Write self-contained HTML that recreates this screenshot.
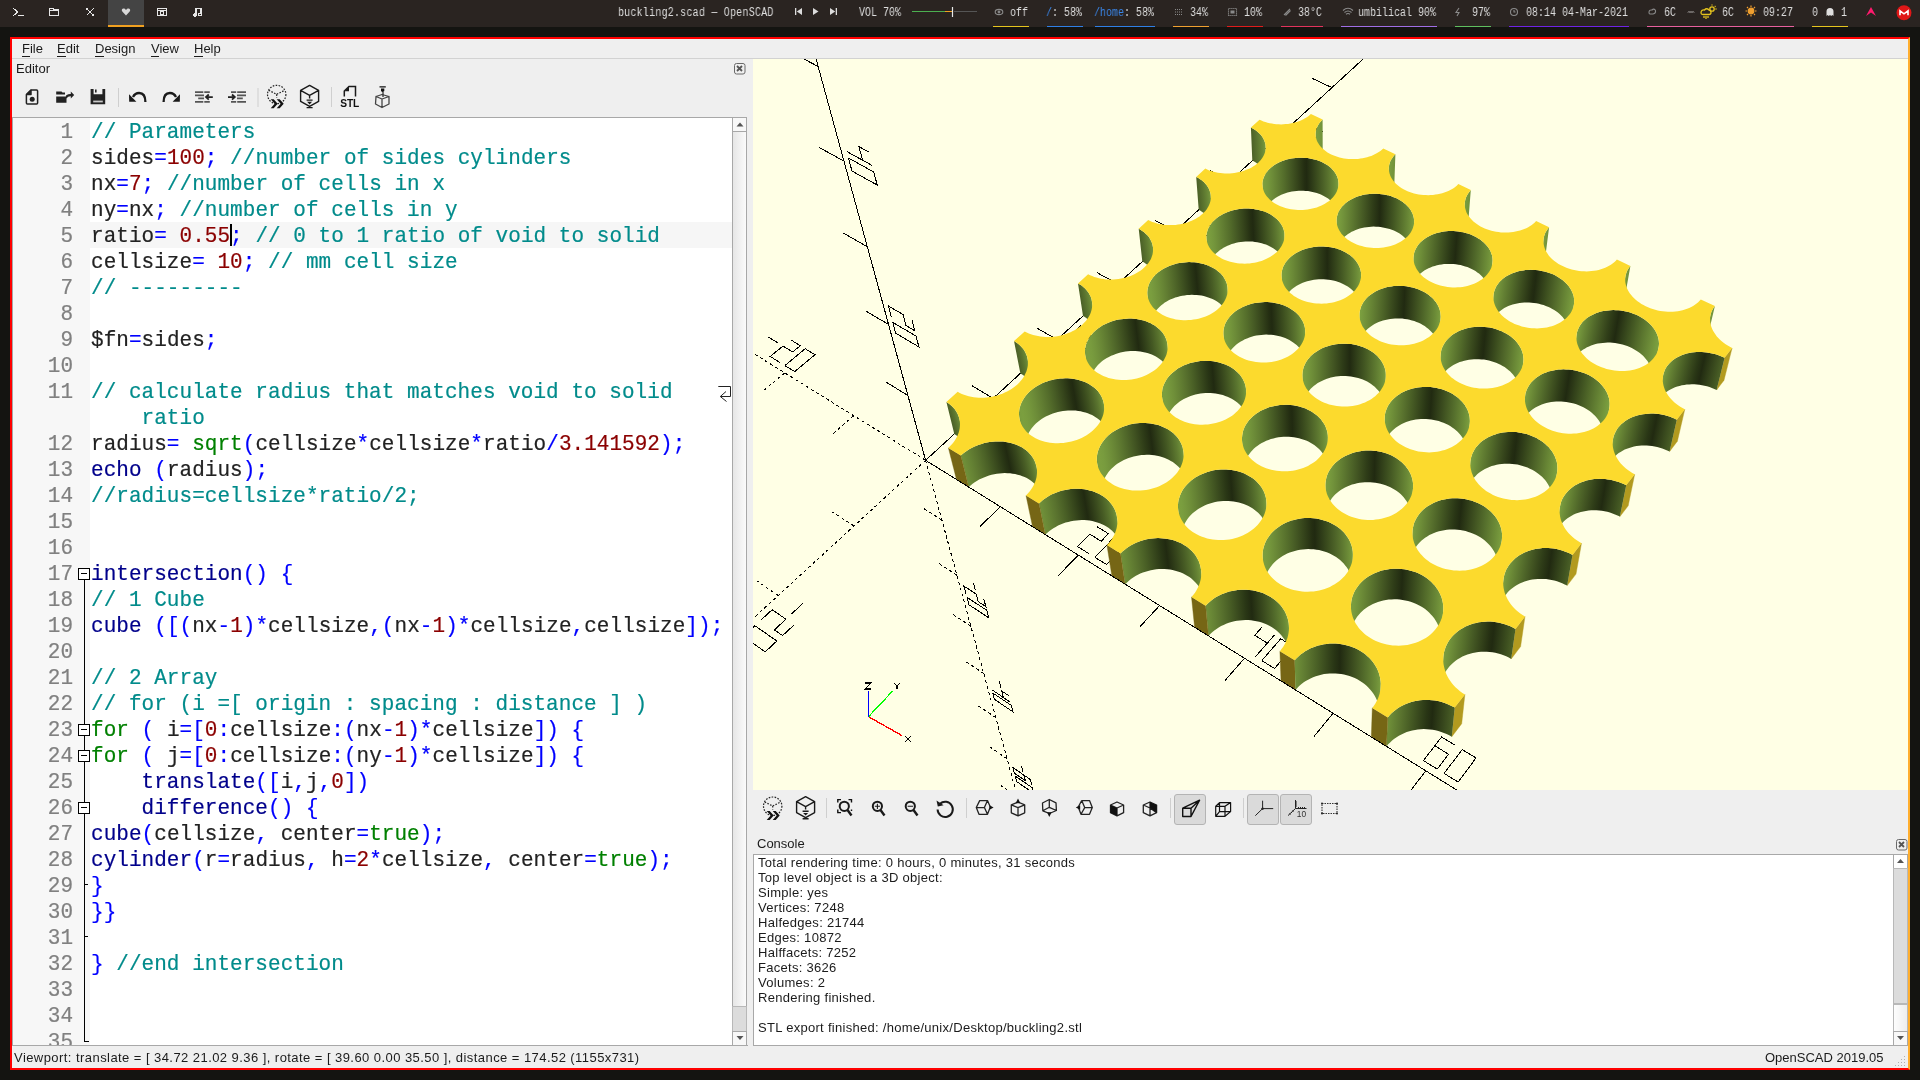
<!DOCTYPE html><html><head><meta charset="utf-8"><style>
*{margin:0;padding:0;box-sizing:border-box}
html,body{width:1920px;height:1080px;overflow:hidden;background:#141411;position:relative}
.a{position:absolute}
.t{will-change:transform;position:absolute;white-space:pre;font-family:"Liberation Sans",sans-serif;font-size:13px;line-height:16px;color:#1b1b1b}
.m{font-family:"Liberation Mono",monospace}
.bar{font-family:"Liberation Mono",monospace;font-size:12.5px;line-height:16px;color:#dedede;transform:scaleX(.8);transform-origin:0 0}
.code{will-change:transform;position:absolute;left:91px;white-space:pre;font-family:"Liberation Mono",monospace;font-size:21px;line-height:26px;height:26px;letter-spacing:.04px;color:#222;transform:scaleY(1.07);transform-origin:0 19px;-webkit-text-stroke:.2px currentColor}
.ln{will-change:transform;position:absolute;left:12px;width:61px;text-align:right;white-space:pre;font-family:"Liberation Mono",monospace;font-size:21px;line-height:26px;height:26px;color:#808080;transform:scaleY(1.07);transform-origin:0 19px;-webkit-text-stroke:.2px currentColor}
.C{color:#008b8b}.N{color:#8b0000}.O{color:#0000ff}.K{color:#00008b}.G{color:#008000}
u{text-decoration:none;border-bottom:1px solid #1b1b1b}
.con{letter-spacing:.29px}
.st{letter-spacing:.44px}
</style></head><body>

<div class="a" style="left:0;top:0;width:1920px;height:27px;background:#2a2421"></div>
<div class="a" style="left:108px;top:0;width:36px;height:27px;background:#444"></div>
<div class="a" style="left:108px;top:25.4px;width:36px;height:1.6px;background:#f0a020"></div>
<div class="t bar" style="left:618px;top:5px;letter-spacing:.28px">buckling2.scad — OpenSCAD</div>
<div class="t bar" style="left:859px;top:5px;">VOL 70%</div>
<div class="t bar" style="left:1010px;top:5px;">off</div>
<div class="a" style="left:993px;top:25.6px;width:36px;height:1.4px;background:#e5c41e"></div>
<div class="t bar" style="left:1046px;top:5px;"><span style="color:#3a86e8">/</span>: 58%</div>
<div class="a" style="left:1047px;top:25.6px;width:36px;height:1.4px;background:#2f7fe6"></div>
<div class="t bar" style="left:1094px;top:5px;"><span style="color:#3a86e8">/home</span>: 58%</div>
<div class="a" style="left:1095px;top:25.6px;width:60px;height:1.4px;background:#2f7fe6"></div>
<div class="t bar" style="left:1190px;top:5px;">34%</div>
<div class="a" style="left:1173px;top:25.6px;width:36px;height:1.4px;background:#f0a030"></div>
<div class="t bar" style="left:1244px;top:5px;">10%</div>
<div class="a" style="left:1227px;top:25.6px;width:36px;height:1.4px;background:#e01b1b"></div>
<div class="t bar" style="left:1298px;top:5px;">38°C</div>
<div class="a" style="left:1281px;top:25.6px;width:42px;height:1.4px;background:#e2335c"></div>
<div class="t bar" style="left:1358px;top:5px;">umbilical 90%</div>
<div class="a" style="left:1341px;top:25.6px;width:96px;height:1.4px;background:#a06ee6"></div>
<div class="t bar" style="left:1472px;top:5px;">97%</div>
<div class="a" style="left:1455px;top:25.6px;width:36px;height:1.4px;background:#5fbf5f"></div>
<div class="t bar" style="left:1526px;top:5px;">08:14 04-Mar-2021</div>
<div class="a" style="left:1509px;top:25.6px;width:120px;height:1.4px;background:#6f23e6"></div>
<div class="t bar" style="left:1664px;top:5px;">6C</div>
<div class="a" style="left:1647px;top:25.6px;width:147px;height:1.4px;background:#e8609e"></div>
<div class="t bar" style="left:1722px;top:5px;">6C</div>
<div class="t bar" style="left:1763px;top:5px;">09:27</div>
<div class="t bar" style="left:1812px;top:5px;">0</div>
<div class="a" style="left:1812px;top:25.6px;width:36px;height:1.4px;background:#e5c41e"></div>
<div class="t bar" style="left:1841px;top:5px;">1</div>
<div class="a" style="left:10px;top:37px;width:1900px;height:1033px;background:#efefef;border:2px solid #ff0000;border-right-color:#ffae2e"></div>
<div class="t " style="left:22px;top:41px;"><u>F</u>ile</div>
<div class="t " style="left:57px;top:41px;"><u>E</u>dit</div>
<div class="t " style="left:95px;top:41px;"><u>D</u>esign</div>
<div class="t " style="left:151px;top:41px;"><u>V</u>iew</div>
<div class="t " style="left:194px;top:41px;"><u>H</u>elp</div>
<div class="a" style="left:12px;top:58px;width:1896px;height:1px;background:#d2d2d2"></div>
<div class="t " style="left:16px;top:61px;">Editor</div>
<div class="a" style="left:12px;top:117px;width:735px;height:929px;background:#fff;border:1px solid #a8a8a8"></div>
<div class="a" style="left:13px;top:118px;width:77px;height:927px;background:#f7f7f7"></div>
<div class="a" style="left:90px;top:222px;width:642px;height:26px;background:#f6f6f6"></div>
<div class="a" style="left:732px;top:117px;width:15px;height:929px;background:linear-gradient(90deg,#e6e6e6,#fbfbfb);border:1px solid #a8a8a8"></div>
<div class="a" style="left:732px;top:117px;width:15px;height:15px;background:#f8f8f8;border:1px solid #a8a8a8"></div>
<div class="a" style="left:732px;top:1006px;width:15px;height:26px;background:#dcdcdc;border:1px solid #b8b8b8"></div>
<div class="a" style="left:732px;top:1031px;width:15px;height:15px;background:#f8f8f8;border:1px solid #a8a8a8"></div>
<div class="ln" style="top:120.0px">1</div>
<div class="code" style="top:120.0px"><span class="C">// Parameters</span></div>
<div class="ln" style="top:146.0px">2</div>
<div class="code" style="top:146.0px">sides<span class="O">=</span><span class="N">100</span><span class="O">;</span><span class="C"> //number of sides cylinders</span></div>
<div class="ln" style="top:172.0px">3</div>
<div class="code" style="top:172.0px">nx<span class="O">=</span><span class="N">7</span><span class="O">;</span><span class="C"> //number of cells in x</span></div>
<div class="ln" style="top:198.0px">4</div>
<div class="code" style="top:198.0px">ny<span class="O">=</span>nx<span class="O">;</span><span class="C"> //number of cells in y</span></div>
<div class="ln" style="top:224.0px">5</div>
<div class="code" style="top:224.0px">ratio<span class="O">=</span> <span class="N">0.55</span><span class="O">;</span><span class="C"> // 0 to 1 ratio of void to solid</span></div>
<div class="ln" style="top:250.0px">6</div>
<div class="code" style="top:250.0px">cellsize<span class="O">=</span> <span class="N">10</span><span class="O">;</span><span class="C"> // mm cell size</span></div>
<div class="ln" style="top:276.0px">7</div>
<div class="code" style="top:276.0px"><span class="C">// ---------</span></div>
<div class="ln" style="top:302.0px">8</div>
<div class="ln" style="top:328.0px">9</div>
<div class="code" style="top:328.0px">$fn<span class="O">=</span>sides<span class="O">;</span></div>
<div class="ln" style="top:354.0px">10</div>
<div class="ln" style="top:380.0px">11</div>
<div class="code" style="top:380.0px"><span class="C">// calculate radius that matches void to solid</span></div>
<div class="ln" style="top:432.0px">12</div>
<div class="code" style="top:432.0px">radius<span class="O">=</span> <span class="G">sqrt</span><span class="O">(</span>cellsize<span class="O">*</span>cellsize<span class="O">*</span>ratio<span class="O">/</span><span class="N">3.141592</span><span class="O">);</span></div>
<div class="ln" style="top:458.0px">13</div>
<div class="code" style="top:458.0px"><span class="K">echo</span> <span class="O">(</span>radius<span class="O">);</span></div>
<div class="ln" style="top:484.0px">14</div>
<div class="code" style="top:484.0px"><span class="C">//radius=cellsize*ratio/2;</span></div>
<div class="ln" style="top:510.0px">15</div>
<div class="ln" style="top:536.0px">16</div>
<div class="ln" style="top:562.0px">17</div>
<div class="code" style="top:562.0px"><span class="K">intersection</span><span class="O">()</span> <span class="O">{</span></div>
<div class="ln" style="top:588.0px">18</div>
<div class="code" style="top:588.0px"><span class="C">// 1 Cube</span></div>
<div class="ln" style="top:614.0px">19</div>
<div class="code" style="top:614.0px"><span class="K">cube</span> <span class="O">([(</span>nx<span class="O">-</span><span class="N">1</span><span class="O">)*</span>cellsize<span class="O">,(</span>nx<span class="O">-</span><span class="N">1</span><span class="O">)*</span>cellsize<span class="O">,</span>cellsize<span class="O">]);</span></div>
<div class="ln" style="top:640.0px">20</div>
<div class="ln" style="top:666.0px">21</div>
<div class="code" style="top:666.0px"><span class="C">// 2 Array</span></div>
<div class="ln" style="top:692.0px">22</div>
<div class="code" style="top:692.0px"><span class="C">// for (i =[ origin : spacing : distance ] )</span></div>
<div class="ln" style="top:718.0px">23</div>
<div class="code" style="top:718.0px"><span class="G">for</span> <span class="O">(</span> i<span class="O">=[</span><span class="N">0</span><span class="O">:</span>cellsize<span class="O">:(</span>nx<span class="O">-</span><span class="N">1</span><span class="O">)*</span>cellsize<span class="O">])</span> <span class="O">{</span></div>
<div class="ln" style="top:744.0px">24</div>
<div class="code" style="top:744.0px"><span class="G">for</span> <span class="O">(</span> j<span class="O">=[</span><span class="N">0</span><span class="O">:</span>cellsize<span class="O">:(</span>ny<span class="O">-</span><span class="N">1</span><span class="O">)*</span>cellsize<span class="O">])</span> <span class="O">{</span></div>
<div class="ln" style="top:770.0px">25</div>
<div class="code" style="top:770.0px"><span class="K">    translate</span><span class="O">([</span>i<span class="O">,</span>j<span class="O">,</span><span class="N">0</span><span class="O">])</span></div>
<div class="ln" style="top:796.0px">26</div>
<div class="code" style="top:796.0px"><span class="K">    difference</span><span class="O">()</span> <span class="O">{</span></div>
<div class="ln" style="top:822.0px">27</div>
<div class="code" style="top:822.0px"><span class="K">cube</span><span class="O">(</span>cellsize<span class="O">,</span> center<span class="O">=</span><span class="G">true</span><span class="O">);</span></div>
<div class="ln" style="top:848.0px">28</div>
<div class="code" style="top:848.0px"><span class="K">cylinder</span><span class="O">(</span>r<span class="O">=</span>radius<span class="O">,</span> h<span class="O">=</span><span class="N">2</span><span class="O">*</span>cellsize<span class="O">,</span> center<span class="O">=</span><span class="G">true</span><span class="O">);</span></div>
<div class="ln" style="top:874.0px">29</div>
<div class="code" style="top:874.0px"><span class="O">}</span></div>
<div class="ln" style="top:900.0px">30</div>
<div class="code" style="top:900.0px"><span class="O">}}</span></div>
<div class="ln" style="top:926.0px">31</div>
<div class="ln" style="top:952.0px">32</div>
<div class="code" style="top:952.0px"><span class="O">}</span><span class="C"> //end intersection</span></div>
<div class="ln" style="top:978.0px">33</div>
<div class="ln" style="top:1004.0px">34</div>
<div class="ln" style="top:1030.0px">35</div>
<div class="code C" style="top:406.0px">    ratio</div>
<div class="a" style="left:230px;top:224px;width:2px;height:22px;background:#000"></div>
<div class="a" style="left:12px;top:1045px;width:736px;height:1px;background:#a8a8a8"></div>
<div class="a" style="left:12px;top:1046px;width:1896px;height:22px;background:#efefef"></div>
<svg width="1155" height="731" viewBox="0 0 1155 731" style="position:absolute;left:753px;top:59px;background:#ffffe5"><rect width="1155" height="731" fill="#ffffe5"/><g fill="none" stroke="#000" stroke-width="1" shape-rendering="crispEdges">
<path d="M172.6 401.3L2145.4 1625.9M172.6 401.3L985.3 -344.1M172.6 401.3L-933.9 -3654.0M247.4 447.8L227.2 467.2M240.2 339.3L219.2 326.9M154.8 336.4L132.8 323.0M325.3 496.1L305.4 516.5M304.2 280.6L283.4 268.8M135.5 265.4L112.6 251.9M406.6 546.6L386.9 567.8M364.9 225.0L344.3 213.8M114.3 187.7L90.4 174.1M491.4 599.3L472.1 621.4M422.5 172.1L402.1 161.5M90.9 102.1L66.1 88.4M580 654.3L561.1 677.4M477.2 121.9L457.1 111.8M65.1 7.5L39.1 -6.3M672.8 711.8L654.2 736.1M529.3 74.1L509.4 64.5M36.4 -97.8L9.2 -111.5M769.8 772.1L751.8 797.5M578.9 28.6L559.2 19.4M4.2 -215.6L-24.3 -229.1M871.5 835.2L854.1 861.8M626.3 -14.8L606.8 -23.6M-31.9 -348.2L-62 -361.4M978.3 901.5L961.5 929.4M671.5 -56.3L652.3 -64.7M-73 -498.7L-104.7 -511.4M1090.4 971.1L1074.3 1000.5M714.7 -95.9L695.7 -103.9M-120 -671.0L-153.5 -682.9M1208.3 1044.3L1193.1 1075.2M756.1 -133.9L737.3 -141.5M-174.4 -870.1L-209.8 -880.7M1332.5 1121.3L1318.2 1154.0M795.7 -170.2L777.1 -177.6M-237.9 -1102.9L-275.5 -1111.7M1463.5 1202.6L1450.3 1237.1M833.7 -205.0L815.3 -212.1M-313.1 -1378.6L-353.2 -1384.7M1601.8 1288.5L1589.8 1324.9M870.1 -238.5L852 -245.2M-403.6 -1710.4L-446.5 -1712.4M1748.1 1379.3L1737.5 1417.9M905.1 -270.6L887.2 -277.1M-514.6 -2117.2L-560.5 -2113.1M1903.1 1475.6L1894.2 1516.5M938.7 -301.4L921 -307.7M-653.9 -2627.8L-703.2 -2614.3M2067.6 1577.7L2060.5 1621.2M971.1 -331.1L953.6 -337.1M-834 -3287.8L-886.7 -3259.1M344 467.7L355.5 474.7L348.2 482.2L336.7 475.1L324.4 487.5L336 494.7M341.8 498.3L353.5 505.5L372.9 485.4L361.3 478.3L341.8 498.3M348.4 278.8L339.5 287.1L331.6 282.7L340.5 274.4L327.4 267.0L318.4 275.3M313.9 279.4L304.9 287.7L326 299.7L335 291.3L313.9 279.4M158.9 260.7L161.7 271.7L152.9 266.5L150 255.5L135.4 247.0L138.3 258.0M139.8 263.4L142.7 274.2L165.9 287.9L163.1 277.1L139.8 263.4M15.5 278.1L25.1 284.0M37.6 280.7L47.3 286.7L39.7 293.0L30 287.0L17.2 297.5L27 303.5M31.9 306.6L41.7 312.6L62 295.7L52.2 289.7L31.9 306.6M49.9 544.3L38.6 554.9M41.1 565.9L29.6 576.6L21.4 570.9L32.9 560.2L19.2 550.7L7.7 561.3M1.9 566.7L-9.8 577.4L12.2 592.9L23.8 582.0L1.9 566.7M220.3 523.6L222.3 531.3M230.8 540.0L232.8 547.5L225.3 542.7L223.3 535.1L210.9 527.1L213 534.6M214 538.4L216 545.8L235.6 558.7L233.7 551.2L214 538.4M508.8 568.3L501.8 576.4L514.3 584.1M521.4 576.0L502.5 597.7M508.8 601.6L521.5 609.5L540.3 587.5L527.7 579.8L508.8 601.6M464.3 170.5L456.6 166.5L448.5 174.0M456.3 178.0L435.7 167.3M431.6 171.1L423.5 178.6L444.1 189.4L452.3 181.8L431.6 171.1M115.7 93.0L106 87.7L109.5 101.1M119.1 106.4L93.6 92.4M95.4 99.0L99 112.1L124.2 126.0L120.8 113.0L95.4 99.0M-112.3 199.7L-103.3 205.3M-91.1 202.2L-98.8 208.0L-89.7 213.6M-82.1 207.7L-102.6 223.3M-98.1 226.2L-89 231.8L-68.4 216.1L-77.5 210.5L-98.1 226.2M-115.3 697.8L-128.1 709.7M-126.2 722.2L-134.6 715.7L-147.6 727.8M-139.2 734.3L-161.4 717.0M-168 723.1L-181.2 735.2L-159 752.8L-145.8 740.5L-168 723.1M246.2 622.1L247.9 628.7M255.8 636.7L248.8 632.0L250.5 638.5M257.4 643.2L238.9 630.8M239.8 634.0L241.5 640.4L259.9 652.8L258.3 646.4L239.8 634.0M702.3 686.4L688.6 678.0L670.4 701.6L684.2 710.1L695.5 695.2L681.8 686.8M691.1 714.4L705.1 723.0L723 699.0L709.2 690.6L691.1 714.4M561.8 79.5L569.1 72.7L549 63.1L541.7 69.8L554.2 75.8L561.5 69.1M538 73.2L530.6 80.0L550.8 89.7L558.1 82.9L538 73.2M66.8 -96.7L62.5 -113.3L34.4 -127.2L38.8 -110.7L56.3 -102.0L51.9 -118.6M41.1 -102.5L45.4 -86.3L73.1 -72.4L68.9 -88.5L41.1 -102.5M-230.9 127.0L-222.6 132.1M-202.3 134.4L-210.7 129.3L-231.4 143.7L-223 148.9L-210 139.8L-218.4 134.6M-218.7 151.5L-210.2 156.8L-189.6 142.1L-198 137.0L-218.7 151.5M-303 872.2L-317.7 885.8M-331.5 913.9L-316.6 900.0L-339 880.5L-353.9 894.2L-339.9 906.5L-325 892.7M-361.4 901.1L-376.5 915.0L-354.1 935.1L-339 920.9L-361.4 901.1M268.5 707.4L270 713.1M278.8 726.1L277.3 720.5L259.9 708.5L261.4 714.2L272.3 721.6L270.8 716.0M262.2 717.0L263.7 722.6L281 734.5L279.5 728.9L262.2 717.0M868.3 824.0L883.4 833.3L900.4 807.2L885.3 798.1L868.3 824.0M879 807.7L894.1 817.0M891 838.0L906.3 847.5L923.1 821.1L907.9 811.9L891 838.0M644.5 -24.9L637.9 -18.8L657.5 -10.0L664.1 -16.2L644.5 -24.9M656.8 -19.4L650.1 -13.3M634.5 -15.7L627.8 -9.5L647.5 -0.6L654.2 -6.9L634.5 -15.7M-35.6 -386.7L-30 -365.6L1 -352.2L-4.5 -373.3L-35.6 -386.7M-16.2 -378.4L-10.7 -357.2M-27.1 -355.2L-21.6 -334.7L9 -321.2L3.7 -341.7L-27.1 -355.2M-341.5 59.2L-333.7 63.9M-342.8 74.8L-335 79.6L-314.2 66.1L-322 61.3L-342.8 74.8M-329.8 66.3L-321.9 71.1M-331 82.1L-323.1 86.9L-302.4 73.3L-310.3 68.5L-331 82.1M-518.3 1072.2L-535.1 1087.9M-557.6 1081.7L-574.7 1097.5L-552.4 1120.3L-535.2 1104.3L-557.6 1081.7M-543.7 1095.8L-560.8 1111.7M-583.4 1105.4L-600.8 1121.5L-578.5 1144.7L-561.1 1128.4L-583.4 1105.4M288 781.8L289.4 786.9M279.8 782.1L281.1 787.1L297.5 798.7L296.2 793.7L279.8 782.1M290 789.4L291.3 794.3M281.8 789.6L283.1 794.5L299.4 806.1L298.1 801.2L281.8 789.6M1102.7 969.0L1118.3 940.2M1111.1 974.2L1128 984.6L1143.4 955.5L1126.6 945.3L1111.1 974.2M1136.4 989.8L1153.5 1000.4L1168.7 971.0L1151.8 960.7L1136.4 989.8M734.7 -107.9L753.9 -100.0M731.7 -105.2L725.6 -99.6L744.8 -91.5L750.9 -97.2L731.7 -105.2M722.6 -96.7L716.4 -91.1L735.7 -83.0L741.8 -88.7L722.6 -96.7M-130.2 -737.1L-95.2 -725.3M-126.4 -723.0L-118.9 -695.2L-84.3 -683.2L-91.5 -711.1L-126.4 -723.0M-115.2 -681.5L-108 -654.6L-73.8 -642.4L-80.8 -669.5L-115.2 -681.5M-455.6 -10.8L-448.3 -6.4M-450.5 8.2L-429.7 -4.4M-446.8 10.4L-439.5 15.0L-418.7 2.3L-426 -2.2L-446.8 10.4M-435.8 17.2L-428.4 21.8L-407.6 9.1L-415 4.5L-435.8 17.2M-767.6 1303.8L-787.2 1322.1M-830.9 1333.3L-808.9 1359.9M-841 1342.6L-861.3 1361.3L-839.4 1388.4L-819 1369.3L-841 1342.6M-871.6 1370.7L-892.3 1389.8L-870.4 1417.4L-849.7 1398.0L-871.6 1370.7M305.3 847.4L306.4 851.9M298.5 851.5L314 862.7M299.1 853.7L300.3 858.1L315.7 869.2L314.5 864.9L299.1 853.7M300.9 860.3L302 864.6L317.3 875.7L316.2 871.4L300.9 860.3M1345.3 1119.0L1359.1 1087.2M1368.3 1092.8L1386.9 1104.1L1381.8 1116.1L1363.2 1104.7L1354.6 1124.8L1373.3 1136.4M1382.7 1142.2L1401.7 1153.9L1415 1121.3L1396.2 1109.8L1382.7 1142.2M814.3 -181.2L833 -173.9M830.3 -171.3L824.7 -166.1L817.7 -168.9L823.2 -174.1L811.6 -178.7L806 -173.5M803.2 -170.9L797.5 -165.8L816.3 -158.3L821.9 -163.5L803.2 -170.9M-253.9 -1195.6L-214.2 -1187.4M-209.2 -1167.7L-199.2 -1129.2L-214 -1132.5L-224.1 -1170.9L-248.7 -1176.1L-238.4 -1137.9M-233.3 -1119.2L-223.4 -1082.4L-184.8 -1073.2L-194.4 -1110.3L-233.3 -1119.2M-551.5 -69.7L-544.8 -65.5M-547.5 -51.9L-526.8 -63.7M-523.4 -61.6L-516.5 -57.4L-524.3 -52.9L-531.1 -57.2L-544.1 -49.8L-537.3 -45.5M-533.8 -43.4L-526.9 -39.1L-506.1 -51.1L-513.1 -55.3L-533.8 -43.4M-1059.7 1575.2L-1082.9 1596.7M-1131.5 1610.0L-1110.3 1641.5M-1122.2 1652.6L-1146.4 1675.2L-1154.3 1663.1L-1130.2 1640.7L-1143.4 1620.9L-1167.4 1643.1M-1179.6 1654.3L-1204.1 1676.8L-1183.2 1709.6L-1158.6 1686.6L-1179.6 1654.3M320.5 905.6L321.6 909.6M314 908.8L328.6 919.6M329.1 921.5L330.1 925.4L324.7 921.4L323.6 917.5L314.5 910.8L315.5 914.7M316.1 916.6L317.1 920.5L331.6 931.2L330.6 927.3L316.1 916.6M1615.1 1285.9L1626.6 1250.4M1636.9 1256.7L1632.6 1270.0L1653.4 1282.7M1657.6 1269.3L1646.3 1305.3M1656.8 1311.8L1678 1324.9L1688.9 1288.4L1668 1275.7L1656.8 1311.8M887.5 -248.6L905.8 -241.9M903.2 -239.5L896.4 -242.0L891.2 -237.3M898.1 -234.7L879.8 -241.5M877.3 -239.1L872.1 -234.4L890.4 -227.5L895.6 -232.3L877.3 -239.1M-430.1 -1848.3L-384.5 -1848.2M-377 -1819.2L-394.2 -1819.4L-379.4 -1763.1M-362.4 -1762.6L-407.3 -1764.0M-400 -1736.7L-385.6 -1683.4L-341.4 -1680.9L-355.3 -1735.0L-400 -1736.7M-641.5 -124.9L-635.2 -121.0M-638.6 -108.2L-617.9 -119.2M-614.7 -117.3L-622.4 -113.1L-615.9 -109.2M-608.2 -113.3L-628.9 -102.2M-625.7 -100.2L-619.2 -96.2L-598.5 -107.4L-605 -111.4L-625.7 -100.2M-1406.7 1897.6L-1434.5 1923.4M-1489.2 1939.3L-1469.5 1977.0M-1483.9 1990.5L-1491.3 1976.1L-1520.2 2003.0M-1512.9 2017.6L-1532.3 1979.0M-1546.9 1992.4L-1576.4 2019.6L-1557.2 2059.0L-1527.6 2031.3L-1546.9 1992.4M334.2 957.7L335.1 961.3M327.8 960.1L341.7 970.5M342.2 972.2L337 968.3L337.9 971.8M343.1 975.7L329.2 965.4M329.7 967.1L330.6 970.6L344.4 980.9L343.5 977.4L329.7 967.1"/>
<path stroke-dasharray="3 3" d="M172.6 401.3L-773.6 -186.0M172.6 401.3L-2221.2 2596.9M172.6 401.3L343.7 1028.5M100.7 356.7L80.2 374.7M101 467.0L79.6 453.0M188.9 461.1L168.4 448.1M31.7 313.9L11 331.2M25.2 536.5L3.6 521.8M203.9 516.2L184.2 503.4M-34.8 272.6L-55.6 289.3M-55.4 610.4L-77 594.7M217.8 567.2L198.8 554.7M-98.7 232.9L-119.6 248.9M-141 688.9L-162.8 672.2M230.7 614.6L212.3 602.2M-160.3 194.7L-181.3 210.1M-232.3 772.7L-254.2 754.8M242.8 658.6L224.9 646.5M-219.7 157.8L-240.8 172.7M-329.8 862.1L-351.8 843.0M254 699.7L236.7 687.8M-277 122.3L-298.1 136.6M-434.2 957.8L-456.1 937.4M264.5 738.2L247.7 726.5M-332.3 87.9L-353.5 101.8M-546.1 1060.5L-568.1 1038.6M274.3 774.2L258 762.7M-385.7 54.8L-406.9 68.2M-666.6 1171.0L-688.4 1147.4M283.5 808.0L267.7 796.7M-437.4 22.7L-458.5 35.7M-796.6 1290.2L-818.2 1264.7M292.2 839.9L276.8 828.8M-487.3 -8.3L-508.4 4.2M-937.2 1419.2L-958.5 1391.6M300.4 869.9L285.4 859.0M-535.6 -38.3L-556.7 -26.1M-1089.8 1559.2L-1110.7 1529.2M308.1 898.2L293.5 887.5M-582.4 -67.3L-603.4 -55.6M-1256.1 1711.7L-1276.4 1679.0M315.4 925.0L301.2 914.5M-627.7 -95.4L-648.7 -84.0M-1437.9 1878.5L-1457.4 1842.6M322.4 950.4L308.4 940.1M-671.5 -122.6L-692.5 -111.6M-1637.5 2061.6L-1655.9 2022.1M328.9 974.5L315.3 964.3M-714.1 -149.1L-735 -138.4M-1857.8 2263.6L-1874.8 2220.0M335.2 997.3L321.9 987.3M-755.4 -174.7L-776.2 -164.3M-2101.9 2487.5L-2117.1 2439.1M341.1 1019.1L328.1 1009.3"/>
</g>
<defs><linearGradient id="g0" gradientUnits="userSpaceOnUse" x1="693.4" y1="569.5" x2="761.7" y2="576.9"><stop offset="0.005" stop-color="#7b9f3f"/><stop offset="0.019" stop-color="#799c3e"/><stop offset="0.057" stop-color="#74963c"/><stop offset="0.116" stop-color="#6c8b38"/><stop offset="0.195" stop-color="#617d32"/><stop offset="0.291" stop-color="#546d2b"/><stop offset="0.401" stop-color="#455924"/><stop offset="0.520" stop-color="#35441b"/><stop offset="0.645" stop-color="#242e12"/><stop offset="0.687" stop-color="#212a11"/><stop offset="0.771" stop-color="#2c3917"/><stop offset="0.895" stop-color="#3d4f1f"/><stop offset="0.974" stop-color="#485d25"/></linearGradient><linearGradient id="g1" gradientUnits="userSpaceOnUse" x1="754.3" y1="493.9" x2="818.5" y2="503.2"><stop offset="0.005" stop-color="#7b9e3f"/><stop offset="0.022" stop-color="#789b3e"/><stop offset="0.062" stop-color="#72933b"/><stop offset="0.125" stop-color="#698736"/><stop offset="0.208" stop-color="#5d7830"/><stop offset="0.308" stop-color="#4f6629"/><stop offset="0.422" stop-color="#405221"/><stop offset="0.546" stop-color="#2f3d18"/><stop offset="0.675" stop-color="#212a11"/><stop offset="0.805" stop-color="#32411a"/><stop offset="0.932" stop-color="#425622"/><stop offset="0.973" stop-color="#485d25"/></linearGradient><linearGradient id="g2" gradientUnits="userSpaceOnUse" x1="811.2" y1="423.8" x2="871.8" y2="434.4"><stop offset="0.004" stop-color="#7b9e3f"/><stop offset="0.016" stop-color="#789b3e"/><stop offset="0.053" stop-color="#72933b"/><stop offset="0.113" stop-color="#698736"/><stop offset="0.194" stop-color="#5d7830"/><stop offset="0.293" stop-color="#4f6629"/><stop offset="0.408" stop-color="#405221"/><stop offset="0.533" stop-color="#2f3d18"/><stop offset="0.664" stop-color="#212a11"/><stop offset="0.798" stop-color="#32411a"/><stop offset="0.930" stop-color="#425622"/><stop offset="0.972" stop-color="#485d25"/></linearGradient><linearGradient id="g3" gradientUnits="userSpaceOnUse" x1="864.7" y1="357.1" x2="922.2" y2="368.7"><stop offset="0.005" stop-color="#7a9e3f"/><stop offset="0.021" stop-color="#76983d"/><stop offset="0.062" stop-color="#6f8f39"/><stop offset="0.127" stop-color="#658234"/><stop offset="0.213" stop-color="#59722e"/><stop offset="0.317" stop-color="#4a6026"/><stop offset="0.436" stop-color="#3a4b1e"/><stop offset="0.566" stop-color="#293615"/><stop offset="0.656" stop-color="#212a11"/><stop offset="0.701" stop-color="#273214"/><stop offset="0.838" stop-color="#38481d"/><stop offset="0.972" stop-color="#485d25"/></linearGradient><linearGradient id="g4" gradientUnits="userSpaceOnUse" x1="915.0" y1="294.9" x2="969.7" y2="307.2"><stop offset="0.004" stop-color="#7a9e3f"/><stop offset="0.017" stop-color="#76983d"/><stop offset="0.055" stop-color="#6f8f39"/><stop offset="0.118" stop-color="#658234"/><stop offset="0.203" stop-color="#59722e"/><stop offset="0.306" stop-color="#4a6026"/><stop offset="0.426" stop-color="#3a4b1e"/><stop offset="0.556" stop-color="#293615"/><stop offset="0.648" stop-color="#212a11"/><stop offset="0.694" stop-color="#273214"/><stop offset="0.834" stop-color="#38481d"/><stop offset="0.971" stop-color="#485d25"/></linearGradient><linearGradient id="g5" gradientUnits="userSpaceOnUse" x1="958.7" y1="250.9" x2="960.8" y2="251.4"><stop offset="0.029" stop-color="#799c3e"/><stop offset="0.514" stop-color="#74963c"/><stop offset="0.822" stop-color="#72933b"/></linearGradient><linearGradient id="g6" gradientUnits="userSpaceOnUse" x1="873.5" y1="211.4" x2="876.5" y2="212.0"><stop offset="0.023" stop-color="#7a9e3f"/><stop offset="0.370" stop-color="#76983d"/><stop offset="0.850" stop-color="#72933b"/></linearGradient><linearGradient id="g7" gradientUnits="userSpaceOnUse" x1="791.4" y1="173.4" x2="795.4" y2="173.9"><stop offset="0.019" stop-color="#7b9e3f"/><stop offset="0.279" stop-color="#789b3e"/><stop offset="0.869" stop-color="#72933b"/></linearGradient><linearGradient id="g8" gradientUnits="userSpaceOnUse" x1="712.3" y1="136.9" x2="717.3" y2="137.3"><stop offset="0.015" stop-color="#7b9f3f"/><stop offset="0.216" stop-color="#799c3e"/><stop offset="0.676" stop-color="#74963c"/><stop offset="0.884" stop-color="#72933b"/></linearGradient><linearGradient id="g9" gradientUnits="userSpaceOnUse" x1="636.1" y1="101.6" x2="642.1" y2="101.9"><stop offset="0.012" stop-color="#7b9f3f"/><stop offset="0.169" stop-color="#7a9e3f"/><stop offset="0.538" stop-color="#76983d"/><stop offset="0.894" stop-color="#72933b"/></linearGradient><linearGradient id="g10" gradientUnits="userSpaceOnUse" x1="562.6" y1="67.7" x2="569.6" y2="67.6"><stop offset="0.009" stop-color="#7a9e3f"/><stop offset="0.132" stop-color="#7b9e3f"/><stop offset="0.434" stop-color="#789b3e"/><stop offset="0.903" stop-color="#72933b"/></linearGradient><linearGradient id="g11" gradientUnits="userSpaceOnUse" x1="498.2" y1="77.4" x2="512.2" y2="76.9"><stop offset="0.068" stop-color="#4d6328"/><stop offset="0.411" stop-color="#5b752f"/><stop offset="0.683" stop-color="#678535"/><stop offset="0.875" stop-color="#70913a"/><stop offset="0.978" stop-color="#779a3d"/><stop offset="0.992" stop-color="#789c3e"/></linearGradient><linearGradient id="g12" gradientUnits="userSpaceOnUse" x1="443.9" y1="127.4" x2="457.1" y2="126.5"><stop offset="0.072" stop-color="#4d6328"/><stop offset="0.430" stop-color="#5b752f"/><stop offset="0.708" stop-color="#678535"/><stop offset="0.897" stop-color="#70913a"/><stop offset="0.988" stop-color="#779a3d"/><stop offset="0.996" stop-color="#789c3e"/></linearGradient><linearGradient id="g13" gradientUnits="userSpaceOnUse" x1="386.7" y1="179.2" x2="398.9" y2="177.9"><stop offset="0.076" stop-color="#4d6328"/><stop offset="0.453" stop-color="#5b752f"/><stop offset="0.737" stop-color="#678535"/><stop offset="0.920" stop-color="#70913a"/><stop offset="0.994" stop-color="#779a3d"/></linearGradient><linearGradient id="g14" gradientUnits="userSpaceOnUse" x1="326.4" y1="233.7" x2="337.4" y2="232.0"><stop offset="0.081" stop-color="#4d6328"/><stop offset="0.480" stop-color="#5b752f"/><stop offset="0.772" stop-color="#678535"/><stop offset="0.945" stop-color="#70913a"/><stop offset="0.992" stop-color="#75973c"/></linearGradient><linearGradient id="g15" gradientUnits="userSpaceOnUse" x1="262.8" y1="291.1" x2="272.5" y2="289.2"><stop offset="0.087" stop-color="#4d6328"/><stop offset="0.514" stop-color="#5b752f"/><stop offset="0.812" stop-color="#678535"/><stop offset="0.970" stop-color="#70913a"/><stop offset="0.990" stop-color="#73943b"/></linearGradient><linearGradient id="g16" gradientUnits="userSpaceOnUse" x1="195.5" y1="351.8" x2="203.9" y2="349.7"><stop offset="0.096" stop-color="#4d6328"/><stop offset="0.556" stop-color="#5b752f"/><stop offset="0.857" stop-color="#678535"/><stop offset="0.989" stop-color="#70913a"/></linearGradient><linearGradient id="g17" gradientUnits="userSpaceOnUse" x1="208.4" y1="399.0" x2="278.3" y2="383.7"><stop offset="0.022" stop-color="#6f8f39"/><stop offset="0.120" stop-color="#658234"/><stop offset="0.228" stop-color="#59722e"/><stop offset="0.340" stop-color="#4a6026"/><stop offset="0.454" stop-color="#3a4b1e"/><stop offset="0.565" stop-color="#293615"/><stop offset="0.636" stop-color="#212a11"/><stop offset="0.670" stop-color="#273214"/><stop offset="0.766" stop-color="#38481d"/><stop offset="0.847" stop-color="#485d25"/><stop offset="0.913" stop-color="#56702d"/><stop offset="0.961" stop-color="#638033"/><stop offset="0.989" stop-color="#6d8d38"/><stop offset="0.995" stop-color="#73943b"/></linearGradient><linearGradient id="g18" gradientUnits="userSpaceOnUse" x1="286.2" y1="445.5" x2="359.7" y2="433.0"><stop offset="0.021" stop-color="#6f8f39"/><stop offset="0.113" stop-color="#658234"/><stop offset="0.215" stop-color="#59722e"/><stop offset="0.323" stop-color="#4a6026"/><stop offset="0.434" stop-color="#3a4b1e"/><stop offset="0.543" stop-color="#293615"/><stop offset="0.614" stop-color="#212a11"/><stop offset="0.648" stop-color="#273214"/><stop offset="0.744" stop-color="#38481d"/><stop offset="0.828" stop-color="#485d25"/><stop offset="0.897" stop-color="#56702d"/><stop offset="0.949" stop-color="#638033"/><stop offset="0.982" stop-color="#6d8d38"/><stop offset="0.995" stop-color="#75973c"/></linearGradient><linearGradient id="g19" gradientUnits="userSpaceOnUse" x1="367.4" y1="493.8" x2="445.0" y2="484.6"><stop offset="0.020" stop-color="#6f8f39"/><stop offset="0.105" stop-color="#658234"/><stop offset="0.201" stop-color="#59722e"/><stop offset="0.304" stop-color="#4a6026"/><stop offset="0.411" stop-color="#3a4b1e"/><stop offset="0.518" stop-color="#293615"/><stop offset="0.588" stop-color="#212a11"/><stop offset="0.622" stop-color="#273214"/><stop offset="0.718" stop-color="#38481d"/><stop offset="0.804" stop-color="#485d25"/><stop offset="0.877" stop-color="#56702d"/><stop offset="0.934" stop-color="#638033"/><stop offset="0.973" stop-color="#6d8d38"/><stop offset="0.993" stop-color="#75973c"/><stop offset="0.995" stop-color="#779a3d"/></linearGradient><linearGradient id="g20" gradientUnits="userSpaceOnUse" x1="452.5" y1="543.7" x2="534.3" y2="539.0"><stop offset="0.018" stop-color="#6f8f39"/><stop offset="0.096" stop-color="#658234"/><stop offset="0.185" stop-color="#59722e"/><stop offset="0.283" stop-color="#4a6026"/><stop offset="0.385" stop-color="#3a4b1e"/><stop offset="0.489" stop-color="#293615"/><stop offset="0.558" stop-color="#212a11"/><stop offset="0.592" stop-color="#273214"/><stop offset="0.689" stop-color="#38481d"/><stop offset="0.777" stop-color="#485d25"/><stop offset="0.853" stop-color="#56702d"/><stop offset="0.915" stop-color="#638033"/><stop offset="0.960" stop-color="#6d8d38"/><stop offset="0.987" stop-color="#75973c"/><stop offset="0.994" stop-color="#789c3e"/></linearGradient><linearGradient id="g21" gradientUnits="userSpaceOnUse" x1="541.7" y1="596.2" x2="628.1" y2="597.2"><stop offset="0.017" stop-color="#6f8f39"/><stop offset="0.086" stop-color="#658234"/><stop offset="0.167" stop-color="#59722e"/><stop offset="0.258" stop-color="#4a6026"/><stop offset="0.356" stop-color="#3a4b1e"/><stop offset="0.456" stop-color="#293615"/><stop offset="0.524" stop-color="#212a11"/><stop offset="0.557" stop-color="#273214"/><stop offset="0.654" stop-color="#38481d"/><stop offset="0.743" stop-color="#485d25"/><stop offset="0.823" stop-color="#56702d"/><stop offset="0.891" stop-color="#638033"/><stop offset="0.943" stop-color="#6d8d38"/><stop offset="0.977" stop-color="#75973c"/><stop offset="0.994" stop-color="#799d3f"/><stop offset="0.995" stop-color="#7a9e3f"/></linearGradient><linearGradient id="g22" gradientUnits="userSpaceOnUse" x1="635.9" y1="643.7" x2="701.7" y2="648.4"><stop offset="0.018" stop-color="#6f8f39"/><stop offset="0.101" stop-color="#658234"/><stop offset="0.203" stop-color="#59722e"/><stop offset="0.319" stop-color="#4a6026"/><stop offset="0.447" stop-color="#3a4b1e"/><stop offset="0.580" stop-color="#293615"/><stop offset="0.670" stop-color="#212a11"/><stop offset="0.715" stop-color="#273214"/><stop offset="0.848" stop-color="#38481d"/><stop offset="0.974" stop-color="#485d25"/></linearGradient><linearGradient id="g23" gradientUnits="userSpaceOnUse" x1="263.0" y1="339.5" x2="347.3" y2="324.7"><stop offset="0.005" stop-color="#75973c"/><stop offset="0.015" stop-color="#799d3f"/><stop offset="0.042" stop-color="#7b9f3f"/><stop offset="0.085" stop-color="#799c3e"/><stop offset="0.142" stop-color="#74963c"/><stop offset="0.212" stop-color="#6c8b38"/><stop offset="0.291" stop-color="#617d32"/><stop offset="0.378" stop-color="#546d2b"/><stop offset="0.469" stop-color="#455924"/><stop offset="0.560" stop-color="#35441b"/><stop offset="0.650" stop-color="#242e12"/><stop offset="0.679" stop-color="#212a11"/><stop offset="0.734" stop-color="#2c3917"/><stop offset="0.811" stop-color="#3d4f1f"/><stop offset="0.877" stop-color="#4d6328"/><stop offset="0.930" stop-color="#5b752f"/><stop offset="0.968" stop-color="#678535"/><stop offset="0.989" stop-color="#70913a"/><stop offset="0.995" stop-color="#75973c"/></linearGradient><linearGradient id="g24" gradientUnits="userSpaceOnUse" x1="329.8" y1="276.8" x2="412.0" y2="266.3"><stop offset="0.005" stop-color="#779a3d"/><stop offset="0.015" stop-color="#7a9e3f"/><stop offset="0.042" stop-color="#7b9e3f"/><stop offset="0.085" stop-color="#789b3e"/><stop offset="0.143" stop-color="#72933b"/><stop offset="0.213" stop-color="#698736"/><stop offset="0.292" stop-color="#5d7830"/><stop offset="0.379" stop-color="#4f6629"/><stop offset="0.470" stop-color="#405221"/><stop offset="0.562" stop-color="#2f3d18"/><stop offset="0.651" stop-color="#212a11"/><stop offset="0.736" stop-color="#32411a"/><stop offset="0.812" stop-color="#425622"/><stop offset="0.878" stop-color="#526a2a"/><stop offset="0.931" stop-color="#5f7b31"/><stop offset="0.968" stop-color="#6a8937"/><stop offset="0.990" stop-color="#73943b"/><stop offset="0.995" stop-color="#779a3d"/></linearGradient><linearGradient id="g25" gradientUnits="userSpaceOnUse" x1="392.9" y1="217.7" x2="473.0" y2="210.8"><stop offset="0.005" stop-color="#789c3e"/><stop offset="0.016" stop-color="#7b9f3f"/><stop offset="0.044" stop-color="#7a9e3f"/><stop offset="0.088" stop-color="#76983d"/><stop offset="0.146" stop-color="#6f8f39"/><stop offset="0.216" stop-color="#658234"/><stop offset="0.296" stop-color="#59722e"/><stop offset="0.383" stop-color="#4a6026"/><stop offset="0.474" stop-color="#3a4b1e"/><stop offset="0.566" stop-color="#293615"/><stop offset="0.626" stop-color="#212a11"/><stop offset="0.656" stop-color="#273214"/><stop offset="0.740" stop-color="#38481d"/><stop offset="0.816" stop-color="#485d25"/><stop offset="0.881" stop-color="#56702d"/><stop offset="0.933" stop-color="#638033"/><stop offset="0.970" stop-color="#6d8d38"/><stop offset="0.991" stop-color="#75973c"/><stop offset="0.995" stop-color="#789c3e"/></linearGradient><linearGradient id="g26" gradientUnits="userSpaceOnUse" x1="452.6" y1="162.0" x2="530.7" y2="158.2"><stop offset="0.005" stop-color="#799d3f"/><stop offset="0.018" stop-color="#7b9f3f"/><stop offset="0.047" stop-color="#799c3e"/><stop offset="0.092" stop-color="#74963c"/><stop offset="0.151" stop-color="#6c8b38"/><stop offset="0.222" stop-color="#617d32"/><stop offset="0.303" stop-color="#546d2b"/><stop offset="0.390" stop-color="#455924"/><stop offset="0.482" stop-color="#35441b"/><stop offset="0.573" stop-color="#242e12"/><stop offset="0.604" stop-color="#212a11"/><stop offset="0.663" stop-color="#2c3917"/><stop offset="0.746" stop-color="#3d4f1f"/><stop offset="0.822" stop-color="#4d6328"/><stop offset="0.886" stop-color="#5b752f"/><stop offset="0.937" stop-color="#678535"/><stop offset="0.973" stop-color="#70913a"/><stop offset="0.992" stop-color="#779a3d"/><stop offset="0.995" stop-color="#799d3f"/></linearGradient><linearGradient id="g27" gradientUnits="userSpaceOnUse" x1="509.2" y1="109.4" x2="585.2" y2="108.0"><stop offset="0.005" stop-color="#799d3f"/><stop offset="0.013" stop-color="#7b9f3f"/><stop offset="0.038" stop-color="#799c3e"/><stop offset="0.080" stop-color="#74963c"/><stop offset="0.136" stop-color="#6c8b38"/><stop offset="0.205" stop-color="#617d32"/><stop offset="0.284" stop-color="#546d2b"/><stop offset="0.370" stop-color="#455924"/><stop offset="0.461" stop-color="#35441b"/><stop offset="0.553" stop-color="#242e12"/><stop offset="0.583" stop-color="#212a11"/><stop offset="0.643" stop-color="#2c3917"/><stop offset="0.728" stop-color="#3d4f1f"/><stop offset="0.806" stop-color="#4d6328"/><stop offset="0.873" stop-color="#5b752f"/><stop offset="0.927" stop-color="#678535"/><stop offset="0.966" stop-color="#70913a"/><stop offset="0.989" stop-color="#779a3d"/><stop offset="0.995" stop-color="#799d3f"/></linearGradient><linearGradient id="g28" gradientUnits="userSpaceOnUse" x1="584.0" y1="144.1" x2="661.5" y2="146.1"><stop offset="0.005" stop-color="#7a9e3f"/><stop offset="0.014" stop-color="#7b9e3f"/><stop offset="0.040" stop-color="#789b3e"/><stop offset="0.082" stop-color="#72933b"/><stop offset="0.138" stop-color="#698736"/><stop offset="0.207" stop-color="#5d7830"/><stop offset="0.287" stop-color="#4f6629"/><stop offset="0.373" stop-color="#405221"/><stop offset="0.464" stop-color="#2f3d18"/><stop offset="0.556" stop-color="#212a11"/><stop offset="0.646" stop-color="#32411a"/><stop offset="0.731" stop-color="#425622"/><stop offset="0.808" stop-color="#526a2a"/><stop offset="0.875" stop-color="#5f7b31"/><stop offset="0.928" stop-color="#6a8937"/><stop offset="0.967" stop-color="#73943b"/><stop offset="0.989" stop-color="#789c3e"/><stop offset="0.995" stop-color="#7a9e3f"/></linearGradient><linearGradient id="g29" gradientUnits="userSpaceOnUse" x1="341.4" y1="382.6" x2="427.7" y2="371.6"><stop offset="0.006" stop-color="#779a3d"/><stop offset="0.016" stop-color="#7a9e3f"/><stop offset="0.043" stop-color="#7b9e3f"/><stop offset="0.086" stop-color="#789b3e"/><stop offset="0.143" stop-color="#72933b"/><stop offset="0.213" stop-color="#698736"/><stop offset="0.293" stop-color="#5d7830"/><stop offset="0.379" stop-color="#4f6629"/><stop offset="0.470" stop-color="#405221"/><stop offset="0.562" stop-color="#2f3d18"/><stop offset="0.651" stop-color="#212a11"/><stop offset="0.736" stop-color="#32411a"/><stop offset="0.812" stop-color="#425622"/><stop offset="0.878" stop-color="#526a2a"/><stop offset="0.930" stop-color="#5f7b31"/><stop offset="0.968" stop-color="#6a8937"/><stop offset="0.990" stop-color="#73943b"/><stop offset="0.994" stop-color="#779a3d"/></linearGradient><linearGradient id="g30" gradientUnits="userSpaceOnUse" x1="509.2" y1="473.7" x2="599.6" y2="472.2"><stop offset="0.006" stop-color="#799d3f"/><stop offset="0.014" stop-color="#7b9f3f"/><stop offset="0.039" stop-color="#799c3e"/><stop offset="0.081" stop-color="#74963c"/><stop offset="0.137" stop-color="#6c8b38"/><stop offset="0.206" stop-color="#617d32"/><stop offset="0.284" stop-color="#546d2b"/><stop offset="0.370" stop-color="#455924"/><stop offset="0.460" stop-color="#35441b"/><stop offset="0.552" stop-color="#242e12"/><stop offset="0.582" stop-color="#212a11"/><stop offset="0.642" stop-color="#2c3917"/><stop offset="0.727" stop-color="#3d4f1f"/><stop offset="0.804" stop-color="#4d6328"/><stop offset="0.871" stop-color="#5b752f"/><stop offset="0.925" stop-color="#678535"/><stop offset="0.965" stop-color="#70913a"/><stop offset="0.988" stop-color="#779a3d"/><stop offset="0.994" stop-color="#799d3f"/></linearGradient><linearGradient id="g31" gradientUnits="userSpaceOnUse" x1="423.4" y1="427.3" x2="511.7" y2="420.7"><stop offset="0.006" stop-color="#789c3e"/><stop offset="0.015" stop-color="#7b9f3f"/><stop offset="0.042" stop-color="#7a9e3f"/><stop offset="0.085" stop-color="#76983d"/><stop offset="0.142" stop-color="#6f8f39"/><stop offset="0.211" stop-color="#658234"/><stop offset="0.290" stop-color="#59722e"/><stop offset="0.377" stop-color="#4a6026"/><stop offset="0.467" stop-color="#3a4b1e"/><stop offset="0.559" stop-color="#293615"/><stop offset="0.619" stop-color="#212a11"/><stop offset="0.649" stop-color="#273214"/><stop offset="0.733" stop-color="#38481d"/><stop offset="0.810" stop-color="#485d25"/><stop offset="0.876" stop-color="#56702d"/><stop offset="0.929" stop-color="#638033"/><stop offset="0.967" stop-color="#6d8d38"/><stop offset="0.989" stop-color="#75973c"/><stop offset="0.994" stop-color="#789c3e"/></linearGradient><linearGradient id="g32" gradientUnits="userSpaceOnUse" x1="407.4" y1="317.5" x2="491.4" y2="310.7"><stop offset="0.005" stop-color="#789c3e"/><stop offset="0.016" stop-color="#7b9f3f"/><stop offset="0.043" stop-color="#7a9e3f"/><stop offset="0.086" stop-color="#76983d"/><stop offset="0.144" stop-color="#6f8f39"/><stop offset="0.214" stop-color="#658234"/><stop offset="0.294" stop-color="#59722e"/><stop offset="0.381" stop-color="#4a6026"/><stop offset="0.471" stop-color="#3a4b1e"/><stop offset="0.563" stop-color="#293615"/><stop offset="0.623" stop-color="#212a11"/><stop offset="0.653" stop-color="#273214"/><stop offset="0.737" stop-color="#38481d"/><stop offset="0.813" stop-color="#485d25"/><stop offset="0.879" stop-color="#56702d"/><stop offset="0.931" stop-color="#638033"/><stop offset="0.969" stop-color="#6d8d38"/><stop offset="0.990" stop-color="#75973c"/><stop offset="0.995" stop-color="#789c3e"/></linearGradient><linearGradient id="g33" gradientUnits="userSpaceOnUse" x1="573.0" y1="403.6" x2="660.7" y2="405.9"><stop offset="0.005" stop-color="#7a9e3f"/><stop offset="0.014" stop-color="#7b9e3f"/><stop offset="0.040" stop-color="#789b3e"/><stop offset="0.083" stop-color="#72933b"/><stop offset="0.139" stop-color="#698736"/><stop offset="0.208" stop-color="#5d7830"/><stop offset="0.287" stop-color="#4f6629"/><stop offset="0.373" stop-color="#405221"/><stop offset="0.463" stop-color="#2f3d18"/><stop offset="0.555" stop-color="#212a11"/><stop offset="0.645" stop-color="#32411a"/><stop offset="0.730" stop-color="#425622"/><stop offset="0.807" stop-color="#526a2a"/><stop offset="0.873" stop-color="#5f7b31"/><stop offset="0.927" stop-color="#6a8937"/><stop offset="0.966" stop-color="#73943b"/><stop offset="0.989" stop-color="#789c3e"/><stop offset="0.994" stop-color="#7a9e3f"/></linearGradient><linearGradient id="g34" gradientUnits="userSpaceOnUse" x1="488.4" y1="359.7" x2="574.2" y2="357.1"><stop offset="0.005" stop-color="#799d3f"/><stop offset="0.016" stop-color="#7b9f3f"/><stop offset="0.043" stop-color="#799c3e"/><stop offset="0.086" stop-color="#74963c"/><stop offset="0.143" stop-color="#6c8b38"/><stop offset="0.213" stop-color="#617d32"/><stop offset="0.292" stop-color="#546d2b"/><stop offset="0.379" stop-color="#455924"/><stop offset="0.469" stop-color="#35441b"/><stop offset="0.561" stop-color="#242e12"/><stop offset="0.591" stop-color="#212a11"/><stop offset="0.651" stop-color="#2c3917"/><stop offset="0.735" stop-color="#3d4f1f"/><stop offset="0.811" stop-color="#4d6328"/><stop offset="0.877" stop-color="#5b752f"/><stop offset="0.930" stop-color="#678535"/><stop offset="0.968" stop-color="#70913a"/><stop offset="0.990" stop-color="#779a3d"/><stop offset="0.994" stop-color="#799d3f"/></linearGradient><linearGradient id="g35" gradientUnits="userSpaceOnUse" x1="469.6" y1="256.3" x2="551.4" y2="252.9"><stop offset="0.005" stop-color="#799d3f"/><stop offset="0.017" stop-color="#7b9f3f"/><stop offset="0.045" stop-color="#799c3e"/><stop offset="0.089" stop-color="#74963c"/><stop offset="0.147" stop-color="#6c8b38"/><stop offset="0.218" stop-color="#617d32"/><stop offset="0.298" stop-color="#546d2b"/><stop offset="0.385" stop-color="#455924"/><stop offset="0.476" stop-color="#35441b"/><stop offset="0.568" stop-color="#242e12"/><stop offset="0.598" stop-color="#212a11"/><stop offset="0.657" stop-color="#2c3917"/><stop offset="0.741" stop-color="#3d4f1f"/><stop offset="0.817" stop-color="#4d6328"/><stop offset="0.882" stop-color="#5b752f"/><stop offset="0.934" stop-color="#678535"/><stop offset="0.971" stop-color="#70913a"/><stop offset="0.991" stop-color="#779a3d"/><stop offset="0.995" stop-color="#799d3f"/></linearGradient><linearGradient id="g36" gradientUnits="userSpaceOnUse" x1="633.0" y1="337.7" x2="718.1" y2="343.1"><stop offset="0.005" stop-color="#7b9f3f"/><stop offset="0.016" stop-color="#7a9e3f"/><stop offset="0.043" stop-color="#76983d"/><stop offset="0.086" stop-color="#6f8f39"/><stop offset="0.144" stop-color="#658234"/><stop offset="0.214" stop-color="#59722e"/><stop offset="0.293" stop-color="#4a6026"/><stop offset="0.380" stop-color="#3a4b1e"/><stop offset="0.470" stop-color="#293615"/><stop offset="0.532" stop-color="#212a11"/><stop offset="0.562" stop-color="#273214"/><stop offset="0.652" stop-color="#38481d"/><stop offset="0.736" stop-color="#485d25"/><stop offset="0.813" stop-color="#56702d"/><stop offset="0.878" stop-color="#638033"/><stop offset="0.931" stop-color="#6d8d38"/><stop offset="0.969" stop-color="#75973c"/><stop offset="0.990" stop-color="#799d3f"/><stop offset="0.995" stop-color="#7b9f3f"/></linearGradient><linearGradient id="g37" gradientUnits="userSpaceOnUse" x1="549.6" y1="296.2" x2="633.0" y2="297.0"><stop offset="0.006" stop-color="#7a9e3f"/><stop offset="0.017" stop-color="#7b9e3f"/><stop offset="0.045" stop-color="#789b3e"/><stop offset="0.089" stop-color="#72933b"/><stop offset="0.147" stop-color="#698736"/><stop offset="0.217" stop-color="#5d7830"/><stop offset="0.297" stop-color="#4f6629"/><stop offset="0.384" stop-color="#405221"/><stop offset="0.475" stop-color="#2f3d18"/><stop offset="0.567" stop-color="#212a11"/><stop offset="0.656" stop-color="#32411a"/><stop offset="0.740" stop-color="#425622"/><stop offset="0.816" stop-color="#526a2a"/><stop offset="0.881" stop-color="#5f7b31"/><stop offset="0.933" stop-color="#6a8937"/><stop offset="0.970" stop-color="#73943b"/><stop offset="0.991" stop-color="#789c3e"/><stop offset="0.995" stop-color="#7a9e3f"/></linearGradient><linearGradient id="g38" gradientUnits="userSpaceOnUse" x1="607.3" y1="236.4" x2="688.4" y2="239.9"><stop offset="0.006" stop-color="#7b9f3f"/><stop offset="0.018" stop-color="#7a9e3f"/><stop offset="0.048" stop-color="#76983d"/><stop offset="0.093" stop-color="#6f8f39"/><stop offset="0.153" stop-color="#658234"/><stop offset="0.224" stop-color="#59722e"/><stop offset="0.305" stop-color="#4a6026"/><stop offset="0.392" stop-color="#3a4b1e"/><stop offset="0.484" stop-color="#293615"/><stop offset="0.545" stop-color="#212a11"/><stop offset="0.575" stop-color="#273214"/><stop offset="0.664" stop-color="#38481d"/><stop offset="0.748" stop-color="#485d25"/><stop offset="0.823" stop-color="#56702d"/><stop offset="0.887" stop-color="#638033"/><stop offset="0.938" stop-color="#6d8d38"/><stop offset="0.973" stop-color="#75973c"/><stop offset="0.992" stop-color="#799d3f"/><stop offset="0.995" stop-color="#7b9f3f"/></linearGradient><linearGradient id="g39" gradientUnits="userSpaceOnUse" x1="528.4" y1="198.6" x2="608.0" y2="198.2"><stop offset="0.006" stop-color="#7a9e3f"/><stop offset="0.018" stop-color="#7b9e3f"/><stop offset="0.048" stop-color="#789b3e"/><stop offset="0.093" stop-color="#72933b"/><stop offset="0.153" stop-color="#698736"/><stop offset="0.224" stop-color="#5d7830"/><stop offset="0.305" stop-color="#4f6629"/><stop offset="0.393" stop-color="#405221"/><stop offset="0.484" stop-color="#2f3d18"/><stop offset="0.576" stop-color="#212a11"/><stop offset="0.665" stop-color="#32411a"/><stop offset="0.748" stop-color="#425622"/><stop offset="0.823" stop-color="#526a2a"/><stop offset="0.887" stop-color="#5f7b31"/><stop offset="0.938" stop-color="#6a8937"/><stop offset="0.973" stop-color="#73943b"/><stop offset="0.992" stop-color="#789c3e"/><stop offset="0.995" stop-color="#7a9e3f"/></linearGradient><linearGradient id="g40" gradientUnits="userSpaceOnUse" x1="689.5" y1="275.7" x2="772.2" y2="283.6"><stop offset="0.006" stop-color="#7b9f3f"/><stop offset="0.018" stop-color="#799c3e"/><stop offset="0.047" stop-color="#74963c"/><stop offset="0.092" stop-color="#6c8b38"/><stop offset="0.151" stop-color="#617d32"/><stop offset="0.222" stop-color="#546d2b"/><stop offset="0.302" stop-color="#455924"/><stop offset="0.390" stop-color="#35441b"/><stop offset="0.481" stop-color="#242e12"/><stop offset="0.511" stop-color="#212a11"/><stop offset="0.572" stop-color="#2c3917"/><stop offset="0.662" stop-color="#3d4f1f"/><stop offset="0.745" stop-color="#4d6328"/><stop offset="0.821" stop-color="#5b752f"/><stop offset="0.885" stop-color="#678535"/><stop offset="0.936" stop-color="#70913a"/><stop offset="0.972" stop-color="#779a3d"/><stop offset="0.992" stop-color="#7a9e3f"/><stop offset="0.995" stop-color="#7b9f3f"/></linearGradient><linearGradient id="g41" gradientUnits="userSpaceOnUse" x1="661.9" y1="180.0" x2="740.8" y2="185.7"><stop offset="0.005" stop-color="#7b9f3f"/><stop offset="0.014" stop-color="#7a9e3f"/><stop offset="0.040" stop-color="#76983d"/><stop offset="0.083" stop-color="#6f8f39"/><stop offset="0.139" stop-color="#658234"/><stop offset="0.208" stop-color="#59722e"/><stop offset="0.287" stop-color="#4a6026"/><stop offset="0.374" stop-color="#3a4b1e"/><stop offset="0.464" stop-color="#293615"/><stop offset="0.526" stop-color="#212a11"/><stop offset="0.556" stop-color="#273214"/><stop offset="0.646" stop-color="#38481d"/><stop offset="0.731" stop-color="#485d25"/><stop offset="0.809" stop-color="#56702d"/><stop offset="0.875" stop-color="#638033"/><stop offset="0.929" stop-color="#6d8d38"/><stop offset="0.967" stop-color="#75973c"/><stop offset="0.989" stop-color="#799d3f"/><stop offset="0.995" stop-color="#7b9f3f"/></linearGradient><linearGradient id="g42" gradientUnits="userSpaceOnUse" x1="742.8" y1="217.3" x2="823.2" y2="227.2"><stop offset="0.005" stop-color="#7b9f3f"/><stop offset="0.014" stop-color="#799c3e"/><stop offset="0.040" stop-color="#74963c"/><stop offset="0.082" stop-color="#6c8b38"/><stop offset="0.138" stop-color="#617d32"/><stop offset="0.207" stop-color="#546d2b"/><stop offset="0.286" stop-color="#455924"/><stop offset="0.372" stop-color="#35441b"/><stop offset="0.463" stop-color="#242e12"/><stop offset="0.494" stop-color="#212a11"/><stop offset="0.555" stop-color="#2c3917"/><stop offset="0.645" stop-color="#3d4f1f"/><stop offset="0.730" stop-color="#4d6328"/><stop offset="0.807" stop-color="#5b752f"/><stop offset="0.874" stop-color="#678535"/><stop offset="0.928" stop-color="#70913a"/><stop offset="0.967" stop-color="#779a3d"/><stop offset="0.989" stop-color="#7a9e3f"/><stop offset="0.995" stop-color="#7b9f3f"/></linearGradient><linearGradient id="g43" gradientUnits="userSpaceOnUse" x1="599.1" y1="522.5" x2="691.4" y2="527.1"><stop offset="0.006" stop-color="#7a9e3f"/><stop offset="0.012" stop-color="#7b9e3f"/><stop offset="0.036" stop-color="#789b3e"/><stop offset="0.075" stop-color="#72933b"/><stop offset="0.130" stop-color="#698736"/><stop offset="0.197" stop-color="#5d7830"/><stop offset="0.274" stop-color="#4f6629"/><stop offset="0.359" stop-color="#405221"/><stop offset="0.449" stop-color="#2f3d18"/><stop offset="0.540" stop-color="#212a11"/><stop offset="0.631" stop-color="#32411a"/><stop offset="0.716" stop-color="#425622"/><stop offset="0.795" stop-color="#526a2a"/><stop offset="0.863" stop-color="#5f7b31"/><stop offset="0.919" stop-color="#6a8937"/><stop offset="0.961" stop-color="#73943b"/><stop offset="0.986" stop-color="#789c3e"/><stop offset="0.994" stop-color="#7b9f3f"/></linearGradient><linearGradient id="g44" gradientUnits="userSpaceOnUse" x1="661.5" y1="449.6" x2="751.0" y2="457.6"><stop offset="0.006" stop-color="#7b9f3f"/><stop offset="0.013" stop-color="#7a9e3f"/><stop offset="0.037" stop-color="#76983d"/><stop offset="0.078" stop-color="#6f8f39"/><stop offset="0.133" stop-color="#658234"/><stop offset="0.200" stop-color="#59722e"/><stop offset="0.278" stop-color="#4a6026"/><stop offset="0.364" stop-color="#3a4b1e"/><stop offset="0.454" stop-color="#293615"/><stop offset="0.515" stop-color="#212a11"/><stop offset="0.545" stop-color="#273214"/><stop offset="0.635" stop-color="#38481d"/><stop offset="0.721" stop-color="#485d25"/><stop offset="0.799" stop-color="#56702d"/><stop offset="0.867" stop-color="#638033"/><stop offset="0.922" stop-color="#6d8d38"/><stop offset="0.963" stop-color="#75973c"/><stop offset="0.987" stop-color="#799d3f"/><stop offset="0.994" stop-color="#7b9f3f"/></linearGradient><linearGradient id="g45" gradientUnits="userSpaceOnUse" x1="720.1" y1="380.8" x2="806.8" y2="391.5"><stop offset="0.005" stop-color="#7b9f3f"/><stop offset="0.014" stop-color="#799c3e"/><stop offset="0.040" stop-color="#74963c"/><stop offset="0.082" stop-color="#6c8b38"/><stop offset="0.139" stop-color="#617d32"/><stop offset="0.207" stop-color="#546d2b"/><stop offset="0.286" stop-color="#455924"/><stop offset="0.372" stop-color="#35441b"/><stop offset="0.463" stop-color="#242e12"/><stop offset="0.493" stop-color="#212a11"/><stop offset="0.554" stop-color="#2c3917"/><stop offset="0.644" stop-color="#3d4f1f"/><stop offset="0.729" stop-color="#4d6328"/><stop offset="0.807" stop-color="#5b752f"/><stop offset="0.873" stop-color="#678535"/><stop offset="0.927" stop-color="#70913a"/><stop offset="0.966" stop-color="#779a3d"/><stop offset="0.989" stop-color="#7a9e3f"/><stop offset="0.994" stop-color="#7b9f3f"/></linearGradient><linearGradient id="g46" gradientUnits="userSpaceOnUse" x1="775.2" y1="316.5" x2="859.3" y2="329.4"><stop offset="0.006" stop-color="#7b9e3f"/><stop offset="0.017" stop-color="#789b3e"/><stop offset="0.045" stop-color="#72933b"/><stop offset="0.089" stop-color="#698736"/><stop offset="0.147" stop-color="#5d7830"/><stop offset="0.218" stop-color="#4f6629"/><stop offset="0.297" stop-color="#405221"/><stop offset="0.384" stop-color="#2f3d18"/><stop offset="0.475" stop-color="#212a11"/><stop offset="0.567" stop-color="#32411a"/><stop offset="0.656" stop-color="#425622"/><stop offset="0.741" stop-color="#526a2a"/><stop offset="0.817" stop-color="#5f7b31"/><stop offset="0.882" stop-color="#6a8937"/><stop offset="0.934" stop-color="#73943b"/><stop offset="0.971" stop-color="#789c3e"/><stop offset="0.991" stop-color="#7b9f3f"/><stop offset="0.995" stop-color="#7b9e3f"/></linearGradient><linearGradient id="g47" gradientUnits="userSpaceOnUse" x1="827.2" y1="255.9" x2="908.8" y2="270.5"><stop offset="0.005" stop-color="#7b9e3f"/><stop offset="0.013" stop-color="#789b3e"/><stop offset="0.039" stop-color="#72933b"/><stop offset="0.080" stop-color="#698736"/><stop offset="0.136" stop-color="#5d7830"/><stop offset="0.204" stop-color="#4f6629"/><stop offset="0.283" stop-color="#405221"/><stop offset="0.369" stop-color="#2f3d18"/><stop offset="0.459" stop-color="#212a11"/><stop offset="0.551" stop-color="#32411a"/><stop offset="0.641" stop-color="#425622"/><stop offset="0.727" stop-color="#526a2a"/><stop offset="0.804" stop-color="#5f7b31"/><stop offset="0.872" stop-color="#6a8937"/><stop offset="0.926" stop-color="#73943b"/><stop offset="0.965" stop-color="#789c3e"/><stop offset="0.989" stop-color="#7b9f3f"/><stop offset="0.994" stop-color="#7b9e3f"/></linearGradient></defs>
<path fill="url(#g10)" d="M562.6 75.2L562.7 73.6L562.9 72.1L563.2 70.5L563.7 69.0L564.4 67.5L565.2 66.0L566.1 64.6L567.1 63.2L568.3 61.9L569.6 60.6L569.7 93.7L568.4 95.0L567.3 96.3L566.3 97.7L565.4 99.1L564.6 100.5L564 102.0L563.5 103.6L563.2 105.1L562.9 106.6L562.9 108.2Z"/>
<path fill="url(#g11)" d="M497.9 68.6L499.7 69.5L501.4 70.6L503 71.6L504.5 72.8L505.9 74.0L507.2 75.3L508.3 76.6L509.4 78.0L510.3 79.5L511 80.9L511.6 82.4L512.1 84.0L512.5 85.5L512.6 87.1L513.8 120.1L513.6 118.6L513.3 117.0L512.8 115.5L512.2 114.0L511.5 112.5L510.6 111.1L509.6 109.7L508.5 108.3L507.2 107.1L505.8 105.8L504.4 104.7L502.8 103.6L501.1 102.6L499.3 101.6Z"/>
<path fill="url(#g9)" d="M635.8 108.7L636 107.1L636.3 105.5L636.8 103.9L637.3 102.3L638.1 100.8L639 99.4L640 97.9L641.1 96.5L642.4 95.2L641.2 128.2L639.9 129.5L638.8 130.9L637.8 132.3L637 133.8L636.2 135.3L635.7 136.9L635.2 138.4L634.9 140.0L634.8 141.6Z"/>
<path fill="url(#g27)" d="M509.5 126.4L509.4 124.8L509.5 123.1L509.8 121.5L510.2 119.9L510.8 118.3L511.5 116.7L512.3 115.2L513.3 113.7L514.4 112.2L515.6 110.8L517 109.5L518.4 108.2L520 107.0L521.7 105.8L523.5 104.7L525.4 103.7L527.4 102.8L529.4 102.0L531.5 101.3L533.7 100.6L535.9 100.1L538.2 99.6L540.5 99.2L542.8 99.0L545.2 98.8L547.5 98.7L549.9 98.8L552.2 98.9L554.6 99.1L556.9 99.5L559.1 99.9L561.4 100.4L563.5 101.1L565.7 101.8L567.7 102.6L569.7 103.5L571.5 104.5L573.3 105.5L575 106.6L576.6 107.8L578.1 109.1L579.4 110.4L580.6 111.8L581.7 113.3L582.7 114.7L583.5 116.3L584.2 117.8L584.8 119.4L585.2 121.0L585.4 122.7L585.5 124.3L585.4 157.2L585.3 155.6L585 154.0L584.6 152.4L584.1 150.8L583.4 149.2L582.6 147.7L581.7 146.2L580.6 144.8L579.4 143.4L578 142.1L576.6 140.8L575.1 139.6L573.4 138.5L571.6 137.4L569.8 136.5L567.9 135.6L565.9 134.8L563.8 134.1L561.7 133.4L559.5 132.9L557.3 132.5L555 132.1L552.7 131.9L550.4 131.8L548.1 131.7L545.8 131.8L543.5 132.0L541.2 132.2L538.9 132.6L536.7 133.0L534.5 133.6L532.4 134.2L530.3 135.0L528.3 135.8L526.4 136.7L524.5 137.7L522.8 138.8L521.1 139.9L519.5 141.2L518.1 142.4L516.8 143.8L515.5 145.2L514.5 146.6L513.5 148.1L512.7 149.7L512 151.2L511.5 152.8L511.1 154.4L510.8 156.1L510.7 157.7L510.7 159.3Z"/>
<path fill="url(#g12)" d="M443.2 117.9L445 118.8L446.7 119.9L448.4 121.1L449.9 122.3L451.3 123.6L452.6 124.9L453.7 126.3L454.7 127.8L455.6 129.3L456.3 130.8L456.9 132.4L457.4 134.0L457.7 135.7L457.8 137.3L460.1 170.2L459.9 168.6L459.6 167.0L459.2 165.3L458.6 163.8L457.9 162.2L457 160.7L456 159.3L454.9 157.9L453.6 156.5L452.3 155.2L450.8 154.0L449.2 152.9L447.5 151.8L445.7 150.8Z"/>
<path fill="url(#g8)" d="M711.8 143.4L712.1 141.7L712.5 140.1L713 138.5L713.7 136.9L714.5 135.4L715.5 133.9L716.6 132.5L717.8 131.1L715.2 164.0L714 165.4L712.9 166.8L711.9 168.3L711.1 169.8L710.5 171.4L709.9 173.0L709.5 174.6L709.3 176.3Z"/>
<path fill="url(#g28)" d="M583.6 161.7L583.6 160.0L583.8 158.3L584.2 156.7L584.7 155.0L585.3 153.4L586.1 151.8L587.1 150.2L588.1 148.7L589.3 147.3L590.7 145.9L592.1 144.5L593.7 143.3L595.4 142.1L597.2 141.0L599 139.9L601 139.0L603.1 138.1L605.2 137.3L607.4 136.7L609.6 136.1L611.9 135.6L614.2 135.2L616.6 135.0L619 134.8L621.4 134.7L623.8 134.8L626.2 134.9L628.6 135.2L630.9 135.5L633.3 135.9L635.6 136.5L637.8 137.1L640 137.9L642.1 138.7L644.1 139.6L646.1 140.7L647.9 141.8L649.7 142.9L651.3 144.2L652.9 145.5L654.3 146.9L655.6 148.3L656.8 149.8L657.8 151.3L658.7 152.9L659.5 154.5L660.1 156.2L660.6 157.9L660.9 159.6L661.1 161.3L661.1 163.0L659.5 195.8L659.5 194.1L659.3 192.4L659 190.7L658.5 189.0L657.9 187.4L657.2 185.8L656.3 184.2L655.3 182.7L654.1 181.2L652.9 179.7L651.5 178.4L649.9 177.1L648.3 175.8L646.6 174.6L644.8 173.6L642.9 172.6L640.9 171.6L638.8 170.8L636.7 170.1L634.5 169.4L632.2 168.9L629.9 168.4L627.6 168.1L625.3 167.8L622.9 167.7L620.6 167.6L618.2 167.7L615.9 167.9L613.6 168.2L611.3 168.5L609 169.0L606.8 169.6L604.7 170.3L602.6 171.0L600.6 171.9L598.6 172.8L596.8 173.9L595 175.0L593.4 176.2L591.8 177.4L590.4 178.7L589.1 180.1L587.9 181.6L586.9 183.1L586 184.6L585.2 186.2L584.5 187.9L584.1 189.5L583.7 191.2L583.5 192.9L583.5 194.6Z"/>
<path fill="url(#g26)" d="M453.4 178.7L453.4 177.0L453.6 175.3L453.9 173.5L454.4 171.8L455 170.1L455.7 168.5L456.6 166.9L457.7 165.3L458.9 163.8L460.2 162.3L461.6 160.9L463.2 159.5L464.8 158.2L466.6 157.0L468.5 155.9L470.4 154.8L472.5 153.9L474.6 153.0L476.8 152.2L479 151.5L481.3 151.0L483.7 150.5L486.1 150.1L488.5 149.8L490.9 149.6L493.3 149.6L495.7 149.6L498.1 149.8L500.5 150.0L502.9 150.4L505.2 150.8L507.4 151.4L509.6 152.0L511.8 152.8L513.9 153.6L515.8 154.6L517.7 155.6L519.5 156.7L521.2 157.9L522.8 159.2L524.3 160.5L525.7 161.9L526.9 163.4L528 164.9L528.9 166.4L529.7 168.0L530.4 169.7L530.9 171.4L531.3 173.1L531.5 174.8L531.5 176.5L532.4 209.3L532.4 207.6L532.2 205.9L531.8 204.2L531.3 202.5L530.6 200.9L529.8 199.3L528.9 197.7L527.8 196.2L526.6 194.7L525.3 193.3L523.9 192.0L522.3 190.7L520.6 189.6L518.9 188.4L517 187.4L515.1 186.5L513 185.6L510.9 184.9L508.8 184.2L506.5 183.7L504.3 183.2L502 182.9L499.6 182.6L497.3 182.5L494.9 182.4L492.5 182.5L490.1 182.7L487.8 183.0L485.5 183.3L483.2 183.8L480.9 184.4L478.7 185.1L476.5 185.9L474.5 186.7L472.5 187.7L470.5 188.7L468.7 189.9L467 191.1L465.3 192.4L463.8 193.7L462.4 195.1L461.1 196.6L460 198.1L459 199.7L458.1 201.3L457.3 203.0L456.7 204.6L456.3 206.3L456 208.0L455.8 209.8L455.8 211.5Z"/>
<path fill="url(#g7)" d="M790.7 179.3L791 177.6L791.5 176.0L792.1 174.3L792.9 172.7L793.9 171.2L794.9 169.7L796.1 168.3L791.9 201.1L790.8 202.5L789.7 204.0L788.8 205.5L788 207.1L787.4 208.7L786.9 210.4L786.6 212.1Z"/>
<path fill="url(#g13)" d="M385.7 169.7L387.5 170.7L389.2 171.9L390.9 173.1L392.4 174.4L393.8 175.7L395.1 177.1L396.2 178.6L397.2 180.2L398 181.8L398.8 183.4L399.3 185.1L399.7 186.8L400 188.5L403.4 221.2L403.2 219.5L402.8 217.8L402.2 216.2L401.5 214.5L400.7 212.9L399.7 211.4L398.6 209.9L397.3 208.5L395.9 207.2L394.5 205.9L392.8 204.7L391.1 203.6L389.3 202.5Z"/>
<path fill="url(#g41)" d="M660.5 198.3L660.7 196.6L661 194.8L661.4 193.1L662 191.4L662.8 189.8L663.7 188.2L664.7 186.6L665.9 185.1L667.2 183.6L668.6 182.2L670.1 180.9L671.8 179.7L673.6 178.5L675.5 177.5L677.4 176.5L679.5 175.6L681.6 174.8L683.8 174.1L686.1 173.5L688.4 173.0L690.8 172.6L693.2 172.3L695.6 172.1L698 172.1L700.5 172.1L702.9 172.3L705.4 172.5L707.8 172.9L710.2 173.3L712.5 173.9L714.8 174.6L717.1 175.3L719.3 176.2L721.4 177.2L723.4 178.2L725.3 179.4L727.2 180.6L728.9 181.9L730.5 183.2L732 184.7L733.4 186.2L734.7 187.7L735.8 189.3L736.8 191.0L737.6 192.6L738.3 194.4L738.9 196.1L739.3 197.8L739.5 199.6L739.6 201.4L739.5 203.1L736.4 235.8L736.4 234.1L736.4 232.3L736.1 230.6L735.7 228.8L735.2 227.1L734.5 225.4L733.7 223.7L732.7 222.1L731.6 220.5L730.4 218.9L729.1 217.4L727.6 216.0L726 214.6L724.3 213.4L722.5 212.1L720.6 211.0L718.6 210.0L716.5 209.0L714.4 208.1L712.2 207.4L709.9 206.7L707.6 206.1L705.3 205.7L702.9 205.3L700.5 205.1L698.1 204.9L695.7 204.9L693.3 204.9L691 205.1L688.6 205.4L686.3 205.8L684 206.3L681.8 206.9L679.6 207.6L677.5 208.4L675.5 209.3L673.6 210.2L671.7 211.3L670 212.5L668.4 213.7L666.8 215.0L665.4 216.4L664.2 217.8L663 219.3L662 220.9L661.1 222.5L660.4 224.2L659.8 225.8L659.3 227.6L659.1 229.3L658.9 231.0Z"/>
<path fill="url(#g39)" d="M528.5 215.9L528.6 214.1L528.8 212.4L529.3 210.6L529.8 208.8L530.5 207.1L531.4 205.4L532.4 203.8L533.5 202.2L534.8 200.7L536.2 199.2L537.8 197.8L539.4 196.5L541.2 195.2L543 194.0L545 192.9L547 191.9L549.2 191.0L551.4 190.2L553.6 189.5L556 188.9L558.3 188.4L560.7 188.0L563.2 187.7L565.6 187.5L568.1 187.5L570.5 187.5L573 187.7L575.4 187.9L577.9 188.3L580.2 188.8L582.6 189.3L584.8 190.0L587.1 190.8L589.2 191.7L591.3 192.7L593.2 193.7L595.1 194.9L596.9 196.1L598.6 197.4L600.1 198.8L601.5 200.3L602.8 201.8L604 203.4L605 205.0L605.9 206.7L606.7 208.4L607.2 210.1L607.7 211.9L608 213.6L608.1 215.4L608.1 217.2L607.5 249.9L607.5 248.1L607.4 246.3L607.1 244.5L606.7 242.8L606.1 241.0L605.4 239.3L604.5 237.7L603.5 236.1L602.3 234.5L601.1 233.0L599.7 231.5L598.1 230.1L596.5 228.8L594.8 227.6L592.9 226.5L591 225.4L589 224.4L586.9 223.5L584.7 222.8L582.5 222.1L580.2 221.5L577.8 221.0L575.5 220.7L573.1 220.4L570.7 220.3L568.3 220.2L565.8 220.3L563.4 220.5L561 220.8L558.7 221.2L556.4 221.7L554.1 222.3L551.9 223.0L549.7 223.8L547.6 224.7L545.6 225.7L543.7 226.8L541.9 227.9L540.1 229.2L538.5 230.5L537 231.9L535.6 233.4L534.4 234.9L533.3 236.5L532.3 238.1L531.5 239.8L530.8 241.5L530.2 243.3L529.8 245.0L529.5 246.8L529.5 248.6Z"/>
<path fill="url(#g6)" d="M872.6 216.6L873 214.9L873.6 213.2L874.3 211.5L875.2 209.9L876.2 208.4L877.4 206.9L871.6 239.6L870.4 241.1L869.4 242.6L868.5 244.2L867.8 245.8L867.2 247.5L866.8 249.2Z"/>
<path fill="url(#g25)" d="M394.4 235.7L394.3 233.8L394.4 232.0L394.6 230.2L395 228.4L395.5 226.6L396.2 224.8L397 223.1L398 221.4L399.1 219.7L400.4 218.1L401.8 216.5L403.3 215.0L404.9 213.6L406.7 212.3L408.5 211.0L410.5 209.8L412.5 208.7L414.6 207.7L416.8 206.7L419.1 205.9L421.4 205.2L423.8 204.6L426.2 204.1L428.7 203.7L431.2 203.4L433.7 203.2L436.1 203.1L438.6 203.2L441.1 203.3L443.5 203.6L445.9 203.9L448.3 204.4L450.6 205.0L452.9 205.7L455 206.5L457.1 207.4L459.2 208.4L461.1 209.5L462.9 210.6L464.6 211.9L466.2 213.2L467.7 214.6L469 216.1L470.2 217.6L471.3 219.2L472.2 220.9L473 222.6L473.7 224.3L474.1 226.1L474.5 227.9L474.6 229.7L476.7 262.3L476.5 260.5L476.2 258.7L475.7 256.9L475.1 255.2L474.3 253.5L473.4 251.9L472.3 250.3L471.1 248.8L469.8 247.3L468.4 245.9L466.8 244.6L465.1 243.3L463.3 242.1L461.5 241.1L459.5 240.1L457.4 239.2L455.3 238.4L453.1 237.7L450.8 237.1L448.5 236.6L446.1 236.3L443.7 236.0L441.3 235.9L438.9 235.8L436.4 235.9L434 236.1L431.6 236.4L429.2 236.8L426.8 237.3L424.5 237.9L422.2 238.6L420 239.4L417.8 240.3L415.7 241.3L413.7 242.5L411.8 243.6L410 244.9L408.3 246.3L406.7 247.7L405.2 249.2L403.8 250.7L402.6 252.3L401.5 254.0L400.6 255.7L399.8 257.4L399.1 259.2L398.6 261.0L398.2 262.8L398 264.6L397.9 266.4L398 268.2Z"/>
<path fill="url(#g42)" d="M740.5 236.3L740.7 234.5L741.1 232.7L741.7 230.9L742.4 229.2L743.2 227.5L744.2 225.9L745.3 224.4L746.6 222.8L748 221.4L749.5 220.0L751.2 218.8L752.9 217.6L754.8 216.4L756.8 215.4L758.8 214.5L761 213.7L763.2 212.9L765.5 212.3L767.8 211.8L770.2 211.4L772.6 211.1L775.1 210.9L777.6 210.8L780.1 210.9L782.6 211.0L785.1 211.3L787.6 211.7L790 212.2L792.4 212.7L794.8 213.4L797.1 214.2L799.4 215.1L801.6 216.1L803.7 217.2L805.7 218.4L807.6 219.7L809.5 221.0L811.2 222.4L812.8 223.9L814.2 225.5L815.6 227.1L816.8 228.7L817.9 230.5L818.8 232.2L819.6 234.0L820.2 235.8L820.7 237.6L821 239.4L821.1 241.3L821.1 243.1L821 245.0L816.1 277.5L816.3 275.7L816.3 273.8L816.2 272.0L815.9 270.2L815.4 268.3L814.8 266.6L814 264.8L813.1 263.0L812.1 261.3L810.9 259.7L809.6 258.1L808.1 256.5L806.6 255.1L804.9 253.6L803.1 252.3L801.2 251.0L799.3 249.9L797.2 248.8L795 247.8L792.8 246.9L790.6 246.1L788.2 245.4L785.9 244.8L783.5 244.3L781 244.0L778.6 243.7L776.1 243.5L773.7 243.5L771.3 243.6L768.8 243.8L766.5 244.1L764.1 244.5L761.8 245.0L759.6 245.6L757.4 246.3L755.3 247.1L753.3 248.1L751.3 249.1L749.5 250.2L747.8 251.4L746.2 252.7L744.7 254.0L743.3 255.5L742 257.0L740.9 258.5L739.9 260.1L739.1 261.8L738.4 263.5L737.9 265.3L737.5 267.0L737.3 268.9Z"/>
<path fill="url(#g14)" d="M325 224.4L326.9 225.4L328.6 226.6L330.3 227.9L331.8 229.3L333.2 230.7L334.4 232.2L335.6 233.8L336.5 235.4L337.4 237.1L338.1 238.8L338.6 240.5L338.9 242.3L343.7 274.9L343.3 273.1L342.8 271.3L342.1 269.6L341.3 267.9L340.3 266.3L339.2 264.8L338 263.3L336.6 261.9L335.1 260.5L333.5 259.2L331.8 258.1L330 257.0Z"/>
<path fill="url(#g38)" d="M606.5 254.6L606.7 252.7L607.1 250.9L607.6 249.0L608.2 247.3L609.1 245.5L610 243.8L611.1 242.2L612.4 240.6L613.7 239.0L615.2 237.6L616.9 236.2L618.6 234.9L620.5 233.7L622.4 232.5L624.5 231.5L626.6 230.5L628.8 229.7L631.1 229.0L633.4 228.3L635.8 227.8L638.3 227.4L640.8 227.1L643.2 226.9L645.8 226.8L648.3 226.9L650.8 227.0L653.3 227.3L655.7 227.7L658.2 228.2L660.6 228.8L662.9 229.5L665.2 230.3L667.4 231.2L669.6 232.2L671.6 233.3L673.6 234.5L675.5 235.8L677.2 237.2L678.8 238.6L680.4 240.1L681.7 241.7L683 243.3L684.1 245.0L685.1 246.8L685.9 248.5L686.6 250.4L687.1 252.2L687.4 254.0L687.6 255.9L687.7 257.8L687.6 259.6L685.4 292.1L685.5 290.2L685.4 288.4L685.2 286.5L684.9 284.7L684.4 282.8L683.7 281.0L682.9 279.3L682 277.6L680.9 275.9L679.7 274.2L678.3 272.7L676.8 271.2L675.2 269.7L673.5 268.4L671.7 267.1L669.8 265.9L667.8 264.8L665.7 263.8L663.5 262.9L661.3 262.1L659 261.4L656.6 260.8L654.2 260.3L651.8 259.9L649.3 259.6L646.9 259.5L644.4 259.4L642 259.5L639.5 259.7L637.1 260.0L634.7 260.4L632.3 260.9L630 261.6L627.8 262.3L625.6 263.1L623.5 264.1L621.5 265.1L619.6 266.2L617.8 267.4L616.1 268.7L614.5 270.1L613 271.6L611.7 273.1L610.5 274.7L609.4 276.3L608.4 278.0L607.6 279.8L607 281.5L606.5 283.3L606.1 285.2L606 287.0Z"/>
<path fill="url(#g5)" d="M957.7 255.3L958.2 253.6L958.9 251.8L959.7 250.2L960.7 248.6L961.9 247.0L954.2 279.5L953.1 281.1L952.1 282.7L951.3 284.3L950.6 286.0L950.1 287.8Z"/>
<path fill="url(#g35)" d="M470.4 275.0L470.4 273.1L470.5 271.2L470.8 269.4L471.3 267.5L471.9 265.6L472.7 263.8L473.7 262.1L474.7 260.3L476 258.7L477.3 257.0L478.8 255.5L480.4 254.0L482.1 252.6L484 251.3L485.9 250.0L488 248.9L490.1 247.8L492.3 246.9L494.6 246.0L497 245.3L499.4 244.6L501.8 244.1L504.3 243.7L506.8 243.4L509.3 243.2L511.9 243.1L514.4 243.1L516.9 243.3L519.4 243.6L521.9 244.0L524.3 244.5L526.7 245.1L529 245.8L531.3 246.6L533.4 247.5L535.5 248.6L537.5 249.7L539.4 250.9L541.2 252.2L542.9 253.6L544.4 255.1L545.9 256.6L547.2 258.2L548.3 259.9L549.3 261.6L550.2 263.3L550.9 265.1L551.5 267.0L551.9 268.8L552.1 270.7L552.2 272.6L552.7 305.0L552.6 303.1L552.4 301.2L552 299.4L551.4 297.6L550.7 295.8L549.9 294.0L548.9 292.3L547.8 290.7L546.5 289.1L545.1 287.5L543.6 286.1L541.9 284.7L540.2 283.4L538.3 282.2L536.4 281.1L534.3 280.0L532.2 279.1L530 278.3L527.7 277.6L525.4 277.0L523 276.5L520.6 276.1L518.1 275.8L515.6 275.7L513.2 275.6L510.7 275.7L508.2 275.9L505.7 276.2L503.3 276.6L500.9 277.1L498.6 277.8L496.3 278.5L494 279.4L491.8 280.3L489.8 281.4L487.8 282.5L485.8 283.8L484 285.1L482.3 286.5L480.8 287.9L479.3 289.5L478 291.1L476.8 292.8L475.7 294.5L474.8 296.3L474.1 298.1L473.4 299.9L473 301.8L472.7 303.6L472.5 305.5L472.5 307.4Z"/>
<path fill="url(#g47)" d="M823.6 275.7L823.9 273.8L824.4 272.0L825.1 270.2L825.9 268.5L826.8 266.8L827.9 265.2L829.1 263.6L830.5 262.1L832 260.7L833.6 259.3L835.4 258.1L837.2 256.9L839.2 255.9L841.3 254.9L843.4 254.0L845.7 253.3L848 252.6L850.3 252.1L852.8 251.7L855.2 251.4L857.7 251.2L860.3 251.1L862.8 251.2L865.4 251.3L867.9 251.6L870.5 252.0L873 252.5L875.5 253.1L877.9 253.8L880.3 254.7L882.6 255.6L884.9 256.6L887.1 257.8L889.2 259.0L891.2 260.3L893.2 261.7L895 263.2L896.6 264.7L898.2 266.3L899.6 268.0L901 269.7L902.1 271.5L903.1 273.3L904 275.2L904.7 277.1L905.3 279.0L905.7 280.9L905.9 282.8L906 284.7L905.9 286.6L905.6 288.5L899 320.8L899.2 318.9L899.3 317.0L899.3 315.1L899 313.2L898.7 311.3L898.1 309.4L897.4 307.5L896.6 305.7L895.6 303.9L894.5 302.1L893.2 300.4L891.8 298.7L890.3 297.1L888.6 295.6L886.8 294.1L885 292.7L883 291.4L880.9 290.2L878.8 289.1L876.6 288.1L874.3 287.1L871.9 286.3L869.5 285.6L867.1 285.0L864.6 284.5L862.1 284.1L859.6 283.8L857.1 283.6L854.6 283.6L852.2 283.7L849.7 283.9L847.3 284.2L844.9 284.6L842.6 285.1L840.3 285.8L838.1 286.5L836 287.4L834 288.3L832.1 289.4L830.2 290.6L828.5 291.8L826.9 293.1L825.5 294.5L824.1 296.0L822.9 297.6L821.8 299.2L820.9 300.9L820.1 302.6L819.5 304.4L819 306.2L818.7 308.1Z"/>
<path fill="url(#g24)" d="M332.2 295.9L332 294.0L332 292.1L332.1 290.1L332.4 288.2L332.8 286.3L333.4 284.4L334.2 282.5L335.1 280.7L336.1 278.9L337.3 277.1L338.7 275.4L340.1 273.8L341.7 272.2L343.5 270.7L345.3 269.2L347.2 267.9L349.3 266.6L351.4 265.5L353.6 264.4L355.9 263.4L358.3 262.6L360.7 261.8L363.2 261.1L365.7 260.6L368.2 260.2L370.7 259.9L373.3 259.7L375.9 259.6L378.4 259.6L380.9 259.8L383.4 260.1L385.9 260.5L388.3 261.0L390.7 261.6L393 262.3L395.2 263.2L397.3 264.1L399.3 265.2L401.3 266.3L403.1 267.5L404.8 268.9L406.4 270.3L407.9 271.8L409.3 273.3L410.5 274.9L411.5 276.6L412.4 278.4L413.2 280.2L413.8 282.0L414.2 283.9L414.5 285.8L417.8 318.1L417.5 316.2L417.1 314.3L416.5 312.5L415.7 310.7L414.8 309.0L413.8 307.3L412.6 305.7L411.3 304.1L409.9 302.7L408.3 301.3L406.6 299.9L404.8 298.7L402.9 297.6L400.9 296.5L398.8 295.6L396.6 294.8L394.4 294.0L392.1 293.4L389.7 292.9L387.3 292.5L384.9 292.3L382.4 292.1L379.9 292.1L377.4 292.1L374.9 292.3L372.4 292.6L369.9 293.1L367.4 293.6L365 294.2L362.7 295.0L360.4 295.9L358.1 296.8L355.9 297.9L353.8 299.1L351.8 300.3L349.9 301.6L348.1 303.1L346.5 304.6L344.9 306.1L343.5 307.8L342.1 309.5L341 311.2L339.9 313.0L339.1 314.8L338.3 316.7L337.7 318.6L337.3 320.5L337 322.4L336.9 324.3L337 326.2L337.2 328.1Z"/>
<path fill="url(#g40)" d="M687.7 294.6L688 292.7L688.4 290.8L689 289.0L689.8 287.2L690.7 285.4L691.8 283.7L693 282.0L694.3 280.4L695.8 278.9L697.4 277.5L699.1 276.1L701 274.8L702.9 273.7L705 272.6L707.1 271.6L709.3 270.7L711.6 270.0L714 269.3L716.4 268.8L718.9 268.3L721.4 268.0L723.9 267.8L726.5 267.8L729 267.8L731.6 268.0L734.2 268.2L736.7 268.6L739.2 269.1L741.7 269.8L744.1 270.5L746.5 271.4L748.8 272.3L751 273.4L753.1 274.5L755.2 275.8L757.1 277.1L759 278.5L760.7 280.0L762.3 281.6L763.8 283.2L765.1 284.9L766.3 286.7L767.4 288.5L768.3 290.3L769 292.2L769.6 294.1L770.1 296.0L770.3 298.0L770.5 299.9L770.4 301.9L770.2 303.8L766.3 336.0L766.5 334.1L766.5 332.2L766.4 330.2L766.2 328.3L765.7 326.4L765.1 324.5L764.4 322.6L763.5 320.8L762.5 319.0L761.3 317.2L760 315.5L758.6 313.9L757 312.3L755.3 310.9L753.5 309.4L751.6 308.1L749.6 306.9L747.5 305.7L745.3 304.7L743.1 303.7L740.8 302.9L738.4 302.2L736 301.5L733.5 301.0L731 300.6L728.5 300.4L726 300.2L723.5 300.2L721 300.2L718.5 300.4L716 300.7L713.6 301.2L711.3 301.7L708.9 302.4L706.7 303.1L704.5 304.0L702.4 305.0L700.4 306.0L698.5 307.2L696.7 308.5L695 309.8L693.4 311.3L692 312.8L690.6 314.4L689.5 316.0L688.4 317.7L687.5 319.5L686.8 321.3L686.2 323.1L685.7 325.0L685.5 326.9Z"/>
<path fill="url(#g15)" d="M261 282.0L262.9 283.2L264.7 284.4L266.3 285.8L267.8 287.2L269.2 288.7L270.5 290.3L271.6 292.0L272.5 293.7L273.3 295.4L274 297.3L274.4 299.1L280.6 331.4L280.1 329.5L279.5 327.7L278.7 325.9L277.8 324.2L276.7 322.6L275.4 321.0L274.1 319.5L272.6 318.1L271 316.8L269.2 315.5L267.4 314.4Z"/>
<path fill="#b29a1f" stroke="#b29a1f" stroke-width="0.4" d="M971.6 298.7L979.1 289.0L971 321.3L963.6 331.0Z"/>
<path fill="url(#g37)" d="M549.4 315.9L549.5 313.9L549.7 312.0L550.2 310.0L550.7 308.1L551.5 306.2L552.3 304.4L553.4 302.6L554.6 300.8L555.9 299.2L557.3 297.5L558.9 296.0L560.6 294.5L562.5 293.2L564.4 291.9L566.4 290.7L568.6 289.6L570.8 288.6L573.1 287.7L575.5 286.9L577.9 286.2L580.4 285.7L582.9 285.2L585.4 284.9L588 284.7L590.6 284.7L593.2 284.7L595.7 284.9L598.3 285.1L600.8 285.6L603.3 286.1L605.8 286.7L608.2 287.5L610.5 288.3L612.7 289.3L614.9 290.3L617 291.5L619 292.8L620.9 294.1L622.6 295.6L624.3 297.1L625.8 298.7L627.2 300.4L628.4 302.1L629.5 303.9L630.5 305.7L631.2 307.6L631.9 309.5L632.4 311.4L632.7 313.4L632.8 315.4L632.8 317.3L631.7 349.5L631.7 347.5L631.6 345.5L631.2 343.6L630.8 341.7L630.1 339.8L629.4 337.9L628.4 336.1L627.4 334.3L626.2 332.6L624.8 330.9L623.3 329.4L621.7 327.8L620 326.4L618.1 325.1L616.2 323.8L614.2 322.6L612 321.6L609.8 320.6L607.5 319.8L605.2 319.0L602.8 318.4L600.4 317.9L597.9 317.5L595.4 317.2L592.8 317.0L590.3 317.0L587.8 317.1L585.3 317.2L582.8 317.6L580.3 318.0L577.9 318.5L575.5 319.2L573.2 320.0L570.9 320.9L568.8 321.9L566.7 322.9L564.7 324.1L562.8 325.4L561 326.8L559.3 328.3L557.7 329.8L556.3 331.4L555 333.1L553.9 334.8L552.9 336.6L552 338.4L551.3 340.3L550.7 342.2L550.3 344.1L550.1 346.1L550 348.1Z"/>
<path fill="url(#g4)" d="M910.1 316.6L910.5 314.7L911.1 312.9L911.8 311.1L912.7 309.3L913.8 307.6L915 306.0L916.3 304.4L917.8 303.0L919.4 301.6L921.1 300.3L923 299.1L924.9 297.9L927 296.9L929.2 296.0L931.4 295.3L933.7 294.6L936.1 294.0L938.6 293.6L941.1 293.3L943.6 293.1L946.2 293.0L948.8 293.0L951.4 293.2L954 293.5L956.6 293.9L959.2 294.4L961.8 295.1L964.3 295.8L966.8 296.7L969.2 297.7L971.6 298.7L963.6 331.0L961.3 329.9L958.9 328.9L956.5 328.1L954 327.3L951.5 326.7L949 326.2L946.4 325.8L943.8 325.5L941.3 325.3L938.7 325.3L936.2 325.4L933.7 325.5L931.3 325.9L928.9 326.3L926.5 326.9L924.2 327.5L922 328.3L919.9 329.2L917.9 330.2L916 331.3L914.1 332.5L912.4 333.8L910.9 335.2L909.4 336.6L908.1 338.2L906.9 339.8L905.9 341.5L905 343.2L904.3 345.0L903.7 346.9L903.3 348.8Z"/>
<path fill="url(#g32)" d="M409 337.6L408.9 335.6L409 333.6L409.2 331.6L409.5 329.6L410.1 327.6L410.8 325.7L411.7 323.7L412.7 321.9L413.8 320.0L415.1 318.3L416.6 316.6L418.1 314.9L419.8 313.4L421.7 311.9L423.6 310.5L425.6 309.1L427.8 307.9L430 306.8L432.3 305.8L434.7 304.9L437.1 304.1L439.6 303.4L442.1 302.9L444.7 302.4L447.3 302.1L449.9 301.9L452.5 301.8L455.1 301.9L457.7 302.0L460.2 302.3L462.8 302.7L465.2 303.3L467.7 303.9L470 304.7L472.3 305.5L474.5 306.5L476.7 307.6L478.7 308.8L480.6 310.1L482.4 311.5L484.1 312.9L485.6 314.5L487.1 316.1L488.3 317.8L489.5 319.5L490.5 321.4L491.3 323.2L492 325.1L492.5 327.1L492.9 329.0L493.1 331.0L494.8 363.1L494.6 361.1L494.3 359.1L493.8 357.2L493.1 355.3L492.3 353.5L491.3 351.7L490.2 349.9L488.9 348.2L487.5 346.6L486 345.1L484.3 343.6L482.6 342.3L480.7 341.0L478.7 339.8L476.6 338.7L474.5 337.7L472.2 336.9L469.9 336.1L467.5 335.5L465.1 335.0L462.6 334.5L460.1 334.3L457.6 334.1L455 334.1L452.5 334.1L449.9 334.3L447.4 334.6L444.9 335.1L442.4 335.6L440 336.3L437.6 337.1L435.3 338.0L433 339.0L430.8 340.1L428.7 341.3L426.7 342.6L424.9 344.0L423.1 345.5L421.4 347.1L419.9 348.7L418.5 350.4L417.2 352.2L416 354.0L415.1 355.8L414.2 357.7L413.5 359.7L413 361.6L412.6 363.6L412.4 365.6L412.4 367.6L412.5 369.6Z"/>
<path fill="url(#g46)" d="M772.2 336.3L772.5 334.3L773.1 332.4L773.8 330.5L774.7 328.7L775.7 326.9L776.8 325.2L778.1 323.5L779.6 321.9L781.2 320.4L782.9 319.0L784.7 317.7L786.6 316.5L788.7 315.3L790.8 314.3L793.1 313.4L795.4 312.6L797.8 311.9L800.2 311.4L802.7 310.9L805.3 310.6L807.8 310.4L810.4 310.3L813.1 310.4L815.7 310.5L818.3 310.8L820.9 311.2L823.5 311.8L826 312.4L828.5 313.2L831 314.1L833.4 315.0L835.7 316.1L837.9 317.3L840 318.6L842.1 320.0L844 321.5L845.8 323.1L847.5 324.7L849.1 326.4L850.5 328.2L851.8 330.0L853 331.9L854 333.8L854.8 335.7L855.5 337.7L856.1 339.7L856.4 341.8L856.6 343.8L856.6 345.8L856.5 347.8L856.2 349.8L850.4 381.7L850.7 379.8L850.8 377.8L850.8 375.7L850.6 373.7L850.3 371.7L849.8 369.7L849.1 367.8L848.3 365.8L847.3 363.9L846.2 362.0L844.9 360.2L843.5 358.5L842 356.8L840.3 355.2L838.5 353.6L836.6 352.1L834.6 350.8L832.6 349.5L830.4 348.3L828.1 347.2L825.8 346.2L823.4 345.3L820.9 344.6L818.5 343.9L815.9 343.4L813.4 343.0L810.8 342.7L808.2 342.5L805.7 342.5L803.1 342.6L800.6 342.8L798.1 343.1L795.7 343.5L793.3 344.1L790.9 344.8L788.7 345.6L786.5 346.5L784.4 347.5L782.4 348.6L780.5 349.8L778.7 351.1L777 352.5L775.4 354.0L774 355.6L772.7 357.2L771.6 359.0L770.6 360.7L769.7 362.6L769.1 364.4L768.5 366.4L768.1 368.3Z"/>
<path fill="url(#g23)" d="M266.5 359.7L266.2 357.7L266 355.6L266 353.6L266.2 351.6L266.5 349.5L267.1 347.5L267.7 345.5L268.6 343.5L269.6 341.6L270.7 339.7L272 337.8L273.4 336.0L275 334.3L276.7 332.6L278.5 331.0L280.4 329.5L282.5 328.1L284.6 326.7L286.9 325.5L289.2 324.3L291.6 323.3L294 322.4L296.5 321.6L299.1 320.9L301.7 320.3L304.3 319.9L306.9 319.6L309.5 319.4L312.2 319.3L314.8 319.3L317.4 319.5L319.9 319.8L322.5 320.2L324.9 320.7L327.3 321.4L329.7 322.2L331.9 323.1L334.1 324.1L336.2 325.2L338.1 326.4L340 327.7L341.7 329.1L343.3 330.6L344.8 332.1L346.1 333.8L347.3 335.5L348.3 337.3L349.2 339.1L349.9 341.0L350.5 343.0L350.9 344.9L355.6 376.9L355.2 374.9L354.6 373.0L353.9 371.1L353 369.3L352 367.5L350.9 365.8L349.6 364.2L348.1 362.6L346.5 361.1L344.9 359.7L343 358.4L341.1 357.2L339.1 356.1L337 355.2L334.8 354.3L332.5 353.5L330.1 352.9L327.7 352.3L325.2 351.9L322.7 351.6L320.2 351.4L317.6 351.4L315 351.5L312.5 351.7L309.9 352.0L307.3 352.5L304.8 353.0L302.3 353.7L299.8 354.5L297.4 355.4L295.1 356.4L292.8 357.6L290.6 358.8L288.6 360.1L286.6 361.5L284.7 363.0L282.9 364.6L281.2 366.3L279.7 368.0L278.3 369.8L277.1 371.6L275.9 373.5L275 375.5L274.2 377.4L273.5 379.4L273 381.5L272.7 383.5L272.5 385.5L272.5 387.5L272.7 389.5L273 391.5Z"/>
<path fill="url(#g36)" d="M631.7 358.4L631.9 356.3L632.2 354.3L632.7 352.3L633.4 350.4L634.2 348.4L635.2 346.6L636.4 344.7L637.6 343.0L639.1 341.3L640.6 339.7L642.3 338.2L644.1 336.7L646.1 335.4L648.1 334.1L650.2 333.0L652.4 332.0L654.8 331.0L657.1 330.2L659.6 329.5L662.1 329.0L664.6 328.5L667.2 328.2L669.8 328.0L672.5 327.9L675.1 327.9L677.7 328.1L680.4 328.4L683 328.8L685.5 329.4L688.1 330.0L690.5 330.8L692.9 331.7L695.3 332.7L697.5 333.8L699.7 335.0L701.8 336.4L703.7 337.8L705.6 339.3L707.3 340.9L708.9 342.5L710.4 344.2L711.8 346.0L712.9 347.9L714 349.8L714.9 351.8L715.6 353.8L716.2 355.8L716.6 357.8L716.8 359.9L716.9 361.9L716.8 364.0L713.9 395.8L714 393.8L713.9 391.7L713.7 389.7L713.3 387.7L712.7 385.7L712 383.7L711.1 381.7L710.1 379.8L709 378.0L707.7 376.2L706.2 374.5L704.6 372.8L702.9 371.3L701.1 369.8L699.2 368.4L697.2 367.1L695 365.8L692.8 364.7L690.5 363.7L688.2 362.9L685.8 362.1L683.3 361.4L680.8 360.9L678.2 360.5L675.7 360.2L673.1 360.0L670.5 360.0L667.9 360.0L665.4 360.2L662.8 360.6L660.4 361.0L657.9 361.6L655.5 362.3L653.2 363.1L650.9 364.0L648.7 365.0L646.6 366.2L644.6 367.4L642.7 368.7L641 370.2L639.3 371.7L637.8 373.3L636.4 375.0L635.1 376.7L634 378.5L633 380.4L632.2 382.3L631.6 384.2L631.1 386.2L630.7 388.2L630.6 390.3Z"/>
<path fill="url(#g16)" d="M193.4 343.0L195.3 344.2L197 345.5L198.7 347.0L200.2 348.5L201.6 350.1L202.8 351.8L203.9 353.5L204.8 355.3L205.6 357.2L206.2 359.1L213.9 391.0L213.3 389.1L212.6 387.2L211.7 385.4L210.6 383.7L209.4 382.0L208 380.4L206.5 378.9L204.9 377.5L203.2 376.2L201.3 375.0Z"/>
<path fill="#b29a1f" stroke="#b29a1f" stroke-width="0.4" d="M923.8 360.7L931.8 350.3L924.4 382.2L916.6 392.5Z"/>
<path fill="url(#g34)" d="M489 380.9L489 378.9L489.2 376.8L489.5 374.7L489.9 372.6L490.6 370.6L491.4 368.6L492.4 366.6L493.5 364.7L494.7 362.9L496.1 361.1L497.7 359.4L499.4 357.8L501.2 356.2L503.1 354.8L505.1 353.4L507.3 352.1L509.5 351.0L511.8 349.9L514.2 349.0L516.6 348.1L519.2 347.4L521.7 346.9L524.3 346.4L526.9 346.1L529.6 345.9L532.2 345.8L534.9 345.8L537.5 346.0L540.2 346.3L542.8 346.7L545.3 347.3L547.8 347.9L550.3 348.7L552.6 349.6L554.9 350.7L557.1 351.8L559.2 353.0L561.2 354.4L563.1 355.8L564.9 357.3L566.6 358.9L568.1 360.6L569.4 362.4L570.7 364.2L571.8 366.1L572.7 368.1L573.4 370.0L574.1 372.1L574.5 374.1L574.8 376.2L574.9 378.3L574.9 410.0L574.8 407.9L574.6 405.9L574.1 403.8L573.5 401.8L572.8 399.9L571.9 397.9L570.8 396.1L569.6 394.2L568.3 392.5L566.8 390.8L565.2 389.2L563.4 387.7L561.6 386.3L559.6 384.9L557.5 383.7L555.4 382.6L553.1 381.6L550.8 380.7L548.4 379.9L546 379.2L543.5 378.7L540.9 378.2L538.4 377.9L535.8 377.8L533.2 377.7L530.6 377.8L528 378.0L525.4 378.3L522.9 378.8L520.4 379.4L517.9 380.1L515.5 380.9L513.2 381.8L510.9 382.9L508.7 384.0L506.6 385.3L504.6 386.7L502.8 388.1L501 389.6L499.4 391.3L497.8 393.0L496.5 394.7L495.2 396.6L494.1 398.5L493.2 400.4L492.4 402.4L491.8 404.4L491.3 406.4L491 408.5L490.9 410.6L490.9 412.7Z"/>
<path fill="url(#g3)" d="M860.1 379.6L860.6 377.6L861.3 375.6L862.1 373.7L863 371.9L864.1 370.1L865.4 368.3L866.8 366.7L868.4 365.1L870.1 363.7L871.9 362.3L873.8 361.0L875.8 359.8L878 358.8L880.2 357.8L882.6 357.0L885 356.3L887.4 355.7L890 355.2L892.6 354.9L895.2 354.7L897.8 354.6L900.5 354.6L903.2 354.8L905.9 355.1L908.6 355.6L911.2 356.1L913.8 356.8L916.4 357.6L918.9 358.5L921.4 359.5L923.8 360.7L916.6 392.5L914.2 391.4L911.8 390.4L909.3 389.5L906.8 388.7L904.2 388.0L901.7 387.4L899 387.0L896.4 386.7L893.8 386.5L891.2 386.5L888.6 386.6L886 386.8L883.5 387.1L881 387.6L878.6 388.2L876.2 388.9L873.9 389.7L871.7 390.6L869.6 391.7L867.6 392.9L865.7 394.1L863.9 395.5L862.3 397.0L860.8 398.5L859.4 400.1L858.1 401.9L857 403.6L856.1 405.5L855.3 407.4L854.7 409.3L854.2 411.3Z"/>
<path fill="url(#g29)" d="M344.1 403.9L343.9 401.8L343.8 399.7L343.9 397.6L344.2 395.5L344.7 393.3L345.3 391.2L346.1 389.2L347 387.2L348.1 385.2L349.4 383.2L350.8 381.4L352.3 379.5L354 377.8L355.8 376.1L357.7 374.6L359.7 373.1L361.9 371.7L364.1 370.4L366.4 369.2L368.8 368.2L371.3 367.2L373.8 366.4L376.4 365.6L379 365.0L381.7 364.6L384.3 364.2L387 364.0L389.7 363.9L392.4 364.0L395 364.2L397.7 364.5L400.2 364.9L402.8 365.5L405.3 366.1L407.7 367.0L410 367.9L412.2 368.9L414.4 370.1L416.4 371.3L418.4 372.7L420.2 374.1L421.9 375.7L423.4 377.3L424.9 379.0L426.1 380.8L427.2 382.7L428.2 384.6L429 386.6L429.7 388.6L430.1 390.7L430.5 392.8L433.6 424.4L433.3 422.3L432.8 420.3L432.2 418.3L431.4 416.3L430.4 414.4L429.3 412.6L428.1 410.8L426.7 409.1L425.2 407.4L423.5 405.9L421.7 404.5L419.8 403.1L417.8 401.9L415.7 400.7L413.5 399.7L411.2 398.8L408.9 398.0L406.4 397.3L404 396.7L401.4 396.3L398.9 396.0L396.3 395.8L393.6 395.8L391 395.9L388.4 396.1L385.8 396.4L383.2 396.9L380.6 397.5L378.1 398.2L375.6 399.0L373.2 400.0L370.8 401.0L368.6 402.2L366.4 403.5L364.3 404.8L362.3 406.3L360.4 407.9L358.7 409.5L357 411.3L355.5 413.1L354.2 414.9L353 416.8L351.9 418.8L351 420.8L350.2 422.9L349.6 425.0L349.2 427.1L348.9 429.2L348.8 431.3L348.9 433.4L349.1 435.5Z"/>
<path fill="url(#g45)" d="M717.4 402.6L717.7 400.4L718.1 398.4L718.8 396.3L719.5 394.3L720.5 392.4L721.5 390.5L722.8 388.6L724.2 386.9L725.7 385.2L727.4 383.6L729.2 382.1L731.1 380.7L733.1 379.4L735.2 378.2L737.5 377.2L739.8 376.2L742.2 375.4L744.7 374.6L747.2 374.0L749.8 373.6L752.4 373.2L755.1 373.0L757.7 372.9L760.4 373.0L763.1 373.1L765.8 373.5L768.5 373.9L771.1 374.5L773.7 375.1L776.3 376.0L778.8 376.9L781.2 377.9L783.6 379.1L785.8 380.4L788 381.7L790.1 383.2L792 384.8L793.8 386.4L795.6 388.1L797.1 390.0L798.6 391.8L799.9 393.8L801 395.8L802 397.8L802.8 399.9L803.5 402.0L804 404.1L804.3 406.2L804.4 408.4L804.4 410.5L804.2 412.6L799.4 444.1L799.6 442.0L799.6 439.9L799.4 437.8L799.1 435.6L798.7 433.5L798 431.4L797.2 429.4L796.3 427.4L795.1 425.4L793.9 423.5L792.5 421.6L790.9 419.8L789.3 418.1L787.5 416.4L785.6 414.9L783.6 413.4L781.4 412.1L779.2 410.8L776.9 409.7L774.5 408.6L772.1 407.7L769.6 406.9L767.1 406.2L764.5 405.6L761.9 405.2L759.2 404.9L756.6 404.7L754 404.7L751.3 404.8L748.7 405.0L746.2 405.3L743.6 405.8L741.1 406.4L738.7 407.1L736.4 407.9L734.1 408.9L731.9 410.0L729.8 411.2L727.8 412.4L726 413.8L724.2 415.3L722.6 416.9L721.1 418.6L719.7 420.3L718.5 422.1L717.4 424.0L716.5 425.9L715.8 427.9L715.2 429.9L714.7 432.0L714.5 434.1Z"/>
<path fill="url(#g17)" d="M207.8 396.5L209.8 394.8L211.8 393.2L214 391.7L216.2 390.3L218.5 389.0L221 387.8L223.4 386.7L226 385.7L228.6 384.9L231.3 384.1L233.9 383.5L236.6 383.1L239.4 382.7L242.1 382.5L244.8 382.4L247.5 382.5L250.2 382.6L252.8 383.0L255.4 383.4L257.9 384.0L260.3 384.7L262.7 385.5L265 386.4L267.2 387.5L269.3 388.6L271.3 389.9L273.1 391.3L274.9 392.8L276.5 394.4L277.9 396.0L279.2 397.8L280.4 399.6L281.4 401.5L282.3 403.4L282.9 405.4L283.5 407.5L289.7 439.0L289.2 437.0L288.5 435.0L287.7 433.0L286.7 431.2L285.6 429.4L284.3 427.6L282.8 426.0L281.3 424.4L279.6 422.9L277.7 421.6L275.8 420.3L273.8 419.1L271.6 418.1L269.4 417.2L267 416.3L264.6 415.7L262.2 415.1L259.6 414.7L257.1 414.3L254.4 414.2L251.8 414.1L249.2 414.2L246.5 414.4L243.8 414.8L241.2 415.2L238.6 415.8L236 416.6L233.4 417.4L230.9 418.4L228.5 419.4L226.1 420.6L223.8 421.9L221.7 423.3L219.6 424.8L217.6 426.4L215.7 428.1Z"/>
<path fill="#766615" stroke="#766615" stroke-width="0.4" d="M195.4 388.9L207.8 396.5L215.7 428.1L203.5 420.5Z"/>
<path fill="url(#g33)" d="M572.4 426.0L572.5 423.8L572.8 421.7L573.2 419.5L573.7 417.4L574.5 415.3L575.4 413.3L576.5 411.3L577.7 409.4L579.1 407.5L580.6 405.7L582.2 404.0L584 402.4L585.9 400.9L587.9 399.5L590 398.2L592.3 397.0L594.6 395.9L597 394.9L599.5 394.0L602 393.3L604.6 392.7L607.2 392.2L609.9 391.8L612.6 391.6L615.3 391.5L618 391.6L620.7 391.8L623.4 392.1L626.1 392.5L628.7 393.1L631.3 393.8L633.8 394.6L636.3 395.6L638.7 396.6L640.9 397.8L643.1 399.1L645.2 400.5L647.2 402.0L649.1 403.6L650.8 405.3L652.5 407.0L653.9 408.9L655.3 410.8L656.4 412.7L657.5 414.8L658.3 416.8L659 418.9L659.5 421.1L659.9 423.2L660.1 425.4L660.1 427.6L658.3 459.0L658.3 456.8L658.1 454.6L657.8 452.5L657.3 450.4L656.6 448.3L655.7 446.2L654.8 444.2L653.6 442.3L652.3 440.4L650.9 438.5L649.3 436.8L647.6 435.1L645.8 433.6L643.8 432.1L641.8 430.7L639.6 429.4L637.4 428.2L635 427.2L632.6 426.2L630.2 425.4L627.6 424.7L625.1 424.2L622.5 423.7L619.8 423.4L617.2 423.2L614.5 423.2L611.9 423.3L609.2 423.5L606.6 423.8L604 424.3L601.5 424.9L599 425.6L596.6 426.5L594.2 427.5L592 428.5L589.8 429.7L587.7 431.1L585.7 432.5L583.9 434.0L582.1 435.6L580.5 437.3L579 439.0L577.7 440.9L576.5 442.8L575.4 444.8L574.5 446.8L573.8 448.8L573.3 451.0L572.9 453.1L572.6 455.2L572.6 457.4Z"/>
<path fill="#b29a1f" stroke="#b29a1f" stroke-width="0.4" d="M873.2 426.3L881.7 415.3L875.2 446.8L866.9 457.6Z"/>
<path fill="url(#g31)" d="M425.1 450.0L425 447.8L425 445.5L425.2 443.3L425.6 441.1L426.2 438.9L426.9 436.8L427.8 434.7L428.8 432.6L430 430.6L431.4 428.6L432.9 426.7L434.5 424.9L436.3 423.2L438.2 421.6L440.2 420.0L442.3 418.6L444.6 417.2L446.9 416.0L449.3 414.9L451.8 413.9L454.4 413.0L457 412.3L459.6 411.6L462.3 411.1L465 410.8L467.8 410.6L470.5 410.5L473.2 410.5L475.9 410.7L478.6 411.0L481.3 411.5L483.9 412.1L486.5 412.8L488.9 413.6L491.4 414.6L493.7 415.7L495.9 416.9L498.1 418.2L500.1 419.6L502 421.1L503.8 422.7L505.4 424.4L506.9 426.2L508.3 428.1L509.5 430.0L510.6 432.0L511.5 434.1L512.2 436.2L512.8 438.3L513.2 440.5L513.4 442.7L514.8 473.9L514.6 471.8L514.2 469.6L513.6 467.5L512.9 465.4L512 463.4L511 461.4L509.8 459.4L508.5 457.6L507 455.8L505.4 454.1L503.6 452.5L501.7 451.0L499.8 449.6L497.7 448.3L495.5 447.1L493.2 446.0L490.8 445.1L488.4 444.2L485.9 443.5L483.3 443.0L480.7 442.5L478.1 442.2L475.4 442.0L472.8 442.0L470.1 442.1L467.4 442.3L464.8 442.6L462.1 443.1L459.5 443.7L457 444.5L454.5 445.3L452.1 446.3L449.7 447.4L447.4 448.7L445.2 450.0L443.2 451.4L441.2 453.0L439.3 454.6L437.6 456.3L436 458.1L434.5 460.0L433.2 461.9L432 463.9L431 466.0L430.1 468.1L429.4 470.2L428.9 472.4L428.5 474.6L428.3 476.8L428.3 479.0L428.4 481.1Z"/>
<path fill="url(#g2)" d="M806.8 448.5L807.2 446.4L807.7 444.2L808.4 442.1L809.3 440.1L810.4 438.1L811.6 436.2L812.9 434.4L814.4 432.7L816 431.0L817.8 429.4L819.7 428.0L821.7 426.6L823.8 425.4L826.1 424.3L828.4 423.3L830.8 422.4L833.3 421.6L835.9 421.0L838.5 420.5L841.2 420.1L843.9 419.9L846.6 419.8L849.4 419.9L852.1 420.1L854.9 420.4L857.6 420.8L860.3 421.4L863 422.2L865.7 423.0L868.2 424.0L870.8 425.1L873.2 426.3L866.9 457.6L864.5 456.4L862 455.4L859.5 454.4L856.9 453.6L854.3 452.8L851.6 452.3L848.9 451.8L846.2 451.5L843.5 451.3L840.8 451.3L838.2 451.3L835.5 451.6L832.9 451.9L830.3 452.4L827.8 453.0L825.4 453.8L823 454.6L820.7 455.6L818.6 456.8L816.5 458.0L814.5 459.3L812.6 460.8L810.9 462.3L809.3 464.0L807.8 465.7L806.5 467.5L805.3 469.4L804.3 471.4L803.4 473.4L802.8 475.4L802.2 477.6L801.9 479.7Z"/>
<path fill="url(#g18)" d="M286 444.4L287.9 442.7L289.9 441.0L292 439.4L294.3 438.0L296.6 436.6L299 435.3L301.6 434.2L304.1 433.2L306.8 432.3L309.4 431.5L312.2 430.9L314.9 430.4L317.7 430.1L320.4 429.8L323.2 429.7L325.9 429.8L328.7 430.0L331.4 430.3L334 430.8L336.6 431.4L339.1 432.1L341.6 432.9L344 433.9L346.3 435.0L348.4 436.2L350.5 437.6L352.5 439.0L354.3 440.6L356 442.2L357.5 443.9L358.9 445.8L360.2 447.7L361.3 449.6L362.2 451.7L363 453.8L363.6 455.9L364 458.1L368.7 489.2L368.3 487.0L367.7 484.9L366.9 482.8L366 480.8L364.9 478.8L363.7 477.0L362.3 475.2L360.8 473.4L359.1 471.8L357.3 470.3L355.4 468.8L353.4 467.5L351.2 466.3L349 465.2L346.7 464.2L344.3 463.4L341.8 462.7L339.3 462.1L336.7 461.6L334 461.3L331.4 461.1L328.7 461.1L326 461.2L323.3 461.4L320.6 461.7L317.9 462.2L315.2 462.9L312.6 463.6L310 464.5L307.5 465.5L305.1 466.6L302.7 467.9L300.4 469.2L298.2 470.7L296.1 472.2L294.1 473.9L292.3 475.6Z"/>
<path fill="#766615" stroke="#766615" stroke-width="0.4" d="M273 436.5L286 444.4L292.3 475.6L279.6 467.8Z"/>
<path fill="url(#g44)" d="M659.5 473.0L659.6 470.7L660 468.5L660.5 466.2L661.1 464.1L662 461.9L663 459.9L664.2 457.9L665.5 455.9L667 454.1L668.6 452.3L670.4 450.6L672.2 449.0L674.2 447.5L676.4 446.2L678.6 444.9L680.9 443.8L683.3 442.7L685.8 441.8L688.4 441.1L691 440.4L693.7 439.9L696.4 439.6L699.2 439.3L701.9 439.3L704.7 439.3L707.5 439.5L710.2 439.8L713 440.3L715.7 440.9L718.3 441.6L720.9 442.5L723.5 443.5L725.9 444.6L728.3 445.8L730.6 447.1L732.8 448.6L734.9 450.2L736.9 451.8L738.7 453.6L740.5 455.4L742 457.3L743.5 459.3L744.8 461.4L745.9 463.5L746.8 465.6L747.6 467.8L748.3 470.1L748.7 472.3L749 474.6L749.1 476.9L749 479.1L748.8 481.4L745 512.3L745.3 510.1L745.3 507.8L745.2 505.5L745 503.3L744.5 501.1L743.9 498.9L743.1 496.7L742.2 494.5L741.1 492.4L739.9 490.4L738.5 488.4L736.9 486.5L735.2 484.7L733.4 483.0L731.5 481.3L729.5 479.8L727.3 478.3L725.1 477.0L722.7 475.8L720.3 474.7L717.8 473.7L715.3 472.9L712.7 472.1L710 471.5L707.3 471.1L704.6 470.8L701.9 470.6L699.2 470.5L696.5 470.6L693.8 470.8L691.2 471.2L688.6 471.7L686 472.3L683.5 473.1L681 474.0L678.7 475.0L676.4 476.1L674.2 477.4L672.1 478.7L670.2 480.2L668.3 481.8L666.6 483.4L665 485.2L663.6 487.1L662.3 489.0L661.1 491.0L660.1 493.0L659.3 495.1L658.6 497.3L658.1 499.5L657.8 501.7L657.7 503.9Z"/>
<path fill="url(#g30)" d="M509.6 497.9L509.6 495.6L509.7 493.3L510 491.0L510.5 488.7L511.2 486.5L512 484.3L513 482.1L514.1 480.0L515.5 477.9L516.9 476.0L518.5 474.1L520.3 472.3L522.2 470.6L524.2 468.9L526.3 467.4L528.5 466.0L530.8 464.8L533.3 463.6L535.8 462.5L538.3 461.6L541 460.9L543.7 460.2L546.4 459.7L549.2 459.3L551.9 459.1L554.7 459.0L557.5 459.1L560.3 459.3L563.1 459.6L565.8 460.1L568.5 460.7L571.1 461.4L573.7 462.3L576.2 463.3L578.6 464.4L581 465.7L583.2 467.0L585.3 468.5L587.3 470.1L589.2 471.8L591 473.6L592.6 475.4L594 477.4L595.4 479.4L596.5 481.5L597.5 483.7L598.3 485.8L599 488.1L599.5 490.4L599.8 492.7L599.9 495.0L599.4 525.7L599.3 523.4L599 521.2L598.5 518.9L597.9 516.7L597.1 514.5L596.1 512.4L595 510.3L593.7 508.3L592.2 506.4L590.7 504.5L588.9 502.8L587.1 501.1L585.1 499.5L583.1 498.1L580.9 496.7L578.6 495.5L576.2 494.3L573.8 493.3L571.3 492.5L568.7 491.7L566.1 491.1L563.4 490.7L560.7 490.3L558 490.2L555.2 490.1L552.5 490.2L549.8 490.4L547.1 490.8L544.4 491.3L541.8 491.9L539.2 492.7L536.7 493.6L534.2 494.6L531.9 495.8L529.6 497.1L527.4 498.5L525.3 500.0L523.4 501.6L521.5 503.3L519.8 505.0L518.3 506.9L516.8 508.9L515.5 510.9L514.4 513.0L513.4 515.1L512.6 517.3L512 519.5L511.5 521.8L511.2 524.1L511.1 526.4L511.1 528.7Z"/>
<path fill="url(#g19)" d="M367.5 494.4L369.4 492.6L371.4 490.9L373.5 489.2L375.7 487.7L378.1 486.3L380.5 484.9L383 483.8L385.6 482.7L388.3 481.8L391 481.0L393.8 480.3L396.5 479.8L399.3 479.4L402.2 479.2L405 479.1L407.8 479.2L410.6 479.4L413.4 479.7L416.1 480.2L418.8 480.8L421.4 481.5L423.9 482.4L426.4 483.5L428.7 484.6L431 485.9L433.2 487.3L435.2 488.8L437.1 490.4L438.9 492.1L440.6 493.9L442.1 495.8L443.4 497.8L444.6 499.9L445.7 502.0L446.5 504.2L447.2 506.4L447.7 508.7L448.1 511.0L451 541.6L450.6 539.3L450.1 537.1L449.4 534.9L448.6 532.7L447.6 530.6L446.4 528.6L445.1 526.6L443.6 524.7L442 522.9L440.2 521.2L438.4 519.6L436.4 518.1L434.2 516.7L432 515.5L429.7 514.3L427.3 513.3L424.8 512.4L422.2 511.7L419.6 511.1L417 510.6L414.3 510.3L411.5 510.1L408.8 510.0L406 510.1L403.3 510.3L400.5 510.7L397.8 511.2L395.1 511.9L392.5 512.7L389.9 513.6L387.3 514.6L384.9 515.8L382.5 517.1L380.2 518.5L378 520.0L375.9 521.7L374 523.4L372.1 525.2Z"/>
<path fill="#b29a1f" stroke="#b29a1f" stroke-width="0.4" d="M819.5 495.9L828.5 484.2L823 515.1L814.2 526.6Z"/>
<path fill="#766615" stroke="#766615" stroke-width="0.4" d="M353.9 486.1L367.5 494.4L372.1 525.2L358.9 517.0Z"/>
<path fill="url(#g1)" d="M750.6 519.5L751 517.2L751.6 514.9L752.4 512.7L753.3 510.6L754.5 508.5L755.7 506.4L757.2 504.5L758.8 502.7L760.5 500.9L762.3 499.2L764.3 497.7L766.4 496.2L768.7 494.9L771 493.7L773.4 492.7L775.9 491.7L778.5 490.9L781.2 490.3L783.9 489.7L786.7 489.4L789.5 489.1L792.3 489.0L795.1 489.1L797.9 489.3L800.8 489.6L803.6 490.1L806.4 490.7L809.1 491.5L811.8 492.4L814.5 493.4L817 494.6L819.5 495.9L814.2 526.6L811.7 525.4L809.2 524.2L806.6 523.2L804 522.3L801.3 521.5L798.6 520.9L795.8 520.4L793.1 520.1L790.3 519.9L787.5 519.9L784.8 520.0L782 520.2L779.3 520.6L776.7 521.1L774.1 521.7L771.6 522.5L769.1 523.5L766.7 524.5L764.4 525.7L762.3 527.0L760.2 528.4L758.2 530.0L756.4 531.6L754.7 533.3L753.2 535.2L751.8 537.1L750.5 539.1L749.4 541.2L748.5 543.3L747.7 545.5L747.1 547.8L746.7 550.1Z"/>
<path fill="url(#g43)" d="M597.9 547.9L598 545.5L598.2 543.1L598.6 540.7L599.2 538.3L600 536.0L600.9 533.8L602 531.6L603.3 529.4L604.7 527.4L606.2 525.4L608 523.5L609.8 521.7L611.8 520.0L613.9 518.5L616.1 517.0L618.5 515.7L620.9 514.4L623.4 513.4L626 512.4L628.7 511.6L631.4 510.9L634.2 510.4L637 510.0L639.8 509.8L642.7 509.7L645.5 509.7L648.4 509.9L651.2 510.3L654 510.8L656.8 511.4L659.5 512.2L662.2 513.1L664.8 514.1L667.3 515.3L669.7 516.6L672.1 518.0L674.3 519.6L676.4 521.2L678.4 523.0L680.2 524.9L682 526.8L683.5 528.9L685 531.0L686.2 533.2L687.3 535.4L688.3 537.7L689 540.0L689.6 542.4L690 544.8L690.3 547.2L690.3 549.6L690.2 552.1L687.6 582.3L687.8 579.9L687.7 577.5L687.5 575.1L687.1 572.7L686.5 570.4L685.8 568.0L684.9 565.8L683.8 563.6L682.6 561.4L681.2 559.3L679.6 557.3L677.9 555.4L676.1 553.5L674.2 551.8L672.1 550.1L669.9 548.6L667.7 547.2L665.3 545.9L662.8 544.7L660.3 543.7L657.7 542.8L655 542.0L652.3 541.4L649.6 540.9L646.8 540.5L644 540.3L641.2 540.3L638.4 540.4L635.7 540.6L632.9 541.0L630.2 541.5L627.5 542.2L624.9 543.0L622.4 544.0L619.9 545.0L617.6 546.2L615.3 547.6L613.1 549.0L611 550.6L609.1 552.2L607.3 554.0L605.6 555.9L604.1 557.8L602.7 559.9L601.4 562.0L600.4 564.2L599.5 566.4L598.7 568.7L598.1 571.0L597.7 573.4L597.5 575.7L597.5 578.1Z"/>
<path fill="url(#g20)" d="M452.6 546.7L454.5 544.8L456.5 542.9L458.6 541.2L460.8 539.6L463.2 538.1L465.6 536.8L468.1 535.5L470.7 534.4L473.4 533.4L476.2 532.6L479 531.9L481.8 531.4L484.6 531.0L487.5 530.7L490.4 530.7L493.3 530.7L496.1 530.9L499 531.3L501.8 531.8L504.5 532.4L507.2 533.2L509.9 534.1L512.4 535.2L514.9 536.4L517.2 537.7L519.5 539.2L521.7 540.8L523.7 542.4L525.6 544.2L527.3 546.1L528.9 548.1L530.4 550.2L531.7 552.3L532.8 554.6L533.8 556.9L534.6 559.2L535.2 561.6L535.7 564.0L535.9 566.4L536.9 596.5L536.6 594.1L536.2 591.7L535.6 589.3L534.8 587.0L533.8 584.7L532.7 582.5L531.5 580.4L530 578.4L528.5 576.4L526.7 574.5L524.9 572.7L522.9 571.1L520.8 569.5L518.6 568.1L516.3 566.8L513.9 565.6L511.4 564.5L508.8 563.6L506.2 562.8L503.5 562.2L500.7 561.7L498 561.3L495.2 561.1L492.4 561.1L489.5 561.2L486.7 561.4L483.9 561.8L481.2 562.3L478.4 563.0L475.8 563.8L473.1 564.8L470.6 565.9L468.1 567.1L465.7 568.5L463.5 569.9L461.3 571.5L459.2 573.2L457.3 575.0L455.5 576.9Z"/>
<path fill="#766615" stroke="#766615" stroke-width="0.4" d="M438.5 538.0L452.6 546.7L455.5 576.9L441.6 568.3Z"/>
<path fill="#b29a1f" stroke="#b29a1f" stroke-width="0.4" d="M762.5 569.9L772 557.5L767.6 587.6L758.2 599.9Z"/>
<path fill="url(#g0)" d="M690.4 597.5L690.7 595.0L691.2 592.6L691.9 590.2L692.8 587.8L693.8 585.5L695 583.3L696.4 581.1L697.9 579.0L699.6 577.1L701.4 575.2L703.4 573.4L705.5 571.8L707.7 570.3L710 568.9L712.5 567.6L715 566.4L717.6 565.4L720.3 564.6L723.1 563.9L725.9 563.3L728.7 562.9L731.6 562.7L734.5 562.6L737.4 562.6L740.4 562.8L743.3 563.2L746.2 563.7L749 564.4L751.8 565.2L754.6 566.2L757.3 567.3L759.9 568.5L762.5 569.9L758.2 599.9L755.8 598.5L753.2 597.3L750.6 596.2L747.9 595.3L745.1 594.5L742.3 593.8L739.5 593.3L736.7 592.9L733.8 592.7L731 592.7L728.1 592.8L725.3 593.0L722.5 593.4L719.7 594.0L717.1 594.7L714.4 595.5L711.9 596.5L709.4 597.6L707 598.9L704.7 600.3L702.6 601.8L700.5 603.4L698.6 605.2L696.8 607.0L695.2 609.0L693.7 611.0L692.3 613.1L691.1 615.3L690.1 617.6L689.3 619.9L688.6 622.3L688.1 624.8L687.8 627.2Z"/>
<path fill="#766615" stroke="#766615" stroke-width="0.4" d="M526.9 592.2L541.7 601.3L542.5 631.0L528 622.0Z"/>
<path fill="url(#g21)" d="M541.7 601.3L543.5 599.3L545.4 597.4L547.5 595.6L549.8 593.9L552.1 592.3L554.5 590.9L557.1 589.6L559.7 588.5L562.4 587.4L565.2 586.6L568 585.9L570.9 585.3L573.8 584.9L576.7 584.6L579.7 584.5L582.6 584.6L585.5 584.8L588.5 585.2L591.3 585.7L594.2 586.4L597 587.2L599.7 588.2L602.3 589.3L604.9 590.5L607.4 591.9L609.8 593.4L612 595.1L614.1 596.9L616.2 598.7L618 600.7L619.7 602.8L621.3 605.0L622.7 607.2L624 609.5L625.1 611.9L626 614.4L626.7 616.9L627.2 619.4L627.6 621.9L627.8 624.5L627.7 627.1L626.6 656.5L626.6 653.9L626.4 651.4L626.1 648.9L625.5 646.4L624.8 643.9L624 641.5L622.9 639.1L621.7 636.8L620.3 634.6L618.8 632.4L617.1 630.4L615.3 628.4L613.3 626.6L611.2 624.8L609 623.2L606.7 621.7L604.3 620.3L601.8 619.1L599.2 618.0L596.5 617.0L593.8 616.2L591 615.5L588.2 615.0L585.3 614.7L582.5 614.4L579.6 614.4L576.7 614.5L573.9 614.7L571 615.1L568.2 615.7L565.5 616.4L562.8 617.3L560.1 618.3L557.5 619.4L555.1 620.7L552.7 622.1L550.4 623.6L548.2 625.3L546.2 627.1L544.3 629.0L542.5 631.0Z"/>
<path fill="#b29a1f" stroke="#b29a1f" stroke-width="0.4" d="M701.7 648.6L711.9 635.4L708.7 664.7L698.8 677.7Z"/>
<path fill="url(#g22)" d="M634.8 658.4L636.6 656.3L638.5 654.3L640.6 652.5L642.8 650.7L645.1 649.1L647.6 647.6L650.1 646.2L652.8 645.0L655.5 643.9L658.3 643.0L661.2 642.3L664.1 641.7L667 641.3L670 641.0L673 640.9L676.1 640.9L679.1 641.2L682.1 641.6L685 642.1L688 642.8L690.9 643.7L693.7 644.7L696.4 645.9L699.1 647.2L701.7 648.6L698.8 677.7L696.2 676.3L693.6 675.0L690.9 673.9L688.2 672.9L685.4 672.0L682.5 671.3L679.6 670.8L676.7 670.4L673.7 670.2L670.8 670.1L667.9 670.2L664.9 670.5L662.1 670.9L659.2 671.5L656.4 672.2L653.7 673.1L651 674.2L648.4 675.4L645.9 676.7L643.6 678.2L641.3 679.8L639.1 681.5L637.1 683.4L635.2 685.3L633.4 687.4Z"/>
<path fill="#766615" stroke="#766615" stroke-width="0.4" d="M619.3 648.9L634.8 658.4L633.4 687.4L618.3 678.0Z"/>
<path fill="#fcda2d" fill-rule="evenodd" d="M701.7 648.6L711.9 635.4L709.4 633.9L707 632.2L704.8 630.3L702.7 628.4L700.8 626.4L698.9 624.3L697.3 622.1L695.8 619.8L694.5 617.4L693.3 615.0L692.4 612.6L691.6 610.1L691 607.6L690.5 605.1L690.3 602.6L690.3 600.0L690.4 597.5L690.7 595.0L691.2 592.6L691.9 590.2L692.8 587.8L693.8 585.5L695 583.3L696.4 581.1L697.9 579.0L699.6 577.1L701.4 575.2L703.4 573.4L705.5 571.8L707.7 570.3L710 568.9L712.5 567.6L715 566.4L717.6 565.4L720.3 564.6L723.1 563.9L725.9 563.3L728.7 562.9L731.6 562.7L734.5 562.6L737.4 562.6L740.4 562.8L743.3 563.2L746.2 563.7L749 564.4L751.8 565.2L754.6 566.2L757.3 567.3L759.9 568.5L762.5 569.9L772 557.5L769.6 556.0L767.3 554.4L765.1 552.7L763 550.9L761 549.0L759.2 547.0L757.6 544.9L756.1 542.8L754.7 540.6L753.6 538.3L752.6 536.0L751.7 533.7L751.1 531.3L750.6 529.0L750.3 526.6L750.2 524.2L750.3 521.9L750.6 519.5L751 517.2L751.6 514.9L752.4 512.7L753.3 510.6L754.5 508.5L755.7 506.4L757.2 504.5L758.8 502.7L760.5 500.9L762.3 499.2L764.3 497.7L766.4 496.2L768.7 494.9L771 493.7L773.4 492.7L775.9 491.7L778.5 490.9L781.2 490.3L783.9 489.7L786.7 489.4L789.5 489.1L792.3 489.0L795.1 489.1L797.9 489.3L800.8 489.6L803.6 490.1L806.4 490.7L809.1 491.5L811.8 492.4L814.5 493.4L817 494.6L819.5 495.9L828.5 484.2L826.1 482.8L823.8 481.3L821.6 479.7L819.6 478.0L817.7 476.2L815.9 474.4L814.2 472.4L812.7 470.4L811.4 468.4L810.2 466.2L809.2 464.1L808.3 461.9L807.6 459.7L807.1 457.4L806.8 455.2L806.6 453.0L806.6 450.7L806.8 448.5L807.2 446.4L807.7 444.2L808.4 442.1L809.3 440.1L810.4 438.1L811.6 436.2L812.9 434.4L814.4 432.7L816 431.0L817.8 429.4L819.7 428.0L821.7 426.6L823.8 425.4L826.1 424.3L828.4 423.3L830.8 422.4L833.3 421.6L835.9 421.0L838.5 420.5L841.2 420.1L843.9 419.9L846.6 419.8L849.4 419.9L852.1 420.1L854.9 420.4L857.6 420.8L860.3 421.4L863 422.2L865.7 423.0L868.2 424.0L870.8 425.1L873.2 426.3L881.7 415.3L879.3 414.0L877.1 412.6L874.9 411.1L872.9 409.5L871 407.8L869.2 406.0L867.5 404.2L866 402.3L864.7 400.3L863.5 398.3L862.4 396.3L861.6 394.2L860.9 392.2L860.3 390.1L859.9 387.9L859.7 385.8L859.7 383.7L859.8 381.7L860.1 379.6L860.6 377.6L861.3 375.6L862.1 373.7L863 371.9L864.1 370.1L865.4 368.3L866.8 366.7L868.4 365.1L870.1 363.7L871.9 362.3L873.8 361.0L875.8 359.8L878 358.8L880.2 357.8L882.6 357.0L885 356.3L887.4 355.7L890 355.2L892.6 354.9L895.2 354.7L897.8 354.6L900.5 354.6L903.2 354.8L905.9 355.1L908.6 355.6L911.2 356.1L913.8 356.8L916.4 357.6L918.9 358.5L921.4 359.5L923.8 360.7L931.8 350.3L929.5 349.1L927.3 347.8L925.1 346.3L923.1 344.8L921.2 343.2L919.5 341.6L917.8 339.8L916.3 338.0L915 336.2L913.8 334.3L912.7 332.4L911.8 330.4L911.1 328.5L910.5 326.5L910.1 324.5L909.8 322.5L909.8 320.5L909.9 318.6L910.1 316.6L910.5 314.7L911.1 312.9L911.8 311.1L912.7 309.3L913.8 307.6L915 306.0L916.3 304.4L917.8 303.0L919.4 301.6L921.1 300.3L923 299.1L924.9 297.9L927 296.9L929.2 296.0L931.4 295.3L933.7 294.6L936.1 294.0L938.6 293.6L941.1 293.3L943.6 293.1L946.2 293.0L948.8 293.0L951.4 293.2L954 293.5L956.6 293.9L959.2 294.4L961.8 295.1L964.3 295.8L966.8 296.7L969.2 297.7L971.6 298.7L979.1 289.0L976.9 287.8L974.7 286.5L972.6 285.2L970.6 283.8L968.7 282.3L967 280.7L965.3 279.0L963.8 277.4L962.5 275.6L961.3 273.8L960.2 272.0L959.3 270.2L958.5 268.3L957.9 266.4L957.5 264.5L957.2 262.7L957.1 260.8L957.1 258.9L957.3 257.1L957.7 255.3L958.2 253.6L958.9 251.8L959.7 250.2L960.7 248.6L961.9 247.0L947.8 240.4L946.6 241.8L945.2 243.2L943.6 244.5L941.9 245.8L940.1 246.9L938.2 248.0L936.2 248.9L934.1 249.8L931.9 250.6L929.6 251.2L927.3 251.7L924.9 252.2L922.4 252.5L919.9 252.7L917.4 252.7L914.9 252.7L912.3 252.5L909.7 252.2L907.2 251.9L904.7 251.4L902.2 250.7L899.7 250.0L897.3 249.2L895 248.3L892.7 247.2L890.5 246.1L888.4 244.9L886.4 243.6L884.5 242.2L882.7 240.8L881.1 239.3L879.6 237.7L878.2 236.1L876.9 234.4L875.8 232.7L874.8 230.9L874 229.2L873.3 227.4L872.8 225.6L872.4 223.8L872.2 221.9L872.2 220.1L872.3 218.4L872.6 216.6L873 214.9L873.6 213.2L874.3 211.5L875.2 209.9L876.2 208.4L877.4 206.9L863.9 200.5L862.6 201.9L861.2 203.2L859.6 204.5L857.9 205.7L856.1 206.8L854.2 207.8L852.2 208.7L850.1 209.6L847.9 210.3L845.7 210.9L843.3 211.4L841 211.8L838.5 212.1L836.1 212.3L833.6 212.4L831.1 212.3L828.6 212.2L826.1 211.9L823.6 211.5L821.1 211.1L818.7 210.5L816.3 209.8L814 209.0L811.8 208.1L809.6 207.1L807.5 206.0L805.5 204.9L803.5 203.6L801.7 202.3L800.1 200.9L798.5 199.4L797 197.9L795.7 196.4L794.6 194.8L793.5 193.1L792.6 191.4L791.9 189.7L791.3 188.0L790.9 186.2L790.6 184.5L790.5 182.8L790.5 181.0L790.7 179.3L791 177.6L791.5 176.0L792.1 174.3L792.9 172.7L793.9 171.2L794.9 169.7L796.1 168.3L783.1 162.1L781.8 163.5L780.3 164.8L778.8 166.0L777.1 167.1L775.2 168.2L773.3 169.2L771.3 170.1L769.2 170.8L767.1 171.5L764.8 172.1L762.5 172.6L760.2 173.0L757.8 173.3L755.4 173.5L752.9 173.6L750.5 173.5L748 173.4L745.6 173.1L743.1 172.8L740.7 172.3L738.4 171.7L736.1 171.0L733.8 170.3L731.7 169.4L729.6 168.5L727.5 167.4L725.6 166.3L723.8 165.1L722.1 163.8L720.4 162.5L719 161.1L717.6 159.6L716.4 158.1L715.3 156.6L714.3 155.0L713.5 153.4L712.9 151.7L712.4 150.1L712 148.4L711.8 146.7L711.7 145.0L711.8 143.4L712.1 141.7L712.5 140.1L713 138.5L713.7 136.9L714.5 135.4L715.5 133.9L716.6 132.5L717.8 131.1L705.3 125.1L704 126.4L702.5 127.7L700.9 128.9L699.2 130.0L697.3 131.0L695.4 131.9L693.4 132.8L691.3 133.5L689.2 134.2L687 134.8L684.7 135.3L682.4 135.6L680 135.9L677.6 136.1L675.2 136.2L672.8 136.1L670.4 136.0L668 135.7L665.7 135.4L663.3 134.9L661 134.4L658.8 133.7L656.6 133.0L654.5 132.2L652.5 131.3L650.5 130.3L648.7 129.2L646.9 128.0L645.3 126.8L643.8 125.5L642.4 124.2L641.1 122.7L639.9 121.3L638.9 119.8L638 118.3L637.3 116.7L636.7 115.1L636.3 113.5L636 111.9L635.8 110.3L635.8 108.7L636 107.1L636.3 105.5L636.8 103.9L637.3 102.3L638.1 100.8L639 99.4L640 97.9L641.1 96.5L642.4 95.2L630.3 89.5L628.9 90.7L627.4 91.9L625.8 93.1L624.1 94.1L622.2 95.1L620.3 96.0L618.3 96.9L616.2 97.6L614.1 98.2L611.9 98.8L609.6 99.3L607.4 99.6L605 99.9L602.7 100.1L600.3 100.1L598 100.1L595.6 99.9L593.3 99.7L591 99.4L588.7 98.9L586.5 98.4L584.3 97.8L582.2 97.1L580.1 96.3L578.2 95.4L576.3 94.4L574.5 93.4L572.9 92.3L571.3 91.1L569.8 89.8L568.5 88.5L567.3 87.2L566.2 85.8L565.3 84.3L564.5 82.9L563.8 81.4L563.3 79.8L562.9 78.3L562.7 76.7L562.6 75.2L562.7 73.6L562.9 72.1L563.2 70.5L563.7 69.0L564.4 67.5L565.2 66.0L566.1 64.6L567.1 63.2L568.3 61.9L569.6 60.6L557.9 55.1L556.5 56.3L555 57.5L553.4 58.6L551.6 59.6L549.8 60.5L547.9 61.4L545.9 62.2L543.8 62.9L541.7 63.6L539.5 64.1L537.3 64.5L535 64.9L532.7 65.1L530.4 65.3L528.1 65.4L525.8 65.3L523.5 65.2L521.2 65.0L518.9 64.6L516.7 64.2L514.5 63.7L512.4 63.1L510.4 62.4L508.4 61.6L506.5 60.8L497.9 68.6L497.9 68.6L499.7 69.5L501.4 70.6L503 71.6L504.5 72.8L505.9 74.0L507.2 75.3L508.3 76.6L509.4 78.0L510.3 79.5L511 80.9L511.6 82.4L512.1 84.0L512.5 85.5L512.6 87.1L512.7 88.7L512.6 90.3L512.3 91.9L511.9 93.4L511.4 95.0L510.7 96.5L509.9 98.0L508.9 99.5L507.8 100.9L506.6 102.3L505.2 103.7L503.7 104.9L502.1 106.2L500.4 107.3L498.6 108.4L496.7 109.4L494.7 110.3L492.6 111.1L490.5 111.9L488.3 112.5L486 113.1L483.8 113.6L481.4 113.9L479.1 114.2L476.7 114.4L474.3 114.4L471.9 114.4L469.6 114.3L467.2 114.0L464.9 113.7L462.7 113.3L460.5 112.7L458.3 112.1L456.2 111.4L454.2 110.5L452.3 109.6L443.2 117.9L443.2 117.9L445 118.8L446.7 119.9L448.4 121.1L449.9 122.3L451.3 123.6L452.6 124.9L453.7 126.3L454.7 127.8L455.6 129.3L456.3 130.8L456.9 132.4L457.4 134.0L457.7 135.7L457.8 137.3L457.8 139.0L457.7 140.7L457.4 142.3L456.9 144.0L456.3 145.6L455.5 147.2L454.6 148.8L453.6 150.4L452.4 151.9L451.1 153.3L449.7 154.8L448.1 156.1L446.5 157.4L444.7 158.6L442.8 159.7L440.8 160.8L438.7 161.8L436.6 162.6L434.4 163.4L432.1 164.1L429.8 164.7L427.4 165.2L425 165.6L422.6 165.9L420.1 166.0L417.7 166.1L415.3 166.1L412.8 165.9L410.4 165.7L408.1 165.3L405.8 164.9L403.5 164.3L401.3 163.6L399.2 162.9L397.2 162.0L395.2 161.1L385.7 169.7L385.7 169.7L387.5 170.7L389.2 171.9L390.9 173.1L392.4 174.4L393.8 175.7L395.1 177.1L396.2 178.6L397.2 180.2L398 181.8L398.8 183.4L399.3 185.1L399.7 186.8L400 188.5L400.1 190.2L400 192.0L399.8 193.7L399.5 195.5L398.9 197.2L398.3 199.0L397.5 200.7L396.5 202.3L395.4 204.0L394.1 205.6L392.7 207.1L391.2 208.6L389.6 210.0L387.8 211.4L386 212.6L384 213.8L381.9 214.9L379.8 216.0L377.5 216.9L375.2 217.7L372.9 218.5L370.5 219.1L368 219.6L365.5 220.0L363 220.3L360.5 220.5L358 220.6L355.5 220.5L353 220.4L350.6 220.1L348.2 219.7L345.8 219.2L343.5 218.6L341.3 217.9L339.2 217.1L337.1 216.2L335.1 215.2L325 224.4L325 224.4L326.9 225.4L328.6 226.6L330.3 227.9L331.8 229.3L333.2 230.7L334.4 232.2L335.6 233.8L336.5 235.4L337.4 237.1L338.1 238.8L338.6 240.5L338.9 242.3L339.2 244.2L339.2 246.0L339.1 247.8L338.8 249.7L338.4 251.5L337.8 253.4L337.1 255.2L336.2 257.0L335.1 258.8L334 260.5L332.6 262.2L331.1 263.8L329.5 265.4L327.8 266.9L326 268.3L324 269.6L322 270.9L319.8 272.1L317.6 273.2L315.2 274.1L312.8 275.0L310.4 275.8L307.9 276.5L305.4 277.0L302.8 277.4L300.2 277.7L297.6 277.9L295 278.0L292.5 278.0L289.9 277.8L287.4 277.5L285 277.1L282.6 276.6L280.2 276.0L277.9 275.3L275.8 274.4L273.7 273.4L271.7 272.4L261 282.0L261 282.0L262.9 283.2L264.7 284.4L266.3 285.8L267.8 287.2L269.2 288.7L270.5 290.3L271.6 292.0L272.5 293.7L273.3 295.4L274 297.3L274.4 299.1L274.8 301.0L274.9 302.9L274.9 304.9L274.8 306.8L274.4 308.8L273.9 310.8L273.3 312.7L272.4 314.6L271.5 316.5L270.3 318.4L269.1 320.2L267.6 322.0L266.1 323.7L264.4 325.4L262.5 327.0L260.6 328.5L258.5 329.9L256.4 331.2L254.1 332.5L251.8 333.6L249.4 334.7L246.9 335.6L244.3 336.4L241.8 337.1L239.1 337.7L236.5 338.1L233.8 338.5L231.2 338.7L228.5 338.8L225.9 338.7L223.2 338.5L220.7 338.2L218.2 337.8L215.7 337.3L213.3 336.6L211 335.8L208.8 334.9L206.7 333.9L204.7 332.8L193.4 343.0L193.4 343.0L195.3 344.2L197 345.5L198.7 347.0L200.2 348.5L201.6 350.1L202.8 351.8L203.9 353.5L204.8 355.3L205.6 357.2L206.2 359.1L206.6 361.1L206.9 363.1L207 365.1L206.9 367.2L206.7 369.3L206.3 371.3L205.7 373.4L205 375.5L204.1 377.5L203 379.5L201.8 381.5L200.4 383.4L198.9 385.3L197.2 387.1L195.4 388.9L207.8 396.5L207.8 396.5L209.8 394.8L211.8 393.2L214 391.7L216.2 390.3L218.5 389.0L221 387.8L223.4 386.7L226 385.7L228.6 384.9L231.3 384.1L233.9 383.5L236.6 383.1L239.4 382.7L242.1 382.5L244.8 382.4L247.5 382.5L250.2 382.6L252.8 383.0L255.4 383.4L257.9 384.0L260.3 384.7L262.7 385.5L265 386.4L267.2 387.5L269.3 388.6L271.3 389.9L273.1 391.3L274.9 392.8L276.5 394.4L277.9 396.0L279.2 397.8L280.4 399.6L281.4 401.5L282.3 403.4L282.9 405.4L283.5 407.5L283.8 409.6L284 411.7L284 413.9L283.8 416.0L283.5 418.2L283 420.3L282.3 422.5L281.4 424.6L280.4 426.7L279.2 428.8L277.9 430.8L276.4 432.7L274.8 434.6L273 436.5L286 444.4L286 444.4L287.9 442.7L289.9 441.0L292 439.4L294.3 438.0L296.6 436.6L299 435.3L301.6 434.2L304.1 433.2L306.8 432.3L309.4 431.5L312.2 430.9L314.9 430.4L317.7 430.1L320.4 429.8L323.2 429.7L325.9 429.8L328.7 430.0L331.4 430.3L334 430.8L336.6 431.4L339.1 432.1L341.6 432.9L344 433.9L346.3 435.0L348.4 436.2L350.5 437.6L352.5 439.0L354.3 440.6L356 442.2L357.5 443.9L358.9 445.8L360.2 447.7L361.3 449.6L362.2 451.7L363 453.8L363.6 455.9L364 458.1L364.3 460.3L364.4 462.5L364.3 464.8L364 467.0L363.6 469.3L362.9 471.5L362.1 473.8L361.2 475.9L360 478.1L358.8 480.2L357.3 482.2L355.7 484.2L353.9 486.1L367.5 494.4L367.5 494.4L369.4 492.6L371.4 490.9L373.5 489.2L375.7 487.7L378.1 486.3L380.5 484.9L383 483.8L385.6 482.7L388.3 481.8L391 481.0L393.8 480.3L396.5 479.8L399.3 479.4L402.2 479.2L405 479.1L407.8 479.2L410.6 479.4L413.4 479.7L416.1 480.2L418.8 480.8L421.4 481.5L423.9 482.4L426.4 483.5L428.7 484.6L431 485.9L433.2 487.3L435.2 488.8L437.1 490.4L438.9 492.1L440.6 493.9L442.1 495.8L443.4 497.8L444.6 499.9L445.7 502.0L446.5 504.2L447.2 506.4L447.7 508.7L448.1 511.0L448.3 513.3L448.2 515.7L448.1 518.0L447.7 520.4L447.1 522.7L446.4 525.1L445.5 527.3L444.4 529.6L443.2 531.8L441.8 533.9L440.2 536.0L438.5 538.0L452.6 546.7L452.6 546.7L454.5 544.8L456.5 542.9L458.6 541.2L460.8 539.6L463.2 538.1L465.6 536.8L468.1 535.5L470.7 534.4L473.4 533.4L476.2 532.6L479 531.9L481.8 531.4L484.6 531.0L487.5 530.7L490.4 530.7L493.3 530.7L496.1 530.9L499 531.3L501.8 531.8L504.5 532.4L507.2 533.2L509.9 534.1L512.4 535.2L514.9 536.4L517.2 537.7L519.5 539.2L521.7 540.8L523.7 542.4L525.6 544.2L527.3 546.1L528.9 548.1L530.4 550.2L531.7 552.3L532.8 554.6L533.8 556.9L534.6 559.2L535.2 561.6L535.7 564.0L535.9 566.4L536 568.9L535.9 571.3L535.6 573.8L535.1 576.3L534.5 578.7L533.6 581.1L532.6 583.4L531.4 585.7L530.1 588.0L528.5 590.1L526.9 592.2L541.7 601.3L541.7 601.3L543.5 599.3L545.4 597.4L547.5 595.6L549.8 593.9L552.1 592.3L554.5 590.9L557.1 589.6L559.7 588.5L562.4 587.4L565.2 586.6L568 585.9L570.9 585.3L573.8 584.9L576.7 584.6L579.7 584.5L582.6 584.6L585.5 584.8L588.5 585.2L591.3 585.7L594.2 586.4L597 587.2L599.7 588.2L602.3 589.3L604.9 590.5L607.4 591.9L609.8 593.4L612 595.1L614.1 596.9L616.2 598.7L618 600.7L619.7 602.8L621.3 605.0L622.7 607.2L624 609.5L625.1 611.9L626 614.4L626.7 616.9L627.2 619.4L627.6 621.9L627.8 624.5L627.7 627.1L627.5 629.7L627.1 632.2L626.6 634.8L625.8 637.3L624.9 639.7L623.7 642.1L622.4 644.5L620.9 646.7L619.3 648.9L634.8 658.4L634.8 658.4L636.6 656.3L638.5 654.3L640.6 652.5L642.8 650.7L645.1 649.1L647.6 647.6L650.1 646.2L652.8 645.0L655.5 643.9L658.3 643.0L661.2 642.3L664.1 641.7L667 641.3L670 641.0L673 640.9L676.1 640.9L679.1 641.2L682.1 641.6L685 642.1L688 642.8L690.9 643.7L693.7 644.7L696.4 645.9L699.1 647.2ZM333.2 376.4L330.9 377.7L328.6 378.9L326.2 380.0L323.7 380.9L321.1 381.8L318.5 382.5L315.8 383.1L313.1 383.6L310.4 383.9L307.7 384.1L305 384.2L302.3 384.2L299.6 384.0L297 383.7L294.4 383.3L291.9 382.7L289.4 382.0L287 381.2L284.7 380.2L282.5 379.2L280.5 378.0L278.5 376.8L276.6 375.4L274.9 373.9L273.3 372.4L271.9 370.8L270.6 369.1L269.4 367.3L268.5 365.4L267.6 363.6L267 361.6L266.5 359.7L266.2 357.7L266 355.6L266 353.6L266.2 351.6L266.5 349.5L267.1 347.5L267.7 345.5L268.6 343.5L269.6 341.6L270.7 339.7L272 337.8L273.4 336.0L275 334.3L276.7 332.6L278.5 331.0L280.4 329.5L282.5 328.1L284.6 326.7L286.9 325.5L289.2 324.3L291.6 323.3L294 322.4L296.5 321.6L299.1 320.9L301.7 320.3L304.3 319.9L306.9 319.6L309.5 319.4L312.2 319.3L314.8 319.3L317.4 319.5L319.9 319.8L322.5 320.2L324.9 320.7L327.3 321.4L329.7 322.2L331.9 323.1L334.1 324.1L336.2 325.2L338.1 326.4L340 327.7L341.7 329.1L343.3 330.6L344.8 332.1L346.1 333.8L347.3 335.5L348.3 337.3L349.2 339.1L349.9 341.0L350.5 343.0L350.9 344.9L351.1 346.9L351.2 349.0L351.1 351.0L350.8 353.0L350.4 355.1L349.8 357.1L349 359.1L348.1 361.1L347 363.0L345.7 364.9L344.4 366.8L342.8 368.6L341.1 370.3L339.3 371.9L337.4 373.5L335.4 375.0ZM397.9 313.6L395.8 314.8L393.5 315.9L391.2 317.0L388.8 317.9L386.3 318.7L383.8 319.4L381.2 319.9L378.6 320.4L376 320.7L373.4 320.9L370.7 321.0L368.1 320.9L365.5 320.8L362.9 320.5L360.4 320.1L357.9 319.5L355.5 318.9L353.2 318.1L350.9 317.2L348.8 316.2L346.7 315.1L344.8 313.9L342.9 312.7L341.2 311.3L339.6 309.8L338.2 308.3L336.9 306.7L335.7 305.0L334.7 303.3L333.8 301.5L333.1 299.6L332.6 297.8L332.2 295.9L332 294.0L332 292.1L332.1 290.1L332.4 288.2L332.8 286.3L333.4 284.4L334.2 282.5L335.1 280.7L336.1 278.9L337.3 277.1L338.7 275.4L340.1 273.8L341.7 272.2L343.5 270.7L345.3 269.2L347.2 267.9L349.3 266.6L351.4 265.5L353.6 264.4L355.9 263.4L358.3 262.6L360.7 261.8L363.2 261.1L365.7 260.6L368.2 260.2L370.7 259.9L373.3 259.7L375.9 259.6L378.4 259.6L380.9 259.8L383.4 260.1L385.9 260.5L388.3 261.0L390.7 261.6L393 262.3L395.2 263.2L397.3 264.1L399.3 265.2L401.3 266.3L403.1 267.5L404.8 268.9L406.4 270.3L407.9 271.8L409.3 273.3L410.5 274.9L411.5 276.6L412.4 278.4L413.2 280.2L413.8 282.0L414.2 283.9L414.5 285.8L414.6 287.7L414.6 289.6L414.4 291.5L414 293.4L413.5 295.4L412.8 297.3L411.9 299.1L410.9 301.0L409.8 302.8L408.5 304.5L407 306.2L405.5 307.8L403.8 309.4L401.9 310.9L400 312.3ZM457 255.4L454.9 256.4L452.6 257.4L450.3 258.3L447.9 259.0L445.5 259.7L443 260.2L440.5 260.6L438 261.0L435.4 261.1L432.9 261.2L430.3 261.2L427.8 261.0L425.3 260.7L422.8 260.4L420.4 259.8L418 259.2L415.7 258.5L413.5 257.7L411.4 256.7L409.3 255.7L407.4 254.6L405.6 253.3L403.9 252.0L402.3 250.6L400.8 249.2L399.5 247.7L398.3 246.1L397.3 244.4L396.4 242.8L395.7 241.0L395.1 239.3L394.7 237.5L394.4 235.7L394.3 233.8L394.4 232.0L394.6 230.2L395 228.4L395.5 226.6L396.2 224.8L397 223.1L398 221.4L399.1 219.7L400.4 218.1L401.8 216.5L403.3 215.0L404.9 213.6L406.7 212.3L408.5 211.0L410.5 209.8L412.5 208.7L414.6 207.7L416.8 206.7L419.1 205.9L421.4 205.2L423.8 204.6L426.2 204.1L428.7 203.7L431.2 203.4L433.7 203.2L436.1 203.1L438.6 203.2L441.1 203.3L443.5 203.6L445.9 203.9L448.3 204.4L450.6 205.0L452.9 205.7L455 206.5L457.1 207.4L459.2 208.4L461.1 209.5L462.9 210.6L464.6 211.9L466.2 213.2L467.7 214.6L469 216.1L470.2 217.6L471.3 219.2L472.2 220.9L473 222.6L473.7 224.3L474.1 226.1L474.5 227.9L474.6 229.7L474.6 231.5L474.5 233.3L474.2 235.2L473.7 237.0L473.1 238.8L472.3 240.5L471.4 242.3L470.3 244.0L469.1 245.6L467.8 247.2L466.3 248.8L464.7 250.3L462.9 251.7L461.1 253.0L459.1 254.2ZM515 199.1L513 200.1L510.8 201.0L508.6 201.9L506.3 202.6L503.9 203.2L501.5 203.7L499.1 204.1L496.6 204.4L494.2 204.6L491.7 204.7L489.2 204.6L486.7 204.5L484.3 204.2L481.9 203.8L479.5 203.3L477.2 202.8L474.9 202.1L472.7 201.3L470.6 200.4L468.6 199.4L466.7 198.3L464.9 197.2L463.2 195.9L461.6 194.6L460.2 193.3L458.8 191.8L457.6 190.3L456.6 188.8L455.7 187.2L454.9 185.5L454.3 183.8L453.9 182.1L453.6 180.4L453.4 178.7L453.4 177.0L453.6 175.3L453.9 173.5L454.4 171.8L455 170.1L455.7 168.5L456.6 166.9L457.7 165.3L458.9 163.8L460.2 162.3L461.6 160.9L463.2 159.5L464.8 158.2L466.6 157.0L468.5 155.9L470.4 154.8L472.5 153.9L474.6 153.0L476.8 152.2L479 151.5L481.3 151.0L483.7 150.5L486.1 150.1L488.5 149.8L490.9 149.6L493.3 149.6L495.7 149.6L498.1 149.8L500.5 150.0L502.9 150.4L505.2 150.8L507.4 151.4L509.6 152.0L511.8 152.8L513.9 153.6L515.8 154.6L517.7 155.6L519.5 156.7L521.2 157.9L522.8 159.2L524.3 160.5L525.7 161.9L526.9 163.4L528 164.9L528.9 166.4L529.7 168.0L530.4 169.7L530.9 171.4L531.3 173.1L531.5 174.8L531.5 176.5L531.4 178.2L531.2 180.0L530.8 181.7L530.2 183.4L529.5 185.1L528.7 186.7L527.7 188.3L526.5 189.9L525.3 191.4L523.9 192.9L522.3 194.3L520.7 195.6L518.9 196.8L517 198.0ZM571.9 144.7L570 145.8L568 146.7L566 147.6L563.8 148.4L561.6 149.1L559.3 149.6L557 150.1L554.6 150.5L552.2 150.8L549.8 151.0L547.4 151.0L545 151.0L542.6 150.8L540.2 150.6L537.8 150.2L535.5 149.8L533.2 149.2L531 148.6L528.9 147.8L526.8 147.0L524.8 146.0L522.9 145.0L521.1 143.9L519.4 142.8L517.9 141.5L516.4 140.2L515.1 138.8L513.9 137.4L512.8 135.9L511.9 134.4L511.1 132.9L510.5 131.3L510 129.7L509.7 128.0L509.5 126.4L509.4 124.8L509.5 123.1L509.8 121.5L510.2 119.9L510.8 118.3L511.5 116.7L512.3 115.2L513.3 113.7L514.4 112.2L515.6 110.8L517 109.5L518.4 108.2L520 107.0L521.7 105.8L523.5 104.7L525.4 103.7L527.4 102.8L529.4 102.0L531.5 101.3L533.7 100.6L535.9 100.1L538.2 99.6L540.5 99.2L542.8 99.0L545.2 98.8L547.5 98.7L549.9 98.8L552.2 98.9L554.6 99.1L556.9 99.5L559.1 99.9L561.4 100.4L563.5 101.1L565.7 101.8L567.7 102.6L569.7 103.5L571.5 104.5L573.3 105.5L575 106.6L576.6 107.8L578.1 109.1L579.4 110.4L580.6 111.8L581.7 113.3L582.7 114.7L583.5 116.3L584.2 117.8L584.8 119.4L585.2 121.0L585.4 122.7L585.5 124.3L585.5 126.0L585.3 127.6L584.9 129.2L584.4 130.8L583.8 132.4L583 134.0L582.1 135.5L581 137.0L579.8 138.4L578.5 139.8L577 141.2L575.4 142.4L573.7 143.6ZM646.1 183.5L644.1 184.5L642.1 185.4L639.9 186.2L637.7 186.9L635.4 187.5L633 188.1L630.6 188.4L628.2 188.7L625.7 188.9L623.3 189.0L620.8 188.9L618.4 188.8L615.9 188.5L613.5 188.2L611.1 187.7L608.8 187.1L606.5 186.4L604.3 185.7L602.1 184.8L600.1 183.8L598.1 182.8L596.2 181.6L594.5 180.4L592.8 179.1L591.3 177.8L589.9 176.3L588.6 174.9L587.5 173.3L586.5 171.7L585.6 170.1L584.9 168.5L584.3 166.8L583.9 165.1L583.7 163.4L583.6 161.7L583.6 160.0L583.8 158.3L584.2 156.7L584.7 155.0L585.3 153.4L586.1 151.8L587.1 150.2L588.1 148.7L589.3 147.3L590.7 145.9L592.1 144.5L593.7 143.3L595.4 142.1L597.2 141.0L599 139.9L601 139.0L603.1 138.1L605.2 137.3L607.4 136.7L609.6 136.1L611.9 135.6L614.2 135.2L616.6 135.0L619 134.8L621.4 134.7L623.8 134.8L626.2 134.9L628.6 135.2L630.9 135.5L633.3 135.9L635.6 136.5L637.8 137.1L640 137.9L642.1 138.7L644.1 139.6L646.1 140.7L647.9 141.8L649.7 142.9L651.3 144.2L652.9 145.5L654.3 146.9L655.6 148.3L656.8 149.8L657.8 151.3L658.7 152.9L659.5 154.5L660.1 156.2L660.6 157.9L660.9 159.6L661.1 161.3L661.1 163.0L661 164.7L660.7 166.4L660.2 168.0L659.6 169.7L658.9 171.3L658 172.9L657 174.4L655.8 175.9L654.5 177.4L653 178.7L651.5 180.1L649.8 181.3L648 182.5ZM411 424.8L408.6 426.1L406.2 427.2L403.7 428.2L401.1 429.1L398.5 429.8L395.8 430.5L393 431.0L390.3 431.3L387.5 431.5L384.7 431.6L382 431.6L379.3 431.4L376.6 431.1L373.9 430.6L371.3 430.0L368.8 429.3L366.3 428.4L363.9 427.5L361.6 426.4L359.5 425.2L357.4 423.8L355.5 422.4L353.6 420.9L352 419.3L350.4 417.6L349.1 415.8L347.8 414.0L346.8 412.0L345.8 410.1L345.1 408.1L344.5 406.0L344.1 403.9L343.9 401.8L343.8 399.7L343.9 397.6L344.2 395.5L344.7 393.3L345.3 391.2L346.1 389.2L347 387.2L348.1 385.2L349.4 383.2L350.8 381.4L352.3 379.5L354 377.8L355.8 376.1L357.7 374.6L359.7 373.1L361.9 371.7L364.1 370.4L366.4 369.2L368.8 368.2L371.3 367.2L373.8 366.4L376.4 365.6L379 365.0L381.7 364.6L384.3 364.2L387 364.0L389.7 363.9L392.4 364.0L395 364.2L397.7 364.5L400.2 364.9L402.8 365.5L405.3 366.1L407.7 367.0L410 367.9L412.2 368.9L414.4 370.1L416.4 371.3L418.4 372.7L420.2 374.1L421.9 375.7L423.4 377.3L424.9 379.0L426.1 380.8L427.2 382.7L428.2 384.6L429 386.6L429.7 388.6L430.1 390.7L430.5 392.8L430.6 394.9L430.6 397.0L430.4 399.1L430 401.2L429.5 403.3L428.7 405.4L427.9 407.5L426.8 409.5L425.6 411.5L424.3 413.4L422.8 415.3L421.1 417.1L419.4 418.8L417.4 420.5L415.4 422.0L413.3 423.5ZM581.7 525.3L579.3 526.6L576.9 527.9L574.3 529.0L571.7 529.9L569 530.8L566.2 531.4L563.4 532.0L560.6 532.4L557.7 532.6L554.8 532.7L551.9 532.7L549.1 532.5L546.2 532.1L543.4 531.6L540.6 531.0L537.9 530.2L535.3 529.2L532.7 528.2L530.3 527.0L527.9 525.7L525.7 524.2L523.5 522.7L521.5 521.0L519.6 519.3L517.9 517.4L516.3 515.5L514.9 513.5L513.6 511.4L512.5 509.2L511.6 507.0L510.9 504.8L510.3 502.5L509.9 500.2L509.6 497.9L509.6 495.6L509.7 493.3L510 491.0L510.5 488.7L511.2 486.5L512 484.3L513 482.1L514.1 480.0L515.5 477.9L516.9 476.0L518.5 474.1L520.3 472.3L522.2 470.6L524.2 468.9L526.3 467.4L528.5 466.0L530.8 464.8L533.3 463.6L535.8 462.5L538.3 461.6L541 460.9L543.7 460.2L546.4 459.7L549.2 459.3L551.9 459.1L554.7 459.0L557.5 459.1L560.3 459.3L563.1 459.6L565.8 460.1L568.5 460.7L571.1 461.4L573.7 462.3L576.2 463.3L578.6 464.4L581 465.7L583.2 467.0L585.3 468.5L587.3 470.1L589.2 471.8L591 473.6L592.6 475.4L594 477.4L595.4 479.4L596.5 481.5L597.5 483.7L598.3 485.8L599 488.1L599.5 490.4L599.8 492.7L599.9 495.0L599.9 497.3L599.7 499.6L599.3 501.9L598.7 504.2L597.9 506.4L597 508.6L595.9 510.8L594.7 512.9L593.2 514.9L591.7 516.9L589.9 518.8L588.1 520.5L586.1 522.2L583.9 523.8ZM496.8 472.6L494.5 474.0L492.1 475.3L489.7 476.4L487.2 477.5L484.5 478.4L481.9 479.2L479.1 479.9L476.4 480.4L473.6 480.8L470.8 481.0L467.9 481.1L465.1 481.0L462.3 480.8L459.6 480.5L456.8 480.0L454.1 479.4L451.5 478.6L449 477.8L446.5 476.7L444.1 475.6L441.9 474.3L439.7 473.0L437.7 471.5L435.8 469.9L434 468.2L432.4 466.4L430.9 464.6L429.6 462.6L428.4 460.6L427.4 458.6L426.6 456.5L425.9 454.3L425.4 452.2L425.1 450.0L425 447.8L425 445.5L425.2 443.3L425.6 441.1L426.2 438.9L426.9 436.8L427.8 434.7L428.8 432.6L430 430.6L431.4 428.6L432.9 426.7L434.5 424.9L436.3 423.2L438.2 421.6L440.2 420.0L442.3 418.6L444.6 417.2L446.9 416.0L449.3 414.9L451.8 413.9L454.4 413.0L457 412.3L459.6 411.6L462.3 411.1L465 410.8L467.8 410.6L470.5 410.5L473.2 410.5L475.9 410.7L478.6 411.0L481.3 411.5L483.9 412.1L486.5 412.8L488.9 413.6L491.4 414.6L493.7 415.7L495.9 416.9L498.1 418.2L500.1 419.6L502 421.1L503.8 422.7L505.4 424.4L506.9 426.2L508.3 428.1L509.5 430.0L510.6 432.0L511.5 434.1L512.2 436.2L512.8 438.3L513.2 440.5L513.4 442.7L513.5 444.9L513.3 447.1L513 449.4L512.6 451.6L511.9 453.7L511.1 455.9L510.1 458.0L509 460.1L507.7 462.1L506.2 464.0L504.6 465.9L502.8 467.7L500.9 469.4L498.9 471.0ZM474.8 359.3L472.6 360.5L470.3 361.5L467.8 362.5L465.3 363.3L462.8 364.0L460.2 364.6L457.6 365.1L454.9 365.4L452.2 365.6L449.5 365.7L446.9 365.7L444.2 365.5L441.6 365.2L439 364.8L436.4 364.2L433.9 363.5L431.5 362.7L429.2 361.8L426.9 360.8L424.8 359.6L422.8 358.4L420.8 357.0L419 355.6L417.4 354.1L415.8 352.5L414.4 350.8L413.2 349.1L412.1 347.3L411.2 345.4L410.4 343.5L409.8 341.6L409.3 339.6L409 337.6L408.9 335.6L409 333.6L409.2 331.6L409.5 329.6L410.1 327.6L410.8 325.7L411.7 323.7L412.7 321.9L413.8 320.0L415.1 318.3L416.6 316.6L418.1 314.9L419.8 313.4L421.7 311.9L423.6 310.5L425.6 309.1L427.8 307.9L430 306.8L432.3 305.8L434.7 304.9L437.1 304.1L439.6 303.4L442.1 302.9L444.7 302.4L447.3 302.1L449.9 301.9L452.5 301.8L455.1 301.9L457.7 302.0L460.2 302.3L462.8 302.7L465.2 303.3L467.7 303.9L470 304.7L472.3 305.5L474.5 306.5L476.7 307.6L478.7 308.8L480.6 310.1L482.4 311.5L484.1 312.9L485.6 314.5L487.1 316.1L488.3 317.8L489.5 319.5L490.5 321.4L491.3 323.2L492 325.1L492.5 327.1L492.9 329.0L493.1 331.0L493.1 333.0L493 335.0L492.7 337.0L492.2 339.0L491.6 341.0L490.8 343.0L489.8 344.9L488.7 346.7L487.4 348.6L486 350.3L484.5 352.0L482.8 353.6L481 355.2L479.1 356.7L477 358.0ZM643.2 454.0L640.9 455.2L638.5 456.4L636.1 457.4L633.6 458.3L631 459.1L628.3 459.7L625.6 460.3L622.8 460.6L620.1 460.9L617.3 460.9L614.5 460.9L611.7 460.7L608.9 460.4L606.2 459.9L603.5 459.3L600.8 458.6L598.2 457.7L595.7 456.7L593.3 455.6L591 454.3L588.8 453.0L586.7 451.5L584.7 449.9L582.8 448.3L581.1 446.5L579.5 444.7L578.1 442.8L576.8 440.9L575.7 438.8L574.7 436.8L573.9 434.7L573.3 432.5L572.8 430.4L572.5 428.2L572.4 426.0L572.5 423.8L572.8 421.7L573.2 419.5L573.7 417.4L574.5 415.3L575.4 413.3L576.5 411.3L577.7 409.4L579.1 407.5L580.6 405.7L582.2 404.0L584 402.4L585.9 400.9L587.9 399.5L590 398.2L592.3 397.0L594.6 395.9L597 394.9L599.5 394.0L602 393.3L604.6 392.7L607.2 392.2L609.9 391.8L612.6 391.6L615.3 391.5L618 391.6L620.7 391.8L623.4 392.1L626.1 392.5L628.7 393.1L631.3 393.8L633.8 394.6L636.3 395.6L638.7 396.6L640.9 397.8L643.1 399.1L645.2 400.5L647.2 402.0L649.1 403.6L650.8 405.3L652.5 407.0L653.9 408.9L655.3 410.8L656.4 412.7L657.5 414.8L658.3 416.8L659 418.9L659.5 421.1L659.9 423.2L660.1 425.4L660.1 427.6L660 429.8L659.6 431.9L659.1 434.1L658.5 436.2L657.6 438.3L656.6 440.3L655.4 442.3L654.1 444.2L652.6 446.0L651 447.8L649.2 449.5L647.3 451.1L645.3 452.6ZM559.4 404.3L557.2 405.6L555 406.9L552.6 408.0L550.2 409.0L547.7 409.8L545.1 410.6L542.5 411.2L539.8 411.7L537.1 412.0L534.4 412.3L531.6 412.3L528.9 412.3L526.2 412.1L523.5 411.8L520.8 411.3L518.2 410.8L515.6 410.0L513.1 409.2L510.7 408.2L508.4 407.2L506.2 406.0L504 404.7L502 403.3L500.1 401.8L498.4 400.2L496.7 398.5L495.2 396.8L493.9 395.0L492.7 393.1L491.7 391.2L490.8 389.2L490.1 387.1L489.6 385.1L489.2 383.0L489 380.9L489 378.9L489.2 376.8L489.5 374.7L489.9 372.6L490.6 370.6L491.4 368.6L492.4 366.6L493.5 364.7L494.7 362.9L496.1 361.1L497.7 359.4L499.4 357.8L501.2 356.2L503.1 354.8L505.1 353.4L507.3 352.1L509.5 351.0L511.8 349.9L514.2 349.0L516.6 348.1L519.2 347.4L521.7 346.9L524.3 346.4L526.9 346.1L529.6 345.9L532.2 345.8L534.9 345.8L537.5 346.0L540.2 346.3L542.8 346.7L545.3 347.3L547.8 347.9L550.3 348.7L552.6 349.6L554.9 350.7L557.1 351.8L559.2 353.0L561.2 354.4L563.1 355.8L564.9 357.3L566.6 358.9L568.1 360.6L569.4 362.4L570.7 364.2L571.8 366.1L572.7 368.1L573.4 370.0L574.1 372.1L574.5 374.1L574.8 376.2L574.9 378.3L574.8 380.4L574.6 382.4L574.2 384.5L573.6 386.6L572.9 388.6L572 390.6L570.9 392.6L569.7 394.4L568.3 396.3L566.8 398.1L565.1 399.7L563.4 401.4L561.4 402.9ZM535.1 297.4L533 298.5L530.7 299.5L528.4 300.4L526 301.2L523.5 301.9L521 302.5L518.5 302.9L515.9 303.2L513.3 303.4L510.7 303.5L508.1 303.5L505.5 303.3L502.9 303.0L500.4 302.6L497.9 302.1L495.5 301.4L493.1 300.7L490.8 299.8L488.6 298.8L486.5 297.8L484.5 296.6L482.6 295.3L480.8 294.0L479.1 292.5L477.6 291.0L476.2 289.4L474.9 287.8L473.8 286.1L472.8 284.3L472 282.5L471.4 280.7L470.9 278.8L470.6 276.9L470.4 275.0L470.4 273.1L470.5 271.2L470.8 269.4L471.3 267.5L471.9 265.6L472.7 263.8L473.7 262.1L474.7 260.3L476 258.7L477.3 257.0L478.8 255.5L480.4 254.0L482.1 252.6L484 251.3L485.9 250.0L488 248.9L490.1 247.8L492.3 246.9L494.6 246.0L497 245.3L499.4 244.6L501.8 244.1L504.3 243.7L506.8 243.4L509.3 243.2L511.9 243.1L514.4 243.1L516.9 243.3L519.4 243.6L521.9 244.0L524.3 244.5L526.7 245.1L529 245.8L531.3 246.6L533.4 247.5L535.5 248.6L537.5 249.7L539.4 250.9L541.2 252.2L542.9 253.6L544.4 255.1L545.9 256.6L547.2 258.2L548.3 259.9L549.3 261.6L550.2 263.3L550.9 265.1L551.5 267.0L551.9 268.8L552.1 270.7L552.2 272.6L552.1 274.5L551.9 276.4L551.5 278.3L550.9 280.2L550.2 282.0L549.3 283.8L548.3 285.6L547.1 287.3L545.8 289.0L544.3 290.6L542.7 292.1L541 293.6L539.1 294.9L537.2 296.2ZM701 386.8L698.9 388.0L696.6 389.1L694.3 390.0L691.8 390.9L689.3 391.6L686.8 392.2L684.1 392.7L681.5 393.1L678.8 393.3L676.1 393.4L673.4 393.3L670.6 393.1L668 392.8L665.3 392.4L662.6 391.8L660.1 391.1L657.5 390.3L655.1 389.3L652.7 388.3L650.4 387.1L648.2 385.8L646.1 384.5L644.1 383.0L642.3 381.4L640.6 379.8L639 378.1L637.6 376.3L636.3 374.4L635.1 372.5L634.1 370.6L633.3 368.6L632.7 366.6L632.2 364.5L631.8 362.5L631.7 360.4L631.7 358.4L631.9 356.3L632.2 354.3L632.7 352.3L633.4 350.4L634.2 348.4L635.2 346.6L636.4 344.7L637.6 343.0L639.1 341.3L640.6 339.7L642.3 338.2L644.1 336.7L646.1 335.4L648.1 334.1L650.2 333.0L652.4 332.0L654.8 331.0L657.1 330.2L659.6 329.5L662.1 329.0L664.6 328.5L667.2 328.2L669.8 328.0L672.5 327.9L675.1 327.9L677.7 328.1L680.4 328.4L683 328.8L685.5 329.4L688.1 330.0L690.5 330.8L692.9 331.7L695.3 332.7L697.5 333.8L699.7 335.0L701.8 336.4L703.7 337.8L705.6 339.3L707.3 340.9L708.9 342.5L710.4 344.2L711.8 346.0L712.9 347.9L714 349.8L714.9 351.8L715.6 353.8L716.2 355.8L716.6 357.8L716.8 359.9L716.9 361.9L716.8 364.0L716.5 366.0L716.1 368.0L715.5 370.0L714.7 372.0L713.8 373.9L712.7 375.8L711.4 377.6L710 379.3L708.5 381.0L706.8 382.6L705 384.1L703.1 385.5ZM618.5 339.9L616.4 341.2L614.2 342.3L612 343.4L609.6 344.3L607.2 345.2L604.7 345.9L602.2 346.4L599.6 346.9L597 347.2L594.4 347.4L591.7 347.5L589 347.5L586.4 347.3L583.8 347.0L581.2 346.6L578.6 346.0L576.1 345.4L573.6 344.6L571.3 343.7L569 342.7L566.8 341.5L564.7 340.3L562.7 339.0L560.8 337.6L559 336.1L557.4 334.5L555.9 332.8L554.6 331.1L553.4 329.4L552.3 327.5L551.4 325.7L550.7 323.7L550.1 321.8L549.7 319.9L549.5 317.9L549.4 315.9L549.5 313.9L549.7 312.0L550.2 310.0L550.7 308.1L551.5 306.2L552.3 304.4L553.4 302.6L554.6 300.8L555.9 299.2L557.3 297.5L558.9 296.0L560.6 294.5L562.5 293.2L564.4 291.9L566.4 290.7L568.6 289.6L570.8 288.6L573.1 287.7L575.5 286.9L577.9 286.2L580.4 285.7L582.9 285.2L585.4 284.9L588 284.7L590.6 284.7L593.2 284.7L595.7 284.9L598.3 285.1L600.8 285.6L603.3 286.1L605.8 286.7L608.2 287.5L610.5 288.3L612.7 289.3L614.9 290.3L617 291.5L619 292.8L620.9 294.1L622.6 295.6L624.3 297.1L625.8 298.7L627.2 300.4L628.4 302.1L629.5 303.9L630.5 305.7L631.2 307.6L631.9 309.5L632.4 311.4L632.7 313.4L632.8 315.4L632.8 317.3L632.7 319.3L632.3 321.3L631.8 323.2L631.2 325.1L630.3 327.0L629.3 328.8L628.2 330.6L626.9 332.4L625.5 334.0L623.9 335.6L622.2 337.2L620.4 338.6ZM672.3 280.3L670.2 281.4L668 282.4L665.8 283.3L663.5 284.1L661.1 284.7L658.6 285.3L656.1 285.7L653.6 286.0L651 286.2L648.4 286.3L645.8 286.3L643.3 286.1L640.7 285.8L638.2 285.4L635.7 284.9L633.2 284.3L630.8 283.5L628.5 282.7L626.2 281.7L624 280.6L622 279.5L620 278.2L618.1 276.9L616.4 275.5L614.8 274.0L613.3 272.4L611.9 270.8L610.7 269.1L609.6 267.4L608.7 265.6L608 263.8L607.4 262.0L606.9 260.2L606.6 258.3L606.5 256.4L606.5 254.6L606.7 252.7L607.1 250.9L607.6 249.0L608.2 247.3L609.1 245.5L610 243.8L611.1 242.2L612.4 240.6L613.7 239.0L615.2 237.6L616.9 236.2L618.6 234.9L620.5 233.7L622.4 232.5L624.5 231.5L626.6 230.5L628.8 229.7L631.1 229.0L633.4 228.3L635.8 227.8L638.3 227.4L640.8 227.1L643.2 226.9L645.8 226.8L648.3 226.9L650.8 227.0L653.3 227.3L655.7 227.7L658.2 228.2L660.6 228.8L662.9 229.5L665.2 230.3L667.4 231.2L669.6 232.2L671.6 233.3L673.6 234.5L675.5 235.8L677.2 237.2L678.8 238.6L680.4 240.1L681.7 241.7L683 243.3L684.1 245.0L685.1 246.8L685.9 248.5L686.6 250.4L687.1 252.2L687.4 254.0L687.6 255.9L687.7 257.8L687.6 259.6L687.3 261.5L686.8 263.3L686.2 265.1L685.5 266.9L684.6 268.7L683.5 270.4L682.3 272.0L681 273.6L679.5 275.1L677.9 276.5L676.1 277.9L674.3 279.1ZM592.1 238.9L590.1 240.0L587.9 240.9L585.7 241.8L583.3 242.5L581 243.2L578.5 243.7L576.1 244.1L573.6 244.4L571.1 244.6L568.5 244.7L566 244.6L563.5 244.5L561 244.2L558.5 243.8L556 243.3L553.7 242.7L551.3 242.0L549.1 241.2L546.9 240.3L544.8 239.2L542.8 238.1L540.9 236.9L539.2 235.6L537.5 234.3L536 232.8L534.6 231.3L533.3 229.8L532.2 228.2L531.2 226.5L530.4 224.8L529.7 223.1L529.1 221.3L528.8 219.5L528.6 217.7L528.5 215.9L528.6 214.1L528.8 212.4L529.3 210.6L529.8 208.8L530.5 207.1L531.4 205.4L532.4 203.8L533.5 202.2L534.8 200.7L536.2 199.2L537.8 197.8L539.4 196.5L541.2 195.2L543 194.0L545 192.9L547 191.9L549.2 191.0L551.4 190.2L553.6 189.5L556 188.9L558.3 188.4L560.7 188.0L563.2 187.7L565.6 187.5L568.1 187.5L570.5 187.5L573 187.7L575.4 187.9L577.9 188.3L580.2 188.8L582.6 189.3L584.8 190.0L587.1 190.8L589.2 191.7L591.3 192.7L593.2 193.7L595.1 194.9L596.9 196.1L598.6 197.4L600.1 198.8L601.5 200.3L602.8 201.8L604 203.4L605 205.0L605.9 206.7L606.7 208.4L607.2 210.1L607.7 211.9L608 213.6L608.1 215.4L608.1 217.2L607.9 219.0L607.5 220.8L607 222.6L606.4 224.3L605.6 226.0L604.6 227.7L603.5 229.3L602.3 230.9L600.9 232.4L599.4 233.9L597.7 235.3L596 236.6L594.1 237.8ZM757.6 322.2L755.7 323.4L753.6 324.5L751.4 325.6L749.2 326.5L746.8 327.3L744.4 328.0L741.9 328.6L739.4 329.0L736.8 329.3L734.2 329.5L731.6 329.6L728.9 329.6L726.3 329.4L723.6 329.1L721 328.7L718.5 328.2L715.9 327.5L713.5 326.7L711.1 325.8L708.7 324.8L706.5 323.7L704.3 322.5L702.2 321.2L700.3 319.8L698.4 318.4L696.7 316.8L695.2 315.2L693.7 313.5L692.4 311.7L691.3 309.9L690.2 308.1L689.4 306.2L688.7 304.3L688.2 302.4L687.8 300.5L687.6 298.5L687.6 296.6L687.7 294.6L688 292.7L688.4 290.8L689 289.0L689.8 287.2L690.7 285.4L691.8 283.7L693 282.0L694.3 280.4L695.8 278.9L697.4 277.5L699.1 276.1L701 274.8L702.9 273.7L705 272.6L707.1 271.6L709.3 270.7L711.6 270.0L714 269.3L716.4 268.8L718.9 268.3L721.4 268.0L723.9 267.8L726.5 267.8L729 267.8L731.6 268.0L734.2 268.2L736.7 268.6L739.2 269.1L741.7 269.8L744.1 270.5L746.5 271.4L748.8 272.3L751 273.4L753.1 274.5L755.2 275.8L757.1 277.1L759 278.5L760.7 280.0L762.3 281.6L763.8 283.2L765.1 284.9L766.3 286.7L767.4 288.5L768.3 290.3L769 292.2L769.6 294.1L770.1 296.0L770.3 298.0L770.5 299.9L770.4 301.9L770.2 303.8L769.8 305.7L769.3 307.6L768.6 309.4L767.7 311.2L766.7 313.0L765.5 314.7L764.2 316.4L762.8 317.9L761.2 319.4L759.5 320.8ZM725.1 222.7L723.2 223.8L721.1 224.7L718.9 225.6L716.7 226.3L714.3 226.9L712 227.4L709.5 227.9L707.1 228.2L704.6 228.3L702.1 228.4L699.6 228.4L697 228.2L694.5 227.9L692.1 227.6L689.6 227.1L687.2 226.5L684.9 225.8L682.6 225.0L680.4 224.0L678.2 223.0L676.2 221.9L674.2 220.8L672.4 219.5L670.6 218.2L669 216.7L667.5 215.3L666.2 213.7L665 212.1L663.9 210.5L662.9 208.8L662.2 207.1L661.5 205.4L661 203.6L660.7 201.9L660.5 200.1L660.5 198.3L660.7 196.6L661 194.8L661.4 193.1L662 191.4L662.8 189.8L663.7 188.2L664.7 186.6L665.9 185.1L667.2 183.6L668.6 182.2L670.1 180.9L671.8 179.7L673.6 178.5L675.5 177.5L677.4 176.5L679.5 175.6L681.6 174.8L683.8 174.1L686.1 173.5L688.4 173.0L690.8 172.6L693.2 172.3L695.6 172.1L698 172.1L700.5 172.1L702.9 172.3L705.4 172.5L707.8 172.9L710.2 173.3L712.5 173.9L714.8 174.6L717.1 175.3L719.3 176.2L721.4 177.2L723.4 178.2L725.3 179.4L727.2 180.6L728.9 181.9L730.5 183.2L732 184.7L733.4 186.2L734.7 187.7L735.8 189.3L736.8 191.0L737.6 192.6L738.3 194.4L738.9 196.1L739.3 197.8L739.5 199.6L739.6 201.4L739.5 203.1L739.3 204.9L738.9 206.6L738.4 208.4L737.7 210.0L736.8 211.7L735.8 213.3L734.7 214.8L733.4 216.3L732 217.8L730.5 219.1L728.8 220.4L727 221.6ZM807.3 263.5L805.3 264.6L803.2 265.5L801 266.4L798.8 267.2L796.4 267.8L794 268.4L791.6 268.8L789.1 269.1L786.5 269.3L784 269.4L781.4 269.3L778.8 269.2L776.3 268.9L773.7 268.5L771.2 268.0L768.7 267.4L766.3 266.6L763.9 265.8L761.6 264.9L759.4 263.8L757.3 262.7L755.3 261.4L753.3 260.1L751.5 258.7L749.8 257.3L748.2 255.7L746.8 254.1L745.5 252.5L744.3 250.8L743.3 249.0L742.4 247.3L741.7 245.5L741.1 243.6L740.7 241.8L740.5 240.0L740.4 238.1L740.5 236.3L740.7 234.5L741.1 232.7L741.7 230.9L742.4 229.2L743.2 227.5L744.2 225.9L745.3 224.4L746.6 222.8L748 221.4L749.5 220.0L751.2 218.8L752.9 217.6L754.8 216.4L756.8 215.4L758.8 214.5L761 213.7L763.2 212.9L765.5 212.3L767.8 211.8L770.2 211.4L772.6 211.1L775.1 210.9L777.6 210.8L780.1 210.9L782.6 211.0L785.1 211.3L787.6 211.7L790 212.2L792.4 212.7L794.8 213.4L797.1 214.2L799.4 215.1L801.6 216.1L803.7 217.2L805.7 218.4L807.6 219.7L809.5 221.0L811.2 222.4L812.8 223.9L814.2 225.5L815.6 227.1L816.8 228.7L817.9 230.5L818.8 232.2L819.6 234.0L820.2 235.8L820.7 237.6L821 239.4L821.1 241.3L821.1 243.1L821 245.0L820.6 246.8L820.2 248.5L819.5 250.3L818.7 252.0L817.8 253.7L816.7 255.3L815.4 256.8L814.1 258.3L812.6 259.7L810.9 261.1L809.1 262.3ZM675 577.4L672.8 578.9L670.4 580.3L668 581.6L665.4 582.8L662.7 583.8L660 584.6L657.2 585.3L654.4 585.9L651.5 586.3L648.5 586.6L645.6 586.7L642.7 586.6L639.7 586.4L636.8 586.0L633.9 585.5L631 584.8L628.2 584.0L625.5 583.0L622.9 581.9L620.3 580.7L617.8 579.3L615.5 577.8L613.2 576.2L611.1 574.5L609.1 572.6L607.3 570.7L605.6 568.7L604.1 566.5L602.7 564.4L601.5 562.1L600.4 559.8L599.6 557.5L598.9 555.1L598.4 552.7L598.1 550.3L597.9 547.9L598 545.5L598.2 543.1L598.6 540.7L599.2 538.3L600 536.0L600.9 533.8L602 531.6L603.3 529.4L604.7 527.4L606.2 525.4L608 523.5L609.8 521.7L611.8 520.0L613.9 518.5L616.1 517.0L618.5 515.7L620.9 514.4L623.4 513.4L626 512.4L628.7 511.6L631.4 510.9L634.2 510.4L637 510.0L639.8 509.8L642.7 509.7L645.5 509.7L648.4 509.9L651.2 510.3L654 510.8L656.8 511.4L659.5 512.2L662.2 513.1L664.8 514.1L667.3 515.3L669.7 516.6L672.1 518.0L674.3 519.6L676.4 521.2L678.4 523.0L680.2 524.9L682 526.8L683.5 528.9L685 531.0L686.2 533.2L687.3 535.4L688.3 537.7L689 540.0L689.6 542.4L690 544.8L690.3 547.2L690.3 549.6L690.2 552.1L689.9 554.5L689.4 556.8L688.7 559.2L687.8 561.5L686.8 563.8L685.6 565.9L684.2 568.1L682.7 570.1L681 572.1L679.1 574.0L677.2 575.7ZM732.8 504.4L730.6 505.7L728.2 506.9L725.7 508.0L723.2 508.9L720.6 509.8L717.9 510.4L715.1 511.0L712.3 511.4L709.5 511.6L706.6 511.7L703.8 511.6L700.9 511.4L698.1 511.1L695.3 510.6L692.5 510.0L689.7 509.2L687.1 508.3L684.5 507.2L682 506.1L679.5 504.8L677.2 503.4L675 501.8L672.9 500.2L670.9 498.5L669.1 496.6L667.4 494.7L665.9 492.8L664.5 490.7L663.3 488.6L662.2 486.5L661.3 484.3L660.6 482.0L660 479.8L659.7 477.5L659.5 475.2L659.5 473.0L659.6 470.7L660 468.5L660.5 466.2L661.1 464.1L662 461.9L663 459.9L664.2 457.9L665.5 455.9L667 454.1L668.6 452.3L670.4 450.6L672.2 449.0L674.2 447.5L676.4 446.2L678.6 444.9L680.9 443.8L683.3 442.7L685.8 441.8L688.4 441.1L691 440.4L693.7 439.9L696.4 439.6L699.2 439.3L701.9 439.3L704.7 439.3L707.5 439.5L710.2 439.8L713 440.3L715.7 440.9L718.3 441.6L720.9 442.5L723.5 443.5L725.9 444.6L728.3 445.8L730.6 447.1L732.8 448.6L734.9 450.2L736.9 451.8L738.7 453.6L740.5 455.4L742 457.3L743.5 459.3L744.8 461.4L745.9 463.5L746.8 465.6L747.6 467.8L748.3 470.1L748.7 472.3L749 474.6L749.1 476.9L749 479.1L748.8 481.4L748.3 483.6L747.7 485.8L747 488.0L746 490.1L744.9 492.2L743.6 494.2L742.2 496.1L740.6 498.0L738.9 499.7L737 501.4L735 502.9ZM789.3 434.3L787.1 435.5L784.8 436.7L782.5 437.7L780 438.6L777.5 439.3L774.9 440.0L772.2 440.5L769.5 440.8L766.8 441.1L764 441.2L761.3 441.1L758.5 440.9L755.7 440.6L753 440.1L750.3 439.5L747.6 438.8L745 437.9L742.4 437.0L740 435.9L737.6 434.6L735.3 433.3L733.1 431.9L731 430.3L729.1 428.7L727.3 427.0L725.6 425.2L724 423.3L722.6 421.4L721.4 419.4L720.3 417.4L719.4 415.3L718.6 413.2L718.1 411.1L717.6 409.0L717.4 406.8L717.3 404.7L717.4 402.6L717.7 400.4L718.1 398.4L718.8 396.3L719.5 394.3L720.5 392.4L721.5 390.5L722.8 388.6L724.2 386.9L725.7 385.2L727.4 383.6L729.2 382.1L731.1 380.7L733.1 379.4L735.2 378.2L737.5 377.2L739.8 376.2L742.2 375.4L744.7 374.6L747.2 374.0L749.8 373.6L752.4 373.2L755.1 373.0L757.7 372.9L760.4 373.0L763.1 373.1L765.8 373.5L768.5 373.9L771.1 374.5L773.7 375.1L776.3 376.0L778.8 376.9L781.2 377.9L783.6 379.1L785.8 380.4L788 381.7L790.1 383.2L792 384.8L793.8 386.4L795.6 388.1L797.1 390.0L798.6 391.8L799.9 393.8L801 395.8L802 397.8L802.8 399.9L803.5 402.0L804 404.1L804.3 406.2L804.4 408.4L804.4 410.5L804.2 412.6L803.9 414.8L803.3 416.8L802.6 418.9L801.7 420.9L800.7 422.8L799.5 424.7L798.2 426.5L796.7 428.2L795 429.9L793.2 431.5L791.3 432.9ZM844.4 366.9L842.5 368.2L840.4 369.4L838.2 370.5L835.9 371.4L833.6 372.3L831.1 373.0L828.6 373.6L826.1 374.1L823.5 374.4L820.8 374.6L818.1 374.7L815.4 374.7L812.7 374.5L810 374.2L807.3 373.7L804.7 373.2L802.1 372.5L799.5 371.7L797 370.8L794.6 369.7L792.3 368.6L790 367.3L787.9 366.0L785.8 364.5L783.9 363.0L782.1 361.4L780.4 359.7L778.8 357.9L777.4 356.1L776.2 354.2L775.1 352.3L774.2 350.4L773.4 348.4L772.8 346.4L772.3 344.3L772 342.3L771.9 340.3L772 338.3L772.2 336.3L772.5 334.3L773.1 332.4L773.8 330.5L774.7 328.7L775.7 326.9L776.8 325.2L778.1 323.5L779.6 321.9L781.2 320.4L782.9 319.0L784.7 317.7L786.6 316.5L788.7 315.3L790.8 314.3L793.1 313.4L795.4 312.6L797.8 311.9L800.2 311.4L802.7 310.9L805.3 310.6L807.8 310.4L810.4 310.3L813.1 310.4L815.7 310.5L818.3 310.8L820.9 311.2L823.5 311.8L826 312.4L828.5 313.2L831 314.1L833.4 315.0L835.7 316.1L837.9 317.3L840 318.6L842.1 320.0L844 321.5L845.8 323.1L847.5 324.7L849.1 326.4L850.5 328.2L851.8 330.0L853 331.9L854 333.8L854.8 335.7L855.5 337.7L856.1 339.7L856.4 341.8L856.6 343.8L856.6 345.8L856.5 347.8L856.2 349.8L855.7 351.8L855.1 353.7L854.3 355.6L853.3 357.4L852.2 359.2L850.9 360.9L849.5 362.5L847.9 364.1L846.2 365.6ZM892.7 305.9L890.7 307.0L888.6 308.0L886.4 308.9L884.1 309.7L881.8 310.4L879.4 311.0L876.9 311.4L874.3 311.7L871.8 311.9L869.2 312.0L866.5 312.0L863.9 311.8L861.3 311.5L858.7 311.1L856.1 310.6L853.5 309.9L851 309.1L848.6 308.3L846.2 307.3L843.9 306.2L841.7 305.0L839.5 303.7L837.5 302.4L835.6 300.9L833.8 299.4L832.1 297.8L830.6 296.1L829.2 294.4L827.9 292.6L826.8 290.8L825.9 289.0L825.1 287.1L824.4 285.2L823.9 283.3L823.6 281.4L823.5 279.5L823.5 277.6L823.6 275.7L823.9 273.8L824.4 272.0L825.1 270.2L825.9 268.5L826.8 266.8L827.9 265.2L829.1 263.6L830.5 262.1L832 260.7L833.6 259.3L835.4 258.1L837.2 256.9L839.2 255.9L841.3 254.9L843.4 254.0L845.7 253.3L848 252.6L850.3 252.1L852.8 251.7L855.2 251.4L857.7 251.2L860.3 251.1L862.8 251.2L865.4 251.3L867.9 251.6L870.5 252.0L873 252.5L875.5 253.1L877.9 253.8L880.3 254.7L882.6 255.6L884.9 256.6L887.1 257.8L889.2 259.0L891.2 260.3L893.2 261.7L895 263.2L896.6 264.7L898.2 266.3L899.6 268.0L901 269.7L902.1 271.5L903.1 273.3L904 275.2L904.7 277.1L905.3 279.0L905.7 280.9L905.9 282.8L906 284.7L905.9 286.6L905.6 288.5L905.2 290.3L904.6 292.1L903.9 293.9L903 295.7L901.9 297.3L900.7 299.0L899.4 300.5L897.9 302.0L896.3 303.4L894.5 304.7Z"/>
<path fill="none" stroke="#000" stroke-width="1" shape-rendering="crispEdges" d="M172.6 401.3L2145.4 1625.9"/>
<g shape-rendering="crispEdges" stroke-width="1.3" fill="none">
<line x1="115.5" y1="657.7" x2="149" y2="676.6" stroke="#ff0000"/>
<line x1="115.5" y1="657.7" x2="139.6" y2="632.1" stroke="#00ff00"/>
<line x1="115.5" y1="657.7" x2="115.5" y2="632.1" stroke="#0000ff"/>
<path stroke="#000" stroke-width="1.2" d="M152 677 L158 683 M158 677 L152 683 M141 624 L144 627 L147 624 M144 627 L144 630 M112 624 L118 624 L112 630 L118 630"/>
</g></svg>
<div class="a" style="left:1174px;top:794px;width:32px;height:31px;background:#dadada;border:1px solid #b4b4b4;border-radius:3px"></div>
<div class="a" style="left:1247px;top:794px;width:32px;height:31px;background:#dadada;border:1px solid #b4b4b4;border-radius:3px"></div>
<div class="a" style="left:1280px;top:794px;width:32px;height:31px;background:#dadada;border:1px solid #b4b4b4;border-radius:3px"></div>
<div class="t " style="left:757px;top:836px;">Console</div>
<div class="a" style="left:753px;top:854px;width:1155px;height:192px;background:#fff;border:1px solid #a8a8a8"></div>
<div class="a" style="left:1893px;top:854px;width:15px;height:192px;background:#fff;border:1px solid #a8a8a8"></div>
<div class="a" style="left:1893px;top:868px;width:15px;height:136px;background:#dcdcdc;border:1px solid #b8b8b8"></div>
<div class="a" style="left:1893px;top:1004px;width:15px;height:28px;background:linear-gradient(90deg,#fdfdfd,#eee);border:1px solid #b8b8b8"></div>
<div class="a" style="left:1893px;top:1031px;width:15px;height:15px;background:#f8f8f8;border:1px solid #a8a8a8"></div>
<div class="t con" style="left:758px;top:855px;">Total rendering time: 0 hours, 0 minutes, 31 seconds</div>
<div class="t con" style="left:758px;top:870px;">Top level object is a 3D object:</div>
<div class="t con" style="left:758px;top:885px;">Simple: yes</div>
<div class="t con" style="left:758px;top:900px;">Vertices: 7248</div>
<div class="t con" style="left:758px;top:915px;">Halfedges: 21744</div>
<div class="t con" style="left:758px;top:930px;">Edges: 10872</div>
<div class="t con" style="left:758px;top:945px;">Halffacets: 7252</div>
<div class="t con" style="left:758px;top:960px;">Facets: 3626</div>
<div class="t con" style="left:758px;top:975px;">Volumes: 2</div>
<div class="t con" style="left:758px;top:990px;">Rendering finished.</div>
<div class="t con" style="left:758px;top:1020px;">STL export finished: /home/unix/Desktop/buckling2.stl</div>
<div class="t st" style="left:14px;top:1050px;">Viewport: translate = [ 34.72 21.02 9.36 ], rotate = [ 39.60 0.00 35.50 ], distance = 174.52 (1155x731)</div>
<div class="t st2" style="left:1765px;top:1050px;">OpenSCAD 2019.05</div>
<svg width="1920" height="1080" style="position:absolute;left:0;top:0" fill="none">
<g stroke="#e6e6e6" stroke-width="1.3" shape-rendering="crispEdges">
<path d="M13.5 8.5L17.5 12L13.5 15.5 M18 15.5H24"/>
<path d="M49.5 8.5H53L54 9.5H58.5V15.5H49.5Z M49.5 10.5H58.5"/>
<path d="M86.5 8.5L93.5 15.5 M93.5 8.5L86.5 15.5 M88 8.5H86.5V10 M92 15.5H93.5V14"/>
<path d="M157.5 8.5H166.5V15.5H157.5Z M157.5 10.5H166.5"/><circle cx="162" cy="13" r="1.6"/>
<path d="M196 15V8.5H201V14 M196 8.5L201 8.5"/><circle cx="195" cy="15" r="1.2"/><circle cx="200" cy="14.5" r="1.2"/>
</g>
<path d="M126 15.5L122.3 11.6C121.2 10.4 122 8.6 123.6 8.6C124.7 8.6 125.5 9.3 126 10C126.5 9.3 127.3 8.6 128.4 8.6C130 8.6 130.8 10.4 129.7 11.6Z" fill="#d8d8d8"/>
<g fill="#dcdcdc"><path d="M795 8H796.3V15H795Z M802 8V15L796.8 11.5Z"/><path d="M813 8V15L818.5 11.5Z"/><path d="M830 8V15L835.2 11.5Z M835.7 8H837V15H835.7Z"/></g>
<path d="M912 11.5H945" stroke="#4caf50" stroke-width="1"/><path d="M945 11.5H952" stroke="#f0a020" stroke-width="1"/><path d="M952.5 7V17" stroke="#e8e8e8" stroke-width="1.2"/><path d="M954 11.5H977" stroke="#555" stroke-width="1"/>
<g stroke="#8a8a8a" stroke-width="1.1">
<ellipse cx="999" cy="12" rx="3.8" ry="2.6"/><circle cx="999" cy="12" r="0.9" fill="#8a8a8a"/>
<path d="M1175 9.5H1183M1175 12H1183M1175 14.5H1183" stroke-dasharray="1 1"/>
<path d="M1228.5 8.5H1236.5V15.5H1228.5Z" stroke-dasharray="1.2 0.8"/><rect x="1230.5" y="10.5" width="4" height="3" fill="#8a8a8a" stroke="none"/>
<path d="M1284 15L1290 9M1285.5 15.5L1290.5 10.5" />
<path d="M1343 10.5Q1348 6 1353 10.5M1344.5 12.5Q1348 9.5 1351.5 12.5M1346 14.3Q1348 12.8 1350 14.3"/>
<path d="M1459 8L1456 12.5H1459L1457 16" />
<circle cx="1514" cy="12" r="3.5"/><path d="M1514 10V12H1515.5"/>
<path d="M1649 12.5Q1649 9.5 1652 10Q1654 8 1655.5 10.5Q1656 13.5 1653 14H1650Q1649 14 1649 12.5Z"/>
<path d="M1688 12.5L1689 11.5L1690 12.5L1691 11.5L1692 12.5L1693 11.5L1694 12.5" stroke="#cfcfcf" stroke-width="0.9"/>
</g>
<g stroke="#e5c41e" stroke-width="1.3"><path d="M1701 13Q1701 9.5 1704.5 10Q1706.5 7.5 1709 10Q1711 10 1711 12.5Q1711 14.5 1709 14.5H1703Q1701 14.5 1701 13Z M1704 16V18M1706 16V19M1708 16V18"/><circle cx="1712" cy="9" r="2.2"/><path d="M1712 4.5V5.5M1715.5 6L1714.8 6.7M1716.5 9H1715.5"/></g>
<g stroke="#f0a030" stroke-width="1.2"><circle cx="1751" cy="11" r="2.8" fill="#f0a030"/><path d="M1751 5.5V7M1751 15V16.5M1745.5 11H1747M1755 11H1756.5M1747 7L1748 8M1754 14L1755 15M1755 7L1754 8M1747 15L1748 14"/></g>
<path d="M1826.5 16V11.5Q1826.5 8 1830 8Q1833.5 8 1833.5 11.5V16L1832.3 15L1831.2 16L1830 15L1828.8 16L1827.6 15Z" fill="#dedede"/>
<path d="M1866 16L1871 7L1876 16L1871 12.5Z" fill="#ff1a6e"/>
<circle cx="1904" cy="12.8" r="7.5" fill="#e01717"/><path d="M1900 15.3V10.8L1904 13.8L1908 10.8V15.3" stroke="#fff" stroke-width="1.6"/>
<g stroke="#222" stroke-width="1.5" stroke-linejoin="round">
<path d="M31 90H36.6Q37.6 90 37.6 91V103Q37.6 104 36.6 104H27.4Q26.4 104 26.4 103V94.6Z"/>
<path d="M26.8 94.6H31V90.3Z" fill="#222"/>
</g>
<circle cx="32.2" cy="99.3" r="2.5" fill="#222"/>
<g fill="#222">
<path d="M56.2 91.4H61.5L62.5 92.6H65V94.4H56.2Z M56.2 96.4H65.8L66.3 95.3Q68.5 93.8 70.8 94V91.6L74.2 95L70.8 98.4V96.2Q68 96 66.5 98.6V102.8H56.2Z"/>
<path d="M90.6 89H93.6V94.2H102.4V89H105.2V104.2H90.6Z M95 89.5H96.6V92.6H95Z"/>
</g>
<rect x="93.2" y="100.6" width="9.6" height="1.8" fill="#c8c8c8"/>
<path d="M118.5 88V107" stroke="#cfcfcf" stroke-width="1"/><path d="M258 88V107" stroke="#cfcfcf"/><path d="M331.5 87V107" stroke="#cfcfcf"/>
<g stroke="#1a1a1a" stroke-width="2.3" fill="none"><path d="M145.4 102Q145.4 93 139.1 93Q135 93 133 97"/><path d="M163.6 102Q163.6 93 169.9 93Q174 93 176 97"/></g>
<g fill="#1a1a1a"><path d="M129 94.2L129.2 101.8L136.4 101.8Z"/><path d="M180 94.2L179.8 101.8L172.6 101.8Z"/></g>
<g stroke="#555" stroke-width="1.7">
<path d="M195 92.1H203.3M204.3 92.1H209.8M195 95.4H204M198.2 98.4H204M195 101.9H203.3M204.3 101.9H209.8"/>
<path d="M231 92.1H236.2M237.2 92.1H246M237 95.4H246M237 98.4H242.8M231 101.9H236.2M237.2 101.9H246"/>
</g>
<g stroke="#222" stroke-width="1.8"><path d="M212.8 97.1H206.5M208.8 94.5L206 97.1L208.8 99.7"/><path d="M228 97.1H234.3M232 94.5L234.8 97.1L232 99.7"/></g>
<g stroke="#222" stroke-width="1.2" stroke-dasharray="1.6 1.4" fill="none"><circle cx="276.7" cy="94.5" r="9.2"/><path d="M268.7 90.3L276.7 94.3L284.7 90.3 M276.7 94.3V97.8"/></g><path d="M270.7 99.3L273.7 99.3L277.7 103.8L273.7 108.3L270.7 108.3L274.7 103.8Z M276.7 99.3L279.7 99.3L283.7 103.8L279.7 108.3L276.7 108.3L280.7 103.8Z" fill="#111"/>
<g stroke="#1a1a1a" stroke-width="1.4" fill="none" stroke-linejoin="round"><path d="M309.6 85.4L318.6 90.4L318.6 101.4L309.6 106.4L300.6 101.4L300.6 90.4Z M300.6 90.4L309.6 95.4L318.6 90.4 M309.6 95.4V98.4"/></g><path d="M306.6 99.4H312.6V100.7H306.6Z M307.1 101.7H312.1L309.6 104.4Z M306.6 106.9H312.6V108.2H306.6Z" fill="#1a1a1a"/>
<path d="M344.3 96.6V91L349 86.4H355.5V96.6" stroke="#1a1a1a" stroke-width="1.5" fill="none"/><path d="M344.5 91.2L349 86.6V91.2Z" fill="#1a1a1a"/>
<text x="340.3" y="106.6" font-family="Liberation Sans" font-weight="bold" font-size="10.2" fill="#111" letter-spacing="-0.2">STL</text>
<g stroke="#444" stroke-width="1.3" fill="none" stroke-linejoin="round"><path d="M376 96.5L382 99L389 96.5V104L382 107.5L375.5 104Z M376 96.5L382 94.5L389 96.5 M382 99V107.5"/><path d="M383 92V97" stroke="#333"/></g>
<path d="M379.5 86.2H385.8V87.6H379.5Z M381 88.4H384.3V91Q382.7 93 381 91Z" fill="#111"/>
<rect x="734.5" y="63.5" width="10.5" height="10.5" rx="2" stroke="#6a6a6a" stroke-width="1"/><path d="M737.0 66.0L742.0 71.0M742.0 66.0L737.0 71.0" stroke="#555" stroke-width="1.8"/>
<rect x="1896.5" y="839.5" width="10.5" height="10.5" rx="2" stroke="#6a6a6a" stroke-width="1"/><path d="M1899.0 842.0L1904.0 847.0M1904.0 842.0L1899.0 847.0" stroke="#555" stroke-width="1.8"/>
<g fill="#555"><path d="M736.5 126.5H743.5L740 122.5Z"/><path d="M736.5 1036H743.5L740 1040Z"/><path d="M1897 863H1904L1900.5 859Z"/><path d="M1897 1036H1904L1900.5 1040Z"/></g>
<path d="M718.3 386.5H730.5V396.5H720.5 M720.3 396.5L726 391.5 M720.3 396.5L726.5 401.5" stroke="#222" stroke-width="1"/>
<g stroke="#000" stroke-width="1" shape-rendering="crispEdges">
<path d="M84 579V1041.5H89"/>
<path d="M84 884.5H88 M84 936.5H88"/>
<rect x="78.5" y="568.0" width="11" height="11" fill="#fff"/><path d="M81 573.5H87"/>
<rect x="78.5" y="724.0" width="11" height="11" fill="#fff"/><path d="M81 729.5H87"/>
<rect x="78.5" y="750.0" width="11" height="11" fill="#fff"/><path d="M81 755.5H87"/>
<rect x="78.5" y="802.0" width="11" height="11" fill="#fff"/><path d="M81 807.5H87"/>
</g>
<g stroke="#222" stroke-width="1.2" stroke-dasharray="1.6 1.4" fill="none"><circle cx="772.7" cy="806.2" r="9.2"/><path d="M764.7 802.0L772.7 806.0L780.7 802.0 M772.7 806.0V809.5"/></g><path d="M766.7 811.0L769.7 811.0L773.7 815.5L769.7 820.0L766.7 820.0L770.7 815.5Z M772.7 811.0L775.7 811.0L779.7 815.5L775.7 820.0L772.7 820.0L776.7 815.5Z" fill="#111"/>
<g stroke="#1a1a1a" stroke-width="1.4" fill="none" stroke-linejoin="round"><path d="M805.6 796.6L814.6 801.6L814.6 812.6L805.6 817.6L796.6 812.6L796.6 801.6Z M796.6 801.6L805.6 806.6L814.6 801.6 M805.6 806.6V809.6"/></g><path d="M802.6 810.6H808.6V811.9H802.6Z M803.1 812.9H808.1L805.6 815.6Z M802.6 818.1H808.6V819.4H802.6Z" fill="#1a1a1a"/>
<g stroke="#cfcfcf"><path d="M826.5 798V818M966.5 798V818M1170.5 798V818M1243.5 798V818"/></g>
<g stroke="#1a1a1a" stroke-width="2" fill="none"><circle cx="844.3" cy="806.3" r="4.6"/><circle cx="877.4" cy="806.3" r="4.6"/><circle cx="910.3" cy="806.3" r="4.6"/></g>
<g stroke="#1a1a1a" stroke-width="2.4"><path d="M847.5 810L851.5 815.5M880.5 810L884.5 815.5M913.5 810L917.5 815.5"/></g>
<g stroke="#1a1a1a" stroke-width="1.1"><path d="M877.4 803.7V808.9M874.8 806.3H880M907.6 806.3H913"/></g>
<g stroke="#111" stroke-width="1.4" fill="none"><path d="M837.8 802.5V799.6H841M848.5 799.6H851.5V802.5M837.8 809.5V812.6H841M851.5 809.5V811"/></g>
<path d="M937.6 809.5A7.6 7.6 0 1 0 940 803.8" stroke="#1a1a1a" stroke-width="2" fill="none"/><path d="M936.5 800.5L937.8 806.6L943.6 805.2Z" fill="#1a1a1a"/>
<g stroke="#222" stroke-width="1.3" fill="none" stroke-linejoin="round">
<path d="M979.7 800.6H987.5L990.3 807L987.5 814.3H979L976.3 807.5Z M976.3 807.5L984.4 807.6L987.5 800.6 M984.4 807.6L987.5 814.3"/>
<path d="M1011.3 804.8L1018 802L1024.7 804.8V812.8L1018 815.8L1011.3 812.8Z M1011.3 804.8L1018 807.7L1024.7 804.8 M1018 807.7V815.8"/>
<path d="M1042.5 803L1049.3 799.5L1056 802.8L1056.4 810.5L1049.4 813.5L1042.8 810.8Z M1042.8 810.8L1049.3 807.3L1056.4 810.5 M1049.3 807.3V799.5"/>
<path d="M1081.7 800.6H1089.5L1092.3 807.5L1089.5 814.3H1081L1078.2 807L1081.7 800.6 M1081.7 800.6L1084.7 807.6L1081 814.3 M1084.7 807.6H1092.3"/>
<path d="M1110.5 805L1117 802L1123.6 805V812.7L1117 815.8L1110.5 812.7Z M1110.5 805L1117 808L1123.6 805 M1117 808V815.8"/>
<path d="M1143.3 805L1150 802L1156.6 805V812.7L1150 815.8L1143.3 812.7Z M1143.3 805L1150 808 M1150 802V815.8 M1150 808L1156.6 812.7"/>
</g>
<g fill="#111"><path d="M989.5 805.2L993.6 807.5L989.5 809.7Z"/><path d="M1015.6 803.2L1018 798.6L1020.4 803.2Z"/><path d="M1047 812.2H1051.6L1049.3 817Z"/><path d="M1080.2 805.2L1075.8 807.5L1080.2 809.7Z"/>
<path d="M1110.5 805L1117 808V815.8L1110.5 812.7Z"/><path d="M1150 802L1156.6 805V812.7L1150 808Z"/></g>
<g stroke="#111" stroke-width="1.4" fill="none" stroke-linejoin="round"><path d="M1182.7 808.2H1191V816.5H1182.7Z M1182.7 808.2L1199.6 800.2L1191 816.5 M1191 808.2L1199.6 800.2"/>
<path d="M1215.7 806.3H1225V816.3H1215.7Z M1219.5 802.6H1230.6V811.6H1219.5Z M1215.7 806.3L1219.5 802.6M1225 806.3L1230.6 802.6M1225 816.3L1230.6 811.6M1215.7 816.3L1219.5 811.6" stroke-width="1.2"/></g>
<g stroke="#222" stroke-width="1" fill="none"><path d="M1262.6 800.7V808.6H1273.2 M1262.6 808.6L1255.3 815.7"/><circle cx="1262.6" cy="808.6" r="0.9" fill="#222"/>
<path d="M1295.5 800V808.5H1306.5 M1295.5 808.5L1288 815.6 M1295.5 802H1297 M1295.5 804H1297 M1295.5 806H1297 M1298.5 808.5V807 M1300.5 808.5V807 M1302.5 808.5V807 M1304.5 808.5V807 M1289.5 813.5L1290.5 814.5 M1291 812L1292 813 M1292.5 810.5L1293.5 811.5"/></g>
<text x="1296.8" y="816.6" font-family="Liberation Sans" font-size="8.4" fill="#333">10</text>
<g stroke="#333" stroke-width="1.1" stroke-dasharray="1.5 1"><path d="M1322 803.5H1337V813.5H1322Z"/></g><g fill="#222"><circle cx="1322" cy="803.5" r="1"/><circle cx="1337" cy="803.5" r="1"/><circle cx="1322" cy="813.5" r="1"/><circle cx="1337" cy="813.5" r="1"/></g>
<g fill="#b0b0b0"><rect x="1904" y="1065" width="1" height="1"/><rect x="1904" y="1062" width="1" height="1"/><rect x="1904" y="1059" width="1" height="1"/><rect x="1904" y="1056" width="1" height="1"/><rect x="1901" y="1065" width="1" height="1"/><rect x="1901" y="1062" width="1" height="1"/><rect x="1901" y="1059" width="1" height="1"/><rect x="1898" y="1065" width="1" height="1"/><rect x="1898" y="1062" width="1" height="1"/><rect x="1895" y="1065" width="1" height="1"/></g>
</svg>
</body></html>
